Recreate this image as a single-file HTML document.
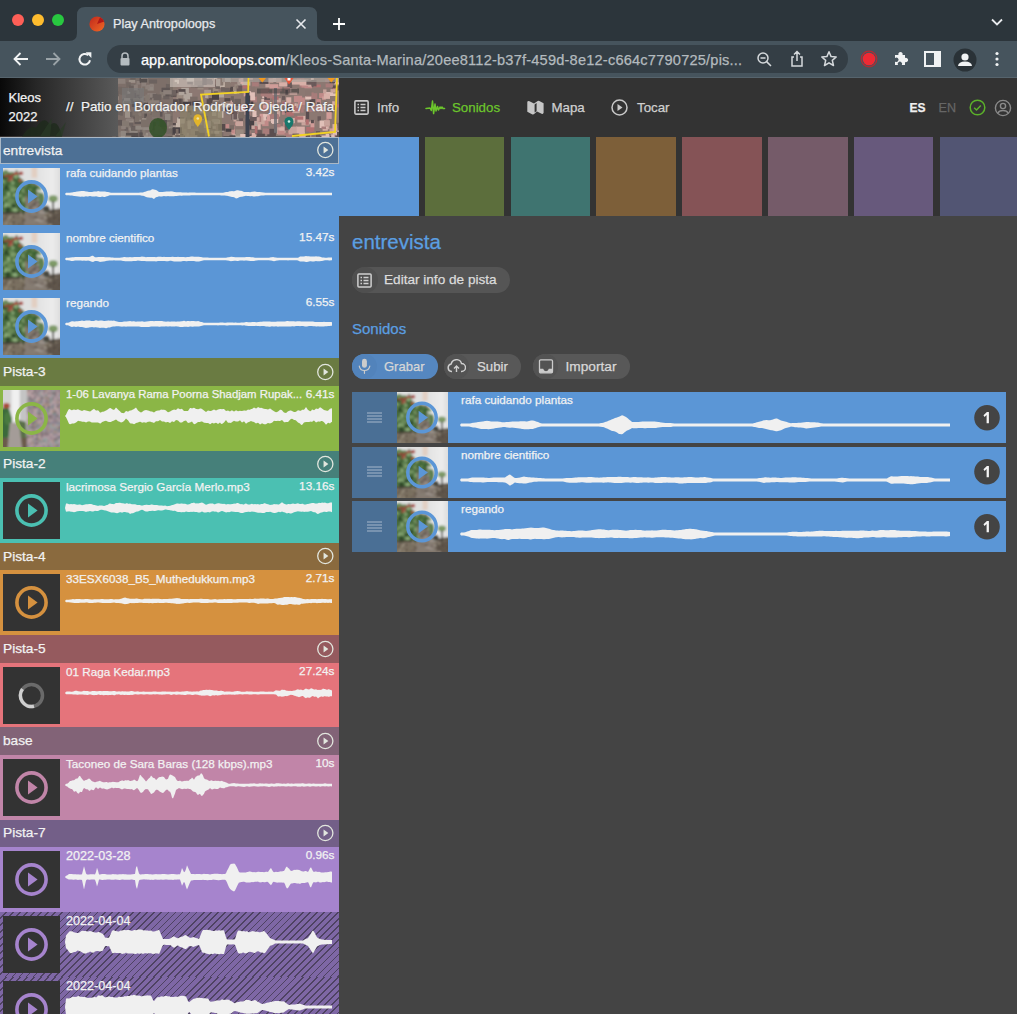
<!DOCTYPE html><html><head><meta charset="utf-8"><style>
*{box-sizing:border-box}
body{margin:0;width:1017px;height:1014px;overflow:hidden;position:relative;background:#444444;font-family:"Liberation Sans", sans-serif;}
.abs{position:absolute}
.t{position:absolute;white-space:nowrap;line-height:1;-webkit-text-stroke:0.25px currentColor}
</style></head><body>

<svg width="0" height="0" style="position:absolute"><defs><g id="gtex"><ellipse cx="8.5" cy="46.1" rx="3.1" ry="3.8" fill="#4a6a3c"/><ellipse cx="23.6" cy="50.4" rx="4.7" ry="3.4" fill="#6a8a58"/><ellipse cx="8.3" cy="77.7" rx="3.4" ry="4.5" fill="#2f4a2a"/><ellipse cx="15.5" cy="68.3" rx="2.7" ry="2.5" fill="#6a8a58"/><ellipse cx="15.2" cy="9.1" rx="4.3" ry="2.5" fill="#6a8a58"/><ellipse cx="-0.1" cy="62.6" rx="4.5" ry="2.8" fill="#6a8a58"/><ellipse cx="29.6" cy="69.5" rx="4.1" ry="4.8" fill="#2f4a2a"/><ellipse cx="30.0" cy="48.4" rx="4.9" ry="2.4" fill="#7a9a68"/><ellipse cx="2.3" cy="17.5" rx="2.7" ry="4.9" fill="#2f4a2a"/><ellipse cx="32.3" cy="67.9" rx="3.3" ry="4.5" fill="#6a8a58"/><ellipse cx="13.4" cy="49.0" rx="3.8" ry="4.7" fill="#4a6a3c"/><ellipse cx="10.3" cy="50.4" rx="4.1" ry="4.1" fill="#7a9a68"/><ellipse cx="40.4" cy="71.3" rx="3.7" ry="4.1" fill="#587a48"/><ellipse cx="25.9" cy="77.2" rx="2.8" ry="2.4" fill="#2f4a2a"/><ellipse cx="35.6" cy="77.3" rx="2.3" ry="4.4" fill="#2f4a2a"/><ellipse cx="16.8" cy="37.1" rx="2.4" ry="3.8" fill="#8aaa78"/><ellipse cx="-0.0" cy="58.3" rx="3.0" ry="4.6" fill="#7a9a68"/><ellipse cx="20.2" cy="77.9" rx="2.9" ry="2.2" fill="#6a8a58"/><ellipse cx="21.6" cy="74.4" rx="4.9" ry="2.9" fill="#7a9a68"/><ellipse cx="4.9" cy="11.0" rx="4.6" ry="2.9" fill="#587a48"/><ellipse cx="37.5" cy="34.4" rx="3.4" ry="3.6" fill="#4a6a3c"/><ellipse cx="36.1" cy="55.7" rx="2.3" ry="4.9" fill="#8aaa78"/><ellipse cx="20.3" cy="38.2" rx="4.2" ry="2.7" fill="#7a9a68"/><ellipse cx="17.2" cy="26.1" rx="2.9" ry="3.0" fill="#8aaa78"/><ellipse cx="16.3" cy="48.6" rx="2.1" ry="3.8" fill="#4a6a3c"/><ellipse cx="3.9" cy="52.3" rx="3.0" ry="3.1" fill="#7a9a68"/><ellipse cx="24.8" cy="27.5" rx="3.5" ry="3.8" fill="#4a6a3c"/><ellipse cx="-1.1" cy="33.8" rx="3.9" ry="2.9" fill="#6a8a58"/><ellipse cx="12.1" cy="33.5" rx="2.9" ry="3.1" fill="#6a8a58"/><ellipse cx="9.6" cy="63.1" rx="2.3" ry="4.4" fill="#6a8a58"/><ellipse cx="20.0" cy="53.8" rx="2.8" ry="3.0" fill="#4a6a3c"/><ellipse cx="17.2" cy="56.9" rx="2.3" ry="3.0" fill="#7a9a68"/><ellipse cx="27.7" cy="23.7" rx="4.4" ry="4.9" fill="#3f6035"/><ellipse cx="12.8" cy="53.5" rx="4.7" ry="3.4" fill="#587a48"/><ellipse cx="40.1" cy="30.1" rx="4.5" ry="3.7" fill="#8aaa78"/><ellipse cx="10.3" cy="64.5" rx="3.9" ry="4.4" fill="#7a9a68"/><ellipse cx="23.9" cy="37.5" rx="3.6" ry="4.5" fill="#2f4a2a"/><ellipse cx="13.2" cy="37.2" rx="3.3" ry="3.2" fill="#2f4a2a"/><ellipse cx="4.9" cy="8.3" rx="4.8" ry="4.6" fill="#6a8a58"/><ellipse cx="17.1" cy="74.5" rx="4.8" ry="2.7" fill="#4a6a3c"/><ellipse cx="18.1" cy="60.7" rx="4.2" ry="4.9" fill="#6a8a58"/><ellipse cx="13.0" cy="23.9" rx="2.2" ry="3.8" fill="#7a9a68"/><ellipse cx="3.3" cy="25.1" rx="2.1" ry="4.4" fill="#6a8a58"/><ellipse cx="38.6" cy="70.8" rx="4.7" ry="3.7" fill="#3f6035"/><ellipse cx="19.2" cy="16.5" rx="3.5" ry="2.7" fill="#3f6035"/><ellipse cx="21.1" cy="37.0" rx="4.8" ry="3.8" fill="#7a9a68"/><ellipse cx="3.5" cy="76.0" rx="3.6" ry="4.4" fill="#3f6035"/><ellipse cx="13.5" cy="21.8" rx="3.6" ry="4.5" fill="#587a48"/><ellipse cx="8.5" cy="27.2" rx="4.7" ry="2.4" fill="#3f6035"/><ellipse cx="19.5" cy="48.0" rx="3.2" ry="4.3" fill="#587a48"/><ellipse cx="9.8" cy="44.9" rx="3.3" ry="3.4" fill="#8aaa78"/><ellipse cx="34.1" cy="68.0" rx="4.3" ry="2.1" fill="#3f6035"/><ellipse cx="1.0" cy="76.2" rx="4.6" ry="2.3" fill="#6a8a58"/><ellipse cx="19.6" cy="19.0" rx="2.2" ry="3.2" fill="#2f4a2a"/><ellipse cx="23.8" cy="33.3" rx="2.6" ry="3.0" fill="#3f6035"/><ellipse cx="3.6" cy="8.2" rx="4.2" ry="4.4" fill="#6a8a58"/><ellipse cx="5.9" cy="34.1" rx="3.8" ry="4.3" fill="#2f4a2a"/><ellipse cx="26.0" cy="11.0" rx="4.7" ry="2.2" fill="#4a6a3c"/><ellipse cx="19.8" cy="57.2" rx="3.3" ry="4.1" fill="#2f4a2a"/><ellipse cx="-1.2" cy="23.3" rx="2.8" ry="3.8" fill="#8aaa78"/><ellipse cx="16.7" cy="37.8" rx="4.6" ry="4.8" fill="#7a9a68"/><ellipse cx="40.6" cy="47.1" rx="4.6" ry="2.4" fill="#4a6a3c"/><ellipse cx="3.4" cy="64.9" rx="4.0" ry="4.7" fill="#8aaa78"/><ellipse cx="14.6" cy="15.6" rx="3.0" ry="3.6" fill="#8aaa78"/><ellipse cx="23.9" cy="8.3" rx="2.4" ry="4.3" fill="#3f6035"/><ellipse cx="21.2" cy="47.5" rx="4.0" ry="3.1" fill="#8aaa78"/><ellipse cx="-1.0" cy="66.9" rx="2.4" ry="4.5" fill="#4a6a3c"/><ellipse cx="19.2" cy="56.7" rx="2.9" ry="2.9" fill="#3f6035"/><ellipse cx="-0.4" cy="61.7" rx="3.5" ry="4.1" fill="#3f6035"/><ellipse cx="22.4" cy="15.0" rx="3.7" ry="3.7" fill="#8aaa78"/><ellipse cx="22.8" cy="66.0" rx="2.7" ry="2.5" fill="#587a48"/><ellipse cx="18.0" cy="57.0" rx="4.8" ry="2.8" fill="#6a8a58"/><ellipse cx="15.5" cy="32.5" rx="3.3" ry="2.2" fill="#6a8a58"/><ellipse cx="8.4" cy="73.1" rx="4.5" ry="4.9" fill="#2f4a2a"/><ellipse cx="28.4" cy="60.9" rx="4.0" ry="3.6" fill="#2f4a2a"/><ellipse cx="4.9" cy="36.1" rx="4.7" ry="2.5" fill="#2f4a2a"/><ellipse cx="30.9" cy="72.2" rx="3.6" ry="3.3" fill="#4a6a3c"/><ellipse cx="20.7" cy="73.4" rx="4.6" ry="3.6" fill="#8aaa78"/><ellipse cx="11.0" cy="57.4" rx="3.2" ry="4.6" fill="#6a8a58"/><ellipse cx="41.3" cy="70.3" rx="2.9" ry="2.8" fill="#8aaa78"/><ellipse cx="14.8" cy="20.1" rx="3.1" ry="3.0" fill="#8aaa78"/><ellipse cx="36.0" cy="37.3" rx="4.1" ry="4.1" fill="#587a48"/><ellipse cx="18.6" cy="66.4" rx="4.5" ry="3.7" fill="#2f4a2a"/><ellipse cx="64.3" cy="48.5" rx="3.8" ry="2.1" fill="#587a48"/><ellipse cx="62.5" cy="44.4" rx="3.6" ry="2.1" fill="#587a48"/><ellipse cx="61.3" cy="32.3" rx="2.4" ry="2.5" fill="#587a48"/><ellipse cx="53.9" cy="45.3" rx="2.1" ry="3.9" fill="#587a48"/><ellipse cx="61.7" cy="34.4" rx="2.8" ry="3.5" fill="#3f6035"/><ellipse cx="37.8" cy="32.9" rx="3.8" ry="2.1" fill="#2f4a2a"/><ellipse cx="52.6" cy="45.3" rx="2.0" ry="2.7" fill="#2f4a2a"/><ellipse cx="46.1" cy="27.3" rx="3.3" ry="3.5" fill="#2f4a2a"/><ellipse cx="46.5" cy="41.3" rx="2.2" ry="2.5" fill="#4a6a3c"/><ellipse cx="47.8" cy="38.2" rx="3.1" ry="2.5" fill="#6a8a58"/><ellipse cx="64.1" cy="36.2" rx="3.5" ry="3.5" fill="#7a9a68"/><ellipse cx="55.2" cy="45.1" rx="3.9" ry="3.6" fill="#3f6035"/><ellipse cx="58.1" cy="53.8" rx="3.3" ry="3.1" fill="#3f6035"/><ellipse cx="55.3" cy="40.3" rx="2.1" ry="2.6" fill="#4a6a3c"/><ellipse cx="52.1" cy="30.5" rx="3.3" ry="3.3" fill="#587a48"/><ellipse cx="45.9" cy="52.6" rx="2.9" ry="2.2" fill="#6a8a58"/><ellipse cx="38.5" cy="34.9" rx="3.4" ry="3.2" fill="#6a8a58"/><ellipse cx="43.6" cy="30.6" rx="3.0" ry="3.6" fill="#4a6a3c"/><ellipse cx="36.2" cy="46.5" rx="3.5" ry="3.1" fill="#4a6a3c"/><ellipse cx="46.5" cy="28.0" rx="2.5" ry="2.1" fill="#587a48"/><ellipse cx="35.3" cy="40.1" rx="2.5" ry="3.5" fill="#7a9a68"/><ellipse cx="62.0" cy="53.4" rx="2.9" ry="3.6" fill="#3f6035"/><ellipse cx="45.3" cy="50.4" rx="2.2" ry="2.5" fill="#3f6035"/><ellipse cx="55.8" cy="41.9" rx="3.8" ry="2.2" fill="#4a6a3c"/><ellipse cx="40.1" cy="37.5" rx="3.5" ry="3.6" fill="#4a6a3c"/><rect x="56.2" y="58.2" width="8.3" height="3.6" fill="#5e5650"/><rect x="59.2" y="77.3" width="5.0" height="2.5" fill="#6a6058"/><rect x="58.9" y="53.4" width="8.5" height="3.9" fill="#a09890"/><rect x="65.4" y="67.2" width="5.5" height="3.0" fill="#5e5650"/><rect x="52.1" y="85.0" width="8.3" height="3.0" fill="#5e5650"/><rect x="57.4" y="61.1" width="4.5" height="3.5" fill="#958a82"/><rect x="57.6" y="75.6" width="6.3" height="2.4" fill="#5e5650"/><rect x="61.6" y="62.2" width="8.6" height="3.9" fill="#7a6e66"/><rect x="71.0" y="79.2" width="8.5" height="2.3" fill="#7a6e66"/><rect x="44.3" y="81.9" width="5.8" height="2.5" fill="#7a6e66"/><rect x="43.5" y="75.9" width="5.7" height="2.7" fill="#6a6058"/><rect x="46.9" y="85.3" width="8.3" height="3.2" fill="#7a6e66"/><rect x="66.5" y="86.4" width="5.7" height="3.6" fill="#7a6e66"/><rect x="57.7" y="93.4" width="7.8" height="3.0" fill="#7a6e66"/><rect x="56.2" y="89.8" width="8.2" height="3.4" fill="#a09890"/><rect x="62.5" y="75.9" width="6.7" height="2.8" fill="#a09890"/><rect x="54.6" y="66.6" width="7.8" height="2.8" fill="#958a82"/><rect x="44.1" y="73.9" width="5.3" height="3.7" fill="#a09890"/><rect x="60.0" y="77.4" width="5.1" height="2.0" fill="#958a82"/><rect x="52.0" y="64.4" width="8.3" height="3.1" fill="#958a82"/><rect x="47.4" y="62.0" width="6.0" height="2.3" fill="#7a6e66"/><rect x="56.4" y="58.7" width="6.2" height="2.4" fill="#7a6e66"/><rect x="51.5" y="71.3" width="4.2" height="3.4" fill="#958a82"/><rect x="53.5" y="71.4" width="4.1" height="3.9" fill="#958a82"/><rect x="52.4" y="63.6" width="5.0" height="2.7" fill="#7a6e66"/><rect x="46.4" y="68.6" width="4.3" height="3.5" fill="#6a6058"/><rect x="77.5" y="99.1" width="7.9" height="3.9" fill="#a09890"/><rect x="49.6" y="64.0" width="8.1" height="3.3" fill="#6a6058"/><rect x="44.7" y="67.2" width="6.2" height="2.2" fill="#5e5650"/><rect x="44.5" y="52.2" width="4.5" height="2.3" fill="#7a6e66"/><rect x="48.3" y="75.1" width="6.5" height="2.7" fill="#a09890"/><rect x="55.2" y="68.3" width="5.8" height="3.3" fill="#a09890"/><rect x="58.0" y="66.6" width="8.7" height="2.2" fill="#6a6058"/><rect x="52.6" y="60.8" width="6.5" height="3.1" fill="#5e5650"/><rect x="72.0" y="84.6" width="4.9" height="3.5" fill="#a09890"/><rect x="61.5" y="92.1" width="8.6" height="2.7" fill="#a09890"/><rect x="55.0" y="73.0" width="7.5" height="2.7" fill="#958a82"/><rect x="64.2" y="76.3" width="8.6" height="3.4" fill="#a09890"/><rect x="47.2" y="54.1" width="7.8" height="3.6" fill="#7a6e66"/><rect x="64.9" y="88.4" width="4.5" height="2.5" fill="#7a6e66"/><rect x="31.4" y="97.4" width="3.3" height="3.8" fill="#9a9080"/><rect x="35.9" y="80.0" width="2.6" height="3.6" fill="#8a806e"/><rect x="10.9" y="86.2" width="3.4" height="3.6" fill="#6e6454"/><rect x="7.1" y="81.0" width="2.5" height="3.3" fill="#8a806e"/><rect x="2.3" y="85.8" width="2.6" height="3.7" fill="#5a5044"/><rect x="17.2" y="98.1" width="3.0" height="3.8" fill="#6e6454"/><rect x="15.8" y="92.4" width="2.1" height="3.6" fill="#8a806e"/><rect x="30.6" y="82.0" width="4.8" height="2.5" fill="#8a806e"/><rect x="15.7" y="84.5" width="4.5" height="3.2" fill="#5a5044"/><rect x="26.9" y="97.4" width="3.0" height="3.2" fill="#5a5044"/><rect x="27.6" y="85.8" width="4.8" height="2.9" fill="#5a5044"/><rect x="5.8" y="90.8" width="3.4" height="3.5" fill="#8a806e"/><rect x="11.0" y="83.8" width="4.3" height="3.8" fill="#9a9080"/><rect x="14.1" y="93.0" width="3.8" height="2.4" fill="#9a9080"/><rect x="29.8" y="81.2" width="2.7" height="2.9" fill="#9a9080"/><rect x="6.3" y="83.3" width="4.8" height="3.5" fill="#5a5044"/><rect x="33.4" y="90.7" width="3.3" height="3.9" fill="#5a5044"/><rect x="16.4" y="95.5" width="3.2" height="4.0" fill="#8a806e"/><rect x="9.1" y="98.7" width="2.6" height="2.2" fill="#6e6454"/><rect x="9.2" y="90.4" width="3.9" height="2.1" fill="#6e6454"/><rect x="8.5" y="88.6" width="3.0" height="3.5" fill="#9a9080"/><rect x="3.4" y="88.9" width="4.7" height="2.9" fill="#6e6454"/><rect x="3.8" y="95.3" width="4.1" height="4.0" fill="#9a9080"/><rect x="33.8" y="88.6" width="4.8" height="2.9" fill="#6e6454"/><rect x="11.7" y="97.1" width="2.9" height="2.9" fill="#9a9080"/><rect x="28.7" y="85.9" width="2.7" height="3.6" fill="#8a806e"/><rect x="-1.5" y="92.6" width="2.4" height="2.0" fill="#8a806e"/><rect x="-1.9" y="99.7" width="4.4" height="2.7" fill="#9a9080"/><rect x="35.2" y="80.7" width="2.6" height="2.0" fill="#5a5044"/><rect x="32.4" y="96.7" width="3.8" height="3.6" fill="#5a5044"/><rect x="9.8" y="84.9" width="4.4" height="2.8" fill="#9a9080"/><rect x="10.9" y="80.6" width="2.1" height="4.0" fill="#6e6454"/><rect x="32.7" y="96.2" width="2.7" height="2.3" fill="#5a5044"/><rect x="17.3" y="96.6" width="3.7" height="2.6" fill="#6e6454"/><rect x="-0.3" y="89.7" width="2.2" height="3.6" fill="#5a5044"/><rect x="15.8" y="93.3" width="4.8" height="3.6" fill="#5a5044"/><rect x="12.1" y="92.6" width="2.9" height="2.1" fill="#6e6454"/><rect x="35.7" y="90.9" width="3.2" height="2.7" fill="#5a5044"/><rect x="8.6" y="85.1" width="2.8" height="3.1" fill="#9a9080"/><rect x="3.3" y="80.8" width="3.5" height="2.5" fill="#5a5044"/><rect x="98.1" y="89.9" width="2.1" height="3.1" fill="#4a4038"/><rect x="75.2" y="77.3" width="4.4" height="3.5" fill="#9a9080"/><rect x="74.9" y="91.4" width="3.1" height="3.0" fill="#5a5044"/><rect x="77.5" y="97.9" width="2.5" height="2.8" fill="#5a5044"/><rect x="80.9" y="81.0" width="4.8" height="3.9" fill="#9a9080"/><rect x="89.1" y="88.4" width="2.1" height="2.8" fill="#5a5044"/><rect x="99.4" y="76.1" width="2.7" height="2.4" fill="#8a806e"/><rect x="91.5" y="77.0" width="3.9" height="2.2" fill="#8a806e"/><rect x="98.4" y="99.3" width="4.1" height="2.9" fill="#5a5044"/><rect x="84.9" y="81.5" width="3.7" height="2.3" fill="#5a5044"/><rect x="98.8" y="77.7" width="4.7" height="2.4" fill="#5a5044"/><rect x="90.9" y="90.8" width="2.4" height="2.1" fill="#6e6454"/><rect x="80.7" y="90.9" width="2.4" height="2.3" fill="#4a4038"/><rect x="98.9" y="87.9" width="3.1" height="2.2" fill="#5a5044"/><rect x="77.1" y="74.7" width="2.3" height="2.2" fill="#9a9080"/><rect x="75.6" y="83.2" width="4.7" height="2.2" fill="#6e6454"/><rect x="72.2" y="83.6" width="2.4" height="3.0" fill="#8a806e"/><rect x="81.9" y="98.7" width="3.5" height="3.4" fill="#9a9080"/><rect x="85.2" y="93.2" width="3.6" height="3.7" fill="#5a5044"/><rect x="87.9" y="86.1" width="3.6" height="2.9" fill="#4a4038"/><ellipse cx="17.3" cy="12.1" rx="3.0" ry="1.9" fill="#983a34"/><ellipse cx="32.2" cy="8.9" rx="3.4" ry="2.8" fill="#b04a40"/><ellipse cx="12.0" cy="19.4" rx="1.8" ry="2.4" fill="#b04a40"/><ellipse cx="15.6" cy="20.0" rx="1.7" ry="1.5" fill="#b04a40"/><ellipse cx="30.2" cy="21.9" rx="2.9" ry="2.3" fill="#c05a48"/><ellipse cx="3.5" cy="14.6" rx="2.4" ry="1.7" fill="#983a34"/><ellipse cx="8.3" cy="13.3" rx="2.6" ry="2.5" fill="#983a34"/><ellipse cx="13.6" cy="15.6" rx="3.5" ry="2.9" fill="#983a34"/><ellipse cx="31.7" cy="10.6" rx="3.5" ry="1.9" fill="#b04a40"/><ellipse cx="22.9" cy="9.5" rx="3.5" ry="2.6" fill="#b04a40"/><ellipse cx="10.7" cy="21.5" rx="2.4" ry="2.2" fill="#983a34"/><ellipse cx="30.0" cy="8.8" rx="2.7" ry="2.3" fill="#983a34"/></g></defs></svg>
<div class="abs" style="left:0;top:0;width:1017px;height:41px;background:#2c353b"></div>
<div class="abs" style="left:0;top:41px;width:1017px;height:37px;background:#46545d"></div>
<div class="abs" style="left:0;top:77px;width:1017px;height:1px;background:#56646d"></div>
<svg class="abs" style="left:69px;top:7px" width="256" height="34" viewBox="0 0 256 34">
<path d="M0,34 Q8,34 8,26 L8,8 Q8,0 16,0 L240,0 Q248,0 248,8 L248,26 Q248,34 256,34Z" fill="#46545d"/></svg>
<div class="abs" style="left:12px;top:14px;width:12px;height:12px;border-radius:50%;background:#fe5f57"></div>
<div class="abs" style="left:32px;top:14px;width:12px;height:12px;border-radius:50%;background:#febc2e"></div>
<div class="abs" style="left:52px;top:14px;width:12px;height:12px;border-radius:50%;background:#28c840"></div>
<svg class="abs" style="left:89px;top:16px" width="16" height="16" viewBox="0 0 16 16">
<defs><linearGradient id="fav" x1="0" y1="0" x2="1" y2="1"><stop offset="0" stop-color="#c0271c"/><stop offset="1" stop-color="#f06a25"/></linearGradient></defs>
<circle cx="8" cy="8" r="7.6" fill="url(#fav)"/><path d="M8,8 L15.2,5.5 A7.6,7.6 0 0 0 11,1.2Z" fill="#b01818"/></svg>
<div class="t" style="left:113px;top:18px;font-size:12.7px;color:#e8eaed">Play Antropoloops</div>
<svg class="abs" style="left:295px;top:18px" width="12" height="12" viewBox="0 0 12 12"><path d="M1.5,1.5 L10.5,10.5 M10.5,1.5 L1.5,10.5" stroke="#e8eaed" stroke-width="1.6"/></svg>
<svg class="abs" style="left:332px;top:17px" width="14" height="14" viewBox="0 0 14 14"><path d="M7,1 V13 M1,7 H13" stroke="#ffffff" stroke-width="1.8"/></svg>
<svg class="abs" style="left:990px;top:17px" width="14" height="10" viewBox="0 0 14 10"><path d="M2,2.5 L7,7.5 L12,2.5" fill="none" stroke="#e8eaed" stroke-width="1.8"/></svg>
<svg class="abs" style="left:12px;top:51px" width="18" height="16" viewBox="0 0 18 16"><path d="M16,8 H3 M8.5,2 L2.5,8 L8.5,14" fill="none" stroke="#f1f3f4" stroke-width="1.8"/></svg>
<svg class="abs" style="left:44px;top:51px" width="18" height="16" viewBox="0 0 18 16"><path d="M2,8 H15 M9.5,2 L15.5,8 L9.5,14" fill="none" stroke="#9aa3a8" stroke-width="1.8"/></svg>
<svg class="abs" style="left:77px;top:51px" width="16" height="16" viewBox="0 0 16 16"><path d="M13,9.2 A5.3,5.3 0 1 1 11.2,4.2" fill="none" stroke="#f1f3f4" stroke-width="2"/><path d="M8.6,1.2 L14.4,1.2 L14.4,7Z" fill="#f1f3f4"/></svg>
<div class="abs" style="left:107px;top:45px;width:741px;height:28px;border-radius:14px;background:#343e45"></div>
<svg class="abs" style="left:119px;top:52px" width="12" height="14" viewBox="0 0 12 14"><path d="M3,6 V4 A3,3 0 0 1 9,4 V6" fill="none" stroke="#b5bcc0" stroke-width="1.5"/><rect x="1.5" y="6" width="9" height="7.5" rx="1" fill="#b5bcc0"/></svg>
<div class="t" style="left:141px;top:52.5px;font-size:14.6px;color:#ffffff">app.antropoloops.com<span style="color:#b3babe;letter-spacing:0.2px">/Kleos-Santa-Marina/20ee8112-b37f-459d-8e12-c664c7790725/pis...</span></div>
<svg class="abs" style="left:756px;top:51px" width="17" height="17" viewBox="0 0 17 17"><circle cx="7" cy="7" r="5" fill="none" stroke="#d5d9dc" stroke-width="1.5"/><path d="M4.5,7 H9.5 M10.6,10.6 L15,15" stroke="#d5d9dc" stroke-width="1.5"/></svg>
<svg class="abs" style="left:789px;top:50px" width="16" height="18" viewBox="0 0 16 18"><path d="M5,7 H3 V16 H13 V7 H11 M8,11 V2 M5,4.5 L8,1.5 L11,4.5" fill="none" stroke="#d5d9dc" stroke-width="1.5"/></svg>
<svg class="abs" style="left:820px;top:50px" width="18" height="18" viewBox="0 0 18 18"><path d="M9,1.8 L11.1,6.6 L16.2,7 L12.3,10.4 L13.5,15.5 L9,12.8 L4.5,15.5 L5.7,10.4 L1.8,7 L6.9,6.6Z" fill="none" stroke="#d5d9dc" stroke-width="1.5" stroke-linejoin="round"/></svg>
<svg class="abs" style="left:860px;top:50px" width="18" height="18" viewBox="0 0 18 18"><circle cx="9" cy="9" r="7.8" fill="none" stroke="#b52a32" stroke-width="1.2"/><circle cx="9" cy="9" r="6.3" fill="#ee2a34"/></svg>
<svg class="abs" style="left:892px;top:50px" width="18" height="18" viewBox="0 0 18 18"><path d="M3,5 H6.5 A2.2,2.2 0 1 1 10.5,5 H13 V8 A2.2,2.2 0 1 1 13,12 V15 H9.8 A2.2,2.2 0 1 0 6,15 H3 V11.5 A2.2,2.2 0 1 0 3,8Z" fill="#f1f3f4"/></svg>
<svg class="abs" style="left:924px;top:51px" width="17" height="16" viewBox="0 0 17 16"><rect x="1" y="1" width="15" height="14" fill="none" stroke="#f1f3f4" stroke-width="2"/><rect x="10" y="1" width="6" height="14" fill="#f1f3f4"/></svg>
<svg class="abs" style="left:953px;top:48px" width="24" height="24" viewBox="0 0 24 24"><circle cx="12" cy="12" r="11.5" fill="#2a3237"/><circle cx="12" cy="9" r="3.6" fill="#f1f3f4"/><path d="M5,18 Q5.5,13.5 12,13.5 Q18.5,13.5 19,18Z" fill="#f1f3f4"/></svg>
<svg class="abs" style="left:993px;top:51px" width="8" height="16" viewBox="0 0 8 16"><circle cx="4" cy="2.5" r="1.6" fill="#f1f3f4"/><circle cx="4" cy="8" r="1.6" fill="#f1f3f4"/><circle cx="4" cy="13.5" r="1.6" fill="#f1f3f4"/></svg>
<div class="abs" style="left:339px;top:78px;width:678px;height:138px;background:#333333"></div>
<svg class="abs" style="left:354px;top:100px" width="15" height="15" viewBox="0 0 15 15"><rect x="0.9" y="0.9" width="13.2" height="13.2" rx="1" fill="none" stroke="#c8c8c8" stroke-width="1.6"/><path d="M3.5,4.5 H5 M6.5,4.5 H11.5 M3.5,7.5 H5 M6.5,7.5 H11.5 M3.5,10.5 H5 M6.5,10.5 H11.5" stroke="#c8c8c8" stroke-width="1.4"/></svg>
<div class="t" style="left:377px;top:100.5px;font-size:13.3px;color:#d0d0d0">Info</div>
<svg class="abs" style="left:422px;top:96px" width="28" height="22" viewBox="0 0 28 22"><path d="M4,12.4 L8,12 L9.3,14.5 L10.5,5 L11.6,17.6 L13,8 L14,15 L15.5,10.5 L16.5,14 L18,11 L19,12.5 L20,11 L21,12.5 L22.6,12.4" fill="none" stroke="#6cc62c" stroke-width="1.5" stroke-linejoin="round" stroke-linecap="round"/></svg>
<div class="t" style="left:452px;top:100.5px;font-size:13.3px;color:#6cc62c">Sonidos</div>
<svg class="abs" style="left:527px;top:100px" width="17" height="15" viewBox="0 0 17 15"><path d="M0.3,1.8 Q1,0.6 2.5,1.3 L7,3.5 L10,1.5 Q11,0.3 12.3,1 L16.6,3.3 V12.8 Q16.2,14.4 14.6,13.7 L10,11.6 L7.4,13.8 Q6.4,15 5,14.3 L0.3,11.8 Z" fill="#c6c6c6"/><path d="M7.6,4.4 L9.6,3.1 V11.2 L7.6,12.6Z" fill="#333"/></svg>
<div class="t" style="left:551.5px;top:100.5px;font-size:13.3px;color:#d0d0d0">Mapa</div>
<svg class="abs" style="left:611px;top:98.5px" width="17" height="17" viewBox="0 0 17 17"><circle cx="8.5" cy="8.5" r="7.5" fill="none" stroke="#c8c8c8" stroke-width="1.5"/><path d="M6.5,5 L11.5,8.5 L6.5,12Z" fill="#c8c8c8"/></svg>
<div class="t" style="left:637px;top:100.5px;font-size:13.3px;color:#d0d0d0">Tocar</div>
<div class="t" style="left:909.5px;top:102px;font-size:12px;font-weight:bold;color:#f0f0f0">ES</div>
<div class="t" style="left:938.5px;top:101.5px;font-size:12.6px;color:#666666">EN</div>
<svg class="abs" style="left:969px;top:99px" width="17" height="17" viewBox="0 0 17 17"><circle cx="8.5" cy="8.5" r="7.3" fill="none" stroke="#5bb12a" stroke-width="1.5"/><path d="M5.2,8.8 L7.5,11 L11.8,6.5" fill="none" stroke="#5bb12a" stroke-width="1.5"/></svg>
<svg class="abs" style="left:994px;top:99px" width="18" height="18" viewBox="0 0 18 18"><circle cx="9" cy="9" r="7.6" fill="none" stroke="#8a8a8a" stroke-width="1.4"/><circle cx="9" cy="7" r="2.6" fill="none" stroke="#8a8a8a" stroke-width="1.4"/><path d="M3.8,14.2 Q5,11.5 9,11.5 Q13,11.5 14.2,14.2" fill="none" stroke="#8a8a8a" stroke-width="1.4"/></svg>
<div class="abs" style="left:339.0px;top:137px;width:79.6px;height:79px;background:#5b96d6"></div>
<div class="abs" style="left:424.8px;top:137px;width:79.6px;height:79px;background:#5c6e3c"></div>
<div class="abs" style="left:510.6px;top:137px;width:79.6px;height:79px;background:#3f7470"></div>
<div class="abs" style="left:596.4px;top:137px;width:79.6px;height:79px;background:#7d5f39"></div>
<div class="abs" style="left:682.2px;top:137px;width:79.6px;height:79px;background:#855356"></div>
<div class="abs" style="left:768.0px;top:137px;width:79.6px;height:79px;background:#755b69"></div>
<div class="abs" style="left:853.8px;top:137px;width:79.6px;height:79px;background:#67597c"></div>
<div class="abs" style="left:939.6px;top:137px;width:79.6px;height:79px;background:#525573"></div>
<div class="t" style="left:352px;top:232px;font-size:20.5px;color:#5b9fe2">entrevista</div>
<div class="abs" style="left:352px;top:267px;width:158px;height:26px;border-radius:13px;background:#555555"></div>
<div class="abs" style="left:352px;top:267px;width:26px;height:26px;border-radius:13px;background:#4f4f4f"></div>
<svg class="abs" style="left:357px;top:273px" width="15" height="15" viewBox="0 0 15 15"><rect x="0.9" y="0.9" width="13.2" height="13.2" rx="1" fill="none" stroke="#cfcfcf" stroke-width="1.5"/><path d="M3.5,4.5 H5 M6.5,4.5 H11.5 M3.5,7.5 H5 M6.5,7.5 H11.5 M3.5,10.5 H5 M6.5,10.5 H11.5" stroke="#cfcfcf" stroke-width="1.3"/></svg>
<div class="t" style="left:384px;top:273px;font-size:13.6px;color:#dcdcdc">Editar info de pista</div>
<div class="t" style="left:352px;top:321px;font-size:15px;color:#5b9fe2">Sonidos</div>
<div class="abs" style="left:352px;top:354px;width:86px;height:24.5px;border-radius:12.25px;background:#5587c0"></div>
<div class="abs" style="left:352px;top:354px;width:24.5px;height:24.5px;border-radius:12.25px;background:#5283bb"></div>
<svg class="abs" style="left:358px;top:358px" width="13" height="16" viewBox="0 0 13 16"><rect x="4" y="0.8" width="4.9" height="9" rx="2.4" fill="#cccccc"/><path d="M1.3,8.1 Q2,12.5 6.45,12.5 Q10.9,12.5 11.8,8.1 M6.45,12.5 V15.3" fill="none" stroke="#cccccc" stroke-width="1.2" stroke-linecap="round"/></svg>
<div class="t" style="left:384px;top:359.5px;font-size:13px;color:#d6d6d6">Grabar</div>
<div class="abs" style="left:444px;top:354px;width:77px;height:24.5px;border-radius:12.25px;background:#585858"></div>
<div class="abs" style="left:444px;top:354px;width:24.5px;height:24.5px;border-radius:12.25px;background:#535353"></div>
<svg class="abs" style="left:447px;top:359px" width="19" height="14" viewBox="0 0 19 14"><path d="M5,12.5 H4.5 A3.8,3.8 0 0 1 4.2,5 A5.3,5.3 0 0 1 14.5,4.5 A4,4 0 0 1 14.5,12.5 H14" fill="none" stroke="#d0d0d0" stroke-width="1.4"/><path d="M9.5,13 V7.5 M7,9.5 L9.5,7 L12,9.5" fill="none" stroke="#d0d0d0" stroke-width="1.4"/></svg>
<div class="t" style="left:477px;top:359.5px;font-size:13.2px;color:#d9d9d9">Subir</div>
<div class="abs" style="left:533px;top:354px;width:97px;height:24.5px;border-radius:12.25px;background:#585858"></div>
<div class="abs" style="left:533px;top:354px;width:24.5px;height:24.5px;border-radius:12.25px;background:#535353"></div>
<svg class="abs" style="left:538px;top:358px" width="16" height="16" viewBox="0 0 16 16"><rect x="1.5" y="1.8" width="13" height="13" rx="1.2" fill="none" stroke="#cbcbcb" stroke-width="1.3"/><path d="M1.5,10.8 H5.2 Q5.6,13.2 8,13.2 Q10.4,13.2 10.8,10.8 H14.5 V14.8 H1.5Z" fill="#cbcbcb"/></svg>
<div class="t" style="left:565.5px;top:359.5px;font-size:13.7px;color:#d9d9d9">Importar</div>
<div class="abs" style="left:352px;top:392px;width:654px;height:51px;background:#5b96d6"></div>
<div class="abs" style="left:352px;top:392px;width:45px;height:51px;background:#4a6f95"></div>
<svg class="abs" style="left:367px;top:411.5px" width="15" height="11" viewBox="0 0 15 11"><path d="M0,1 H15 M0,4 H15 M0,7 H15 M0,10 H15" stroke="#a5b7cb" stroke-width="1.2"/></svg>
<svg style="position:absolute;left:397px;top:392px" width="51" height="51" viewBox="0 0 100 100" preserveAspectRatio="none">
<defs><filter id="blm0" x="-5%" y="-5%" width="110%" height="110%"><feGaussianBlur stdDeviation="2.0"/></filter>
<linearGradient id="wgm0" x1="0" y1="0" x2="1" y2="0"><stop offset="0" stop-color="#e2e2e2"/><stop offset="0.6" stop-color="#ececec"/><stop offset="1" stop-color="#d8d8d8"/></linearGradient>
<clipPath id="cpm0"><rect width="100" height="100"/></clipPath></defs>
<g clip-path="url(#cpm0)"><g filter="url(#blm0)">
<rect x="-5" y="-5" width="110" height="110" fill="#807566"/>
<rect x="-5" y="-5" width="110" height="30" fill="#e0e0e0"/>
<rect x="60" y="-5" width="45" height="85" fill="url(#wgm0)"/>
<rect x="50" y="-5" width="10" height="22" fill="#e2cfc2"/>
<path d="M-5,6 L20,8 L36,22 L40,76 L-5,80Z" fill="#4a6c3c"/>
<ellipse cx="48" cy="36" rx="12" ry="9" fill="#3a6230"/>
<path d="M35,100 L44,52 L62,52 L80,100Z" fill="#857b72"/>
<rect x="-5" y="80" width="40" height="25" fill="#7a7060"/>
<path d="M74,74 L105,70 L105,105 L80,105Z" fill="#5e554c"/>
<use href="#gtex"/>
<rect x="-5" y="77" width="35" height="3" fill="#3e3830"/>
<ellipse cx="68" cy="55" rx="5" ry="12" fill="#5e8050"/>
<ellipse cx="88" cy="54" rx="8" ry="6" fill="#7e9a68"/>
<rect x="86.5" y="58" width="3" height="20" fill="#3a3a32"/>
<ellipse cx="76" cy="72" rx="6" ry="6" fill="#4a4a40"/>
</g></g></svg>
<svg class="abs" style="left:397px;top:392px" width="51" height="51" viewBox="0 0 51 51"><circle cx="25" cy="25.5" r="14.2" fill="none" stroke="#5b96d6" stroke-width="3.5"/><path d="M21.60,18.70 L30.92,25.50 L21.60,32.30Z" fill="#5b96d6"/></svg>
<div class="t" style="left:461px;top:394px;font-size:11.7px;color:#f2f2f2">rafa cuidando plantas</div>
<svg class="abs" style="left:461px;top:425.3px;overflow:visible" width="489" height="1"><path d="M-1.0,0.0L0.0,-1.5L1.0,-1.5L2.0,-1.5L3.0,-1.5L4.0,-1.5L5.0,-1.5L6.0,-1.5L7.0,-1.5L8.0,-1.5L9.0,-1.6L10.0,-1.8L11.0,-2.0L12.0,-2.2L13.0,-2.3L14.0,-2.5L15.0,-2.6L16.0,-2.7L17.0,-2.9L18.0,-3.0L19.0,-3.2L20.0,-3.3L21.0,-3.5L22.0,-3.6L23.0,-3.8L24.0,-3.9L25.0,-4.1L26.0,-4.2L27.0,-4.1L28.0,-3.9L29.0,-3.7L30.0,-3.6L31.0,-3.6L32.0,-3.6L33.0,-3.5L34.0,-3.5L35.0,-3.5L36.0,-3.5L37.0,-3.5L38.0,-3.3L39.0,-3.2L40.0,-3.0L41.0,-2.8L42.0,-2.7L43.0,-2.7L44.0,-2.8L45.0,-2.9L46.0,-3.0L47.0,-3.0L48.0,-3.1L49.0,-3.2L50.0,-3.3L51.0,-3.4L52.0,-3.4L53.0,-3.4L54.0,-3.4L55.0,-3.4L56.0,-3.5L57.0,-3.5L58.0,-3.6L59.0,-3.7L60.0,-3.7L61.0,-3.8L62.0,-3.8L63.0,-3.8L64.0,-3.7L65.0,-3.6L66.0,-3.6L67.0,-3.8L68.0,-4.0L69.0,-4.2L70.0,-4.4L71.0,-4.5L72.0,-4.6L73.0,-4.3L74.0,-4.0L75.0,-3.6L76.0,-3.3L77.0,-3.0L78.0,-2.6L79.0,-2.1L80.0,-1.7L81.0,-1.5L82.0,-1.5L83.0,-1.5L84.0,-1.5L85.0,-1.5L86.0,-1.5L87.0,-1.5L88.0,-1.5L89.0,-1.5L90.0,-1.5L91.0,-1.5L92.0,-1.5L93.0,-1.5L94.0,-1.5L95.0,-1.5L96.0,-1.5L97.0,-1.5L98.0,-1.5L99.0,-1.5L100.0,-1.5L101.0,-1.5L102.0,-1.5L103.0,-1.5L104.0,-1.5L105.0,-1.5L106.0,-1.5L107.0,-1.5L108.0,-1.5L109.0,-1.5L110.0,-1.5L111.0,-1.5L112.0,-1.5L113.0,-1.5L114.0,-1.5L115.0,-1.5L116.0,-1.5L117.0,-1.5L118.0,-1.5L119.0,-1.5L120.0,-1.5L121.0,-1.5L122.0,-1.5L123.0,-1.5L124.0,-1.5L125.0,-1.5L126.0,-1.5L127.0,-1.5L128.0,-1.5L129.0,-1.5L130.0,-1.5L131.0,-1.5L132.0,-1.5L133.0,-1.5L134.0,-1.5L135.0,-1.5L136.0,-1.5L137.0,-1.5L138.0,-1.6L139.0,-1.8L140.0,-1.9L141.0,-2.0L142.0,-2.2L143.0,-2.6L144.0,-3.0L145.0,-3.3L146.0,-3.6L147.0,-3.9L148.0,-4.4L149.0,-4.8L150.0,-5.3L151.0,-5.7L152.0,-6.1L153.0,-6.5L154.0,-6.9L155.0,-7.2L156.0,-7.5L157.0,-7.9L158.0,-8.3L159.0,-8.8L160.0,-9.3L161.0,-9.8L162.0,-9.6L163.0,-9.1L164.0,-8.6L165.0,-8.0L166.0,-7.3L167.0,-6.4L168.0,-5.6L169.0,-4.7L170.0,-3.9L171.0,-3.1L172.0,-2.9L173.0,-2.9L174.0,-2.9L175.0,-2.9L176.0,-3.0L177.0,-3.1L178.0,-3.1L179.0,-3.2L180.0,-3.3L181.0,-3.4L182.0,-3.4L183.0,-3.5L184.0,-3.5L185.0,-3.5L186.0,-3.4L187.0,-3.4L188.0,-3.4L189.0,-3.5L190.0,-3.6L191.0,-3.6L192.0,-3.6L193.0,-3.5L194.0,-3.4L195.0,-3.3L196.0,-3.2L197.0,-3.0L198.0,-2.9L199.0,-2.7L200.0,-2.6L201.0,-2.4L202.0,-2.3L203.0,-2.2L204.0,-2.1L205.0,-2.0L206.0,-1.9L207.0,-1.9L208.0,-1.9L209.0,-1.9L210.0,-1.9L211.0,-1.8L212.0,-1.7L213.0,-1.6L214.0,-1.5L215.0,-1.5L216.0,-1.5L217.0,-1.5L218.0,-1.5L219.0,-1.5L220.0,-1.5L221.0,-1.5L222.0,-1.5L223.0,-1.5L224.0,-1.5L225.0,-1.5L226.0,-1.6L227.0,-1.6L228.0,-1.6L229.0,-1.6L230.0,-1.5L231.0,-1.5L232.0,-1.5L233.0,-1.5L234.0,-1.5L235.0,-1.5L236.0,-1.5L237.0,-1.5L238.0,-1.5L239.0,-1.5L240.0,-1.5L241.0,-1.5L242.0,-1.5L243.0,-1.5L244.0,-1.5L245.0,-1.5L246.0,-1.5L247.0,-1.5L248.0,-1.5L249.0,-1.5L250.0,-1.5L251.0,-1.5L252.0,-1.5L253.0,-1.5L254.0,-1.5L255.0,-1.5L256.0,-1.5L257.0,-1.5L258.0,-1.5L259.0,-1.5L260.0,-1.5L261.0,-1.5L262.0,-1.5L263.0,-1.5L264.0,-1.5L265.0,-1.5L266.0,-1.5L267.0,-1.5L268.0,-1.5L269.0,-1.5L270.0,-1.5L271.0,-1.5L272.0,-1.5L273.0,-1.5L274.0,-1.5L275.0,-1.5L276.0,-1.5L277.0,-1.5L278.0,-1.5L279.0,-1.5L280.0,-1.5L281.0,-1.5L282.0,-1.5L283.0,-1.5L284.0,-1.5L285.0,-1.5L286.0,-1.5L287.0,-1.5L288.0,-1.5L289.0,-1.5L290.0,-1.5L291.0,-1.5L292.0,-1.6L293.0,-1.9L294.0,-2.1L295.0,-2.4L296.0,-2.7L297.0,-2.9L298.0,-3.2L299.0,-3.5L300.0,-3.8L301.0,-4.1L302.0,-4.4L303.0,-4.7L304.0,-4.8L305.0,-4.9L306.0,-4.9L307.0,-4.8L308.0,-4.8L309.0,-4.7L310.0,-5.0L311.0,-5.3L312.0,-5.6L313.0,-5.9L314.0,-6.2L315.0,-6.4L316.0,-6.4L317.0,-5.9L318.0,-5.4L319.0,-4.9L320.0,-4.4L321.0,-4.3L322.0,-4.1L323.0,-3.8L324.0,-3.5L325.0,-3.2L326.0,-2.9L327.0,-2.6L328.0,-2.3L329.0,-2.0L330.0,-1.8L331.0,-1.9L332.0,-1.9L333.0,-2.0L334.0,-2.1L335.0,-2.1L336.0,-2.1L337.0,-2.2L338.0,-2.2L339.0,-2.2L340.0,-2.3L341.0,-2.4L342.0,-2.5L343.0,-2.7L344.0,-2.8L345.0,-3.0L346.0,-3.0L347.0,-2.9L348.0,-2.9L349.0,-2.8L350.0,-2.8L351.0,-2.8L352.0,-2.8L353.0,-2.8L354.0,-2.7L355.0,-2.6L356.0,-2.5L357.0,-2.4L358.0,-2.2L359.0,-2.0L360.0,-1.8L361.0,-1.7L362.0,-1.6L363.0,-1.5L364.0,-1.5L365.0,-1.5L366.0,-1.5L367.0,-1.5L368.0,-1.5L369.0,-1.5L370.0,-1.5L371.0,-1.5L372.0,-1.5L373.0,-1.5L374.0,-1.5L375.0,-1.5L376.0,-1.5L377.0,-1.5L378.0,-1.5L379.0,-1.5L380.0,-1.5L381.0,-1.5L382.0,-1.5L383.0,-1.5L384.0,-1.5L385.0,-1.5L386.0,-1.5L387.0,-1.5L388.0,-1.5L389.0,-1.5L390.0,-1.5L391.0,-1.5L392.0,-1.5L393.0,-1.5L394.0,-1.5L395.0,-1.5L396.0,-1.5L397.0,-1.5L398.0,-1.5L399.0,-1.5L400.0,-1.5L401.0,-1.5L402.0,-1.5L403.0,-1.5L404.0,-1.5L405.0,-1.5L406.0,-1.5L407.0,-1.5L408.0,-1.5L409.0,-1.5L410.0,-1.5L411.0,-1.5L412.0,-1.5L413.0,-1.5L414.0,-1.5L415.0,-1.5L416.0,-1.5L417.0,-1.5L418.0,-1.5L419.0,-1.5L420.0,-1.5L421.0,-1.5L422.0,-1.5L423.0,-1.5L424.0,-1.5L425.0,-1.5L426.0,-1.5L427.0,-1.5L428.0,-1.5L429.0,-1.5L430.0,-1.5L431.0,-1.5L432.0,-1.5L433.0,-1.5L434.0,-1.5L435.0,-1.5L436.0,-1.5L437.0,-1.5L438.0,-1.5L439.0,-1.5L440.0,-1.5L441.0,-1.5L442.0,-1.5L443.0,-1.5L444.0,-1.5L445.0,-1.5L446.0,-1.5L447.0,-1.5L448.0,-1.5L449.0,-1.5L450.0,-1.5L451.0,-1.5L452.0,-1.5L453.0,-1.5L454.0,-1.5L455.0,-1.5L456.0,-1.5L457.0,-1.5L458.0,-1.5L459.0,-1.5L460.0,-1.5L461.0,-1.5L462.0,-1.5L463.0,-1.5L464.0,-1.5L465.0,-1.5L466.0,-1.5L467.0,-1.5L468.0,-1.5L469.0,-1.5L470.0,-1.5L471.0,-1.5L472.0,-1.5L473.0,-1.5L474.0,-1.5L475.0,-1.5L476.0,-1.5L477.0,-1.5L478.0,-1.5L479.0,-1.5L480.0,-1.5L481.0,-1.5L482.0,-1.5L483.0,-1.5L484.0,-1.5L485.0,-1.5L486.0,-1.5L487.0,-1.5L488.0,-1.5L489.0,-1.5L489.0,0.0L489.0,1.5L488.0,1.5L487.0,1.5L486.0,1.5L485.0,1.5L484.0,1.5L483.0,1.5L482.0,1.5L481.0,1.5L480.0,1.5L479.0,1.5L478.0,1.5L477.0,1.5L476.0,1.5L475.0,1.5L474.0,1.5L473.0,1.5L472.0,1.5L471.0,1.5L470.0,1.5L469.0,1.5L468.0,1.5L467.0,1.5L466.0,1.5L465.0,1.5L464.0,1.5L463.0,1.5L462.0,1.5L461.0,1.5L460.0,1.5L459.0,1.5L458.0,1.5L457.0,1.5L456.0,1.5L455.0,1.5L454.0,1.5L453.0,1.5L452.0,1.5L451.0,1.5L450.0,1.5L449.0,1.5L448.0,1.5L447.0,1.5L446.0,1.5L445.0,1.5L444.0,1.5L443.0,1.5L442.0,1.5L441.0,1.5L440.0,1.5L439.0,1.5L438.0,1.5L437.0,1.5L436.0,1.5L435.0,1.5L434.0,1.5L433.0,1.5L432.0,1.5L431.0,1.5L430.0,1.5L429.0,1.5L428.0,1.5L427.0,1.5L426.0,1.5L425.0,1.5L424.0,1.5L423.0,1.5L422.0,1.5L421.0,1.5L420.0,1.5L419.0,1.5L418.0,1.5L417.0,1.5L416.0,1.5L415.0,1.5L414.0,1.5L413.0,1.5L412.0,1.5L411.0,1.5L410.0,1.5L409.0,1.5L408.0,1.5L407.0,1.5L406.0,1.5L405.0,1.5L404.0,1.5L403.0,1.5L402.0,1.5L401.0,1.5L400.0,1.5L399.0,1.5L398.0,1.5L397.0,1.5L396.0,1.5L395.0,1.5L394.0,1.5L393.0,1.5L392.0,1.5L391.0,1.5L390.0,1.5L389.0,1.5L388.0,1.5L387.0,1.5L386.0,1.5L385.0,1.5L384.0,1.5L383.0,1.5L382.0,1.5L381.0,1.5L380.0,1.5L379.0,1.5L378.0,1.5L377.0,1.5L376.0,1.5L375.0,1.5L374.0,1.5L373.0,1.5L372.0,1.5L371.0,1.5L370.0,1.5L369.0,1.5L368.0,1.5L367.0,1.5L366.0,1.5L365.0,1.5L364.0,1.5L363.0,1.5L362.0,1.5L361.0,1.5L360.0,1.6L359.0,1.7L358.0,1.9L357.0,2.1L356.0,2.2L355.0,2.3L354.0,2.4L353.0,2.5L352.0,2.7L351.0,2.8L350.0,3.0L349.0,3.1L348.0,3.2L347.0,3.3L346.0,3.4L345.0,3.4L344.0,3.2L343.0,3.0L342.0,2.8L341.0,2.7L340.0,2.6L339.0,2.5L338.0,2.4L337.0,2.4L336.0,2.3L335.0,2.3L334.0,2.2L333.0,2.0L332.0,1.8L331.0,1.7L330.0,1.6L329.0,1.9L328.0,2.2L327.0,2.5L326.0,2.7L325.0,3.0L324.0,3.3L323.0,3.7L322.0,4.2L321.0,4.7L320.0,5.3L319.0,5.6L318.0,5.8L317.0,6.0L316.0,6.2L315.0,6.3L314.0,6.0L313.0,5.7L312.0,5.5L311.0,5.3L310.0,5.2L309.0,5.0L308.0,4.8L307.0,4.6L306.0,4.3L305.0,4.1L304.0,3.7L303.0,3.4L302.0,3.2L301.0,3.1L300.0,3.0L299.0,3.0L298.0,2.9L297.0,2.7L296.0,2.5L295.0,2.2L294.0,2.0L293.0,1.9L292.0,1.7L291.0,1.6L290.0,1.5L289.0,1.5L288.0,1.5L287.0,1.5L286.0,1.5L285.0,1.5L284.0,1.5L283.0,1.5L282.0,1.5L281.0,1.5L280.0,1.5L279.0,1.5L278.0,1.5L277.0,1.5L276.0,1.5L275.0,1.5L274.0,1.5L273.0,1.5L272.0,1.5L271.0,1.5L270.0,1.5L269.0,1.5L268.0,1.5L267.0,1.5L266.0,1.5L265.0,1.5L264.0,1.5L263.0,1.5L262.0,1.5L261.0,1.5L260.0,1.5L259.0,1.5L258.0,1.5L257.0,1.5L256.0,1.5L255.0,1.5L254.0,1.5L253.0,1.5L252.0,1.5L251.0,1.5L250.0,1.5L249.0,1.5L248.0,1.5L247.0,1.5L246.0,1.5L245.0,1.5L244.0,1.5L243.0,1.5L242.0,1.5L241.0,1.5L240.0,1.5L239.0,1.5L238.0,1.5L237.0,1.5L236.0,1.5L235.0,1.5L234.0,1.5L233.0,1.5L232.0,1.5L231.0,1.5L230.0,1.5L229.0,1.5L228.0,1.5L227.0,1.5L226.0,1.5L225.0,1.5L224.0,1.5L223.0,1.5L222.0,1.5L221.0,1.5L220.0,1.5L219.0,1.5L218.0,1.5L217.0,1.5L216.0,1.5L215.0,1.5L214.0,1.5L213.0,1.5L212.0,1.6L211.0,1.8L210.0,1.9L209.0,1.9L208.0,2.0L207.0,2.0L206.0,2.0L205.0,2.0L204.0,2.0L203.0,2.0L202.0,2.0L201.0,2.1L200.0,2.2L199.0,2.3L198.0,2.4L197.0,2.6L196.0,2.8L195.0,2.9L194.0,3.0L193.0,3.0L192.0,2.9L191.0,2.9L190.0,2.9L189.0,2.9L188.0,2.9L187.0,2.9L186.0,3.1L185.0,3.2L184.0,3.3L183.0,3.3L182.0,3.1L181.0,3.0L180.0,2.9L179.0,3.0L178.0,3.1L177.0,3.1L176.0,3.2L175.0,3.3L174.0,3.3L173.0,3.3L172.0,3.2L171.0,3.1L170.0,3.7L169.0,4.2L168.0,4.7L167.0,5.2L166.0,5.6L165.0,6.2L164.0,7.0L163.0,7.8L162.0,8.7L161.0,9.3L160.0,9.2L159.0,9.1L158.0,8.9L157.0,8.3L156.0,7.6L155.0,6.9L154.0,6.5L153.0,6.3L152.0,6.1L151.0,5.9L150.0,5.5L149.0,5.0L148.0,4.6L147.0,4.1L146.0,3.6L145.0,3.2L144.0,2.7L143.0,2.3L142.0,2.0L141.0,1.9L140.0,1.8L139.0,1.7L138.0,1.6L137.0,1.5L136.0,1.5L135.0,1.5L134.0,1.5L133.0,1.5L132.0,1.5L131.0,1.5L130.0,1.5L129.0,1.5L128.0,1.5L127.0,1.5L126.0,1.5L125.0,1.5L124.0,1.5L123.0,1.5L122.0,1.5L121.0,1.5L120.0,1.5L119.0,1.5L118.0,1.5L117.0,1.5L116.0,1.5L115.0,1.5L114.0,1.5L113.0,1.5L112.0,1.5L111.0,1.5L110.0,1.5L109.0,1.5L108.0,1.5L107.0,1.5L106.0,1.5L105.0,1.5L104.0,1.5L103.0,1.5L102.0,1.5L101.0,1.5L100.0,1.5L99.0,1.5L98.0,1.5L97.0,1.5L96.0,1.5L95.0,1.5L94.0,1.5L93.0,1.5L92.0,1.5L91.0,1.5L90.0,1.5L89.0,1.5L88.0,1.5L87.0,1.5L86.0,1.5L85.0,1.5L84.0,1.5L83.0,1.5L82.0,1.5L81.0,1.5L80.0,1.5L79.0,1.7L78.0,2.0L77.0,2.3L76.0,2.6L75.0,2.9L74.0,3.2L73.0,3.6L72.0,3.9L71.0,4.0L70.0,4.0L69.0,4.1L68.0,4.2L67.0,4.2L66.0,4.3L65.0,4.3L64.0,4.3L63.0,4.2L62.0,4.1L61.0,3.9L60.0,3.7L59.0,3.5L58.0,3.4L57.0,3.3L56.0,3.2L55.0,3.1L54.0,2.9L53.0,2.8L52.0,2.7L51.0,2.6L50.0,2.7L49.0,2.7L48.0,2.7L47.0,2.6L46.0,2.4L45.0,2.3L44.0,2.1L43.0,2.1L42.0,2.1L41.0,2.3L40.0,2.5L39.0,2.6L38.0,2.7L37.0,2.8L36.0,3.0L35.0,3.1L34.0,3.3L33.0,3.5L32.0,3.7L31.0,3.8L30.0,4.0L29.0,4.1L28.0,4.2L27.0,4.3L26.0,4.1L25.0,4.1L24.0,4.1L23.0,4.1L22.0,4.1L21.0,4.0L20.0,3.9L19.0,3.8L18.0,3.6L17.0,3.3L16.0,3.0L15.0,2.7L14.0,2.6L13.0,2.5L12.0,2.4L11.0,2.3L10.0,2.0L9.0,1.8L8.0,1.6L7.0,1.5L6.0,1.5L5.0,1.5L4.0,1.5L3.0,1.5L2.0,1.5L1.0,1.5L0.0,1.5Z" fill="#f0f0f0"/></svg>
<svg class="abs" style="left:974px;top:404.5px" width="26" height="26" viewBox="0 0 26 26"><circle cx="13" cy="12.8" r="12.8" fill="#444444"/><path d="M9.5,10.3 L12.9,7.1 L14.9,7.1 L14.9,18.2 L12.6,18.2 L12.6,10.1 L10.5,12 Z" fill="#f4f4f4"/></svg>
<div class="abs" style="left:352px;top:446.5px;width:654px;height:51px;background:#5b96d6"></div>
<div class="abs" style="left:352px;top:446.5px;width:45px;height:51px;background:#4a6f95"></div>
<svg class="abs" style="left:367px;top:466.0px" width="15" height="11" viewBox="0 0 15 11"><path d="M0,1 H15 M0,4 H15 M0,7 H15 M0,10 H15" stroke="#a5b7cb" stroke-width="1.2"/></svg>
<svg style="position:absolute;left:397px;top:446.5px" width="51" height="51" viewBox="0 0 100 100" preserveAspectRatio="none">
<defs><filter id="blm1" x="-5%" y="-5%" width="110%" height="110%"><feGaussianBlur stdDeviation="2.0"/></filter>
<linearGradient id="wgm1" x1="0" y1="0" x2="1" y2="0"><stop offset="0" stop-color="#e2e2e2"/><stop offset="0.6" stop-color="#ececec"/><stop offset="1" stop-color="#d8d8d8"/></linearGradient>
<clipPath id="cpm1"><rect width="100" height="100"/></clipPath></defs>
<g clip-path="url(#cpm1)"><g filter="url(#blm1)">
<rect x="-5" y="-5" width="110" height="110" fill="#807566"/>
<rect x="-5" y="-5" width="110" height="30" fill="#e0e0e0"/>
<rect x="60" y="-5" width="45" height="85" fill="url(#wgm1)"/>
<rect x="50" y="-5" width="10" height="22" fill="#e2cfc2"/>
<path d="M-5,6 L20,8 L36,22 L40,76 L-5,80Z" fill="#4a6c3c"/>
<ellipse cx="48" cy="36" rx="12" ry="9" fill="#3a6230"/>
<path d="M35,100 L44,52 L62,52 L80,100Z" fill="#857b72"/>
<rect x="-5" y="80" width="40" height="25" fill="#7a7060"/>
<path d="M74,74 L105,70 L105,105 L80,105Z" fill="#5e554c"/>
<use href="#gtex"/>
<rect x="-5" y="77" width="35" height="3" fill="#3e3830"/>
<ellipse cx="68" cy="55" rx="5" ry="12" fill="#5e8050"/>
<ellipse cx="88" cy="54" rx="8" ry="6" fill="#7e9a68"/>
<rect x="86.5" y="58" width="3" height="20" fill="#3a3a32"/>
<ellipse cx="76" cy="72" rx="6" ry="6" fill="#4a4a40"/>
</g></g></svg>
<svg class="abs" style="left:397px;top:446.5px" width="51" height="51" viewBox="0 0 51 51"><circle cx="25" cy="25.5" r="14.2" fill="none" stroke="#5b96d6" stroke-width="3.5"/><path d="M21.60,18.70 L30.92,25.50 L21.60,32.30Z" fill="#5b96d6"/></svg>
<div class="t" style="left:461px;top:448.5px;font-size:11.7px;color:#f2f2f2">nombre cientifico</div>
<svg class="abs" style="left:461px;top:479.8px;overflow:visible" width="489" height="1"><path d="M-1.0,0.0L0.0,-1.5L1.0,-1.5L2.0,-1.5L3.0,-1.5L4.0,-1.5L5.0,-1.5L6.0,-1.5L7.0,-1.6L8.0,-1.8L9.0,-2.1L10.0,-2.3L11.0,-2.4L12.0,-2.5L13.0,-2.5L14.0,-2.5L15.0,-2.6L16.0,-2.6L17.0,-2.6L18.0,-2.6L19.0,-2.6L20.0,-2.5L21.0,-2.5L22.0,-2.4L23.0,-2.4L24.0,-2.3L25.0,-2.2L26.0,-2.2L27.0,-2.1L28.0,-2.1L29.0,-2.1L30.0,-2.2L31.0,-2.3L32.0,-2.5L33.0,-2.6L34.0,-2.6L35.0,-2.5L36.0,-2.4L37.0,-2.4L38.0,-2.4L39.0,-2.5L40.0,-2.6L41.0,-2.6L42.0,-2.6L43.0,-2.5L44.0,-2.5L45.0,-3.2L46.0,-3.9L47.0,-4.6L48.0,-5.3L49.0,-5.6L50.0,-4.8L51.0,-4.0L52.0,-3.2L53.0,-2.5L54.0,-1.9L55.0,-2.0L56.0,-2.1L57.0,-2.2L58.0,-2.3L59.0,-2.5L60.0,-2.7L61.0,-2.9L62.0,-3.2L63.0,-3.4L64.0,-3.3L65.0,-3.1L66.0,-2.9L67.0,-2.8L68.0,-2.7L69.0,-2.7L70.0,-2.6L71.0,-2.5L72.0,-2.5L73.0,-2.4L74.0,-2.3L75.0,-2.3L76.0,-2.2L77.0,-2.1L78.0,-2.0L79.0,-1.9L80.0,-1.9L81.0,-1.8L82.0,-1.8L83.0,-1.7L84.0,-1.6L85.0,-1.6L86.0,-1.5L87.0,-1.5L88.0,-1.5L89.0,-1.5L90.0,-1.5L91.0,-1.5L92.0,-1.5L93.0,-1.5L94.0,-1.5L95.0,-1.5L96.0,-1.5L97.0,-1.5L98.0,-1.5L99.0,-1.5L100.0,-1.5L101.0,-1.5L102.0,-1.6L103.0,-1.7L104.0,-1.8L105.0,-1.9L106.0,-1.9L107.0,-2.0L108.0,-2.1L109.0,-2.1L110.0,-2.0L111.0,-2.1L112.0,-2.2L113.0,-2.3L114.0,-2.4L115.0,-2.5L116.0,-2.6L117.0,-2.7L118.0,-2.8L119.0,-2.8L120.0,-2.7L121.0,-2.7L122.0,-2.7L123.0,-2.7L124.0,-2.7L125.0,-2.7L126.0,-2.8L127.0,-2.9L128.0,-2.9L129.0,-3.0L130.0,-2.9L131.0,-2.9L132.0,-2.8L133.0,-2.8L134.0,-2.6L135.0,-2.5L136.0,-2.4L137.0,-2.4L138.0,-2.3L139.0,-2.4L140.0,-2.5L141.0,-2.6L142.0,-2.7L143.0,-2.8L144.0,-2.8L145.0,-2.8L146.0,-2.9L147.0,-2.9L148.0,-2.9L149.0,-2.9L150.0,-2.9L151.0,-2.9L152.0,-2.9L153.0,-2.9L154.0,-2.9L155.0,-2.9L156.0,-3.1L157.0,-3.2L158.0,-3.3L159.0,-3.2L160.0,-3.2L161.0,-3.1L162.0,-3.1L163.0,-3.1L164.0,-3.1L165.0,-3.1L166.0,-3.0L167.0,-2.9L168.0,-2.8L169.0,-2.6L170.0,-2.7L171.0,-2.8L172.0,-2.9L173.0,-2.9L174.0,-2.9L175.0,-2.9L176.0,-2.8L177.0,-2.8L178.0,-2.8L179.0,-2.8L180.0,-2.8L181.0,-2.7L182.0,-2.6L183.0,-2.5L184.0,-2.4L185.0,-2.5L186.0,-2.6L187.0,-2.7L188.0,-2.6L189.0,-2.5L190.0,-2.3L191.0,-2.2L192.0,-2.2L193.0,-2.3L194.0,-2.4L195.0,-2.5L196.0,-2.6L197.0,-2.7L198.0,-2.8L199.0,-2.8L200.0,-2.9L201.0,-3.0L202.0,-3.1L203.0,-3.0L204.0,-3.0L205.0,-2.9L206.0,-2.8L207.0,-2.8L208.0,-2.7L209.0,-2.7L210.0,-2.6L211.0,-2.6L212.0,-2.6L213.0,-2.6L214.0,-2.7L215.0,-2.7L216.0,-2.7L217.0,-2.8L218.0,-2.7L219.0,-2.6L220.0,-2.6L221.0,-2.5L222.0,-2.6L223.0,-2.7L224.0,-2.7L225.0,-2.8L226.0,-2.8L227.0,-2.9L228.0,-2.9L229.0,-2.9L230.0,-2.9L231.0,-2.9L232.0,-2.8L233.0,-2.7L234.0,-2.6L235.0,-2.5L236.0,-2.5L237.0,-2.6L238.0,-2.6L239.0,-2.7L240.0,-2.7L241.0,-2.8L242.0,-2.8L243.0,-2.9L244.0,-2.9L245.0,-2.8L246.0,-2.6L247.0,-2.5L248.0,-2.3L249.0,-2.2L250.0,-2.0L251.0,-1.8L252.0,-1.6L253.0,-1.5L254.0,-1.5L255.0,-1.5L256.0,-1.5L257.0,-1.5L258.0,-1.5L259.0,-1.5L260.0,-1.5L261.0,-1.5L262.0,-1.5L263.0,-1.5L264.0,-1.5L265.0,-1.5L266.0,-1.5L267.0,-1.5L268.0,-1.5L269.0,-1.5L270.0,-1.5L271.0,-1.5L272.0,-1.5L273.0,-1.5L274.0,-1.5L275.0,-1.5L276.0,-1.5L277.0,-1.5L278.0,-1.5L279.0,-1.5L280.0,-1.5L281.0,-1.5L282.0,-1.5L283.0,-1.5L284.0,-1.5L285.0,-1.5L286.0,-1.5L287.0,-1.5L288.0,-1.5L289.0,-1.5L290.0,-1.5L291.0,-1.5L292.0,-1.5L293.0,-1.5L294.0,-1.5L295.0,-1.5L296.0,-1.6L297.0,-1.8L298.0,-2.0L299.0,-2.1L300.0,-2.1L301.0,-2.2L302.0,-2.3L303.0,-2.6L304.0,-2.7L305.0,-2.7L306.0,-2.6L307.0,-2.5L308.0,-2.4L309.0,-2.3L310.0,-2.3L311.0,-2.4L312.0,-2.4L313.0,-2.4L314.0,-2.4L315.0,-2.4L316.0,-2.3L317.0,-2.3L318.0,-2.2L319.0,-2.1L320.0,-2.1L321.0,-2.1L322.0,-2.2L323.0,-2.3L324.0,-2.4L325.0,-2.4L326.0,-2.4L327.0,-2.4L328.0,-2.5L329.0,-2.6L330.0,-2.6L331.0,-2.7L332.0,-2.7L333.0,-2.7L334.0,-2.7L335.0,-2.7L336.0,-2.6L337.0,-2.5L338.0,-2.4L339.0,-2.4L340.0,-2.4L341.0,-2.3L342.0,-2.3L343.0,-2.2L344.0,-2.1L345.0,-2.0L346.0,-2.0L347.0,-1.9L348.0,-1.8L349.0,-1.7L350.0,-1.6L351.0,-1.5L352.0,-1.5L353.0,-1.5L354.0,-1.5L355.0,-1.5L356.0,-1.5L357.0,-1.5L358.0,-1.5L359.0,-1.5L360.0,-1.5L361.0,-1.5L362.0,-1.5L363.0,-1.5L364.0,-1.5L365.0,-1.5L366.0,-1.5L367.0,-1.5L368.0,-1.5L369.0,-1.5L370.0,-1.5L371.0,-1.5L372.0,-1.5L373.0,-1.5L374.0,-1.5L375.0,-1.5L376.0,-1.6L377.0,-1.8L378.0,-1.9L379.0,-2.1L380.0,-2.2L381.0,-2.2L382.0,-2.2L383.0,-2.0L384.0,-1.9L385.0,-1.9L386.0,-1.8L387.0,-1.7L388.0,-1.5L389.0,-1.5L390.0,-1.5L391.0,-1.5L392.0,-1.5L393.0,-1.5L394.0,-1.5L395.0,-1.5L396.0,-1.5L397.0,-1.5L398.0,-1.5L399.0,-1.5L400.0,-1.5L401.0,-1.5L402.0,-1.5L403.0,-1.5L404.0,-1.5L405.0,-1.5L406.0,-1.5L407.0,-1.5L408.0,-1.5L409.0,-1.5L410.0,-1.5L411.0,-1.5L412.0,-1.5L413.0,-1.5L414.0,-1.5L415.0,-1.5L416.0,-1.5L417.0,-1.5L418.0,-1.5L419.0,-1.5L420.0,-1.5L421.0,-1.5L422.0,-1.5L423.0,-1.5L424.0,-1.5L425.0,-1.5L426.0,-1.6L427.0,-2.2L428.0,-2.7L429.0,-3.2L430.0,-3.7L431.0,-3.7L432.0,-3.5L433.0,-3.5L434.0,-3.4L435.0,-3.5L436.0,-3.6L437.0,-3.6L438.0,-3.7L439.0,-3.8L440.0,-4.0L441.0,-4.1L442.0,-4.1L443.0,-4.0L444.0,-4.0L445.0,-3.9L446.0,-3.9L447.0,-3.9L448.0,-3.8L449.0,-3.8L450.0,-3.9L451.0,-3.8L452.0,-3.8L453.0,-3.7L454.0,-3.6L455.0,-3.6L456.0,-3.5L457.0,-3.4L458.0,-3.2L459.0,-3.1L460.0,-3.0L461.0,-3.0L462.0,-3.0L463.0,-3.0L464.0,-3.1L465.0,-3.1L466.0,-3.0L467.0,-2.9L468.0,-2.7L469.0,-2.5L470.0,-2.4L471.0,-2.2L472.0,-1.9L473.0,-1.7L474.0,-1.5L475.0,-1.5L476.0,-1.5L477.0,-1.5L478.0,-1.5L479.0,-1.5L480.0,-1.5L481.0,-1.5L482.0,-1.5L483.0,-1.5L484.0,-1.5L485.0,-1.5L486.0,-1.5L487.0,-1.5L488.0,-1.5L489.0,-1.5L489.0,0.0L489.0,1.5L488.0,1.5L487.0,1.5L486.0,1.5L485.0,1.5L484.0,1.5L483.0,1.5L482.0,1.5L481.0,1.5L480.0,1.5L479.0,1.5L478.0,1.5L477.0,1.5L476.0,1.5L475.0,1.5L474.0,1.5L473.0,1.6L472.0,1.8L471.0,2.1L470.0,2.3L469.0,2.4L468.0,2.6L467.0,2.8L466.0,2.9L465.0,3.0L464.0,3.0L463.0,3.0L462.0,3.0L461.0,3.1L460.0,3.1L459.0,3.2L458.0,3.3L457.0,3.4L456.0,3.5L455.0,3.7L454.0,3.9L453.0,4.0L452.0,4.2L451.0,4.2L450.0,4.3L449.0,4.2L448.0,4.1L447.0,4.0L446.0,3.9L445.0,3.8L444.0,3.7L443.0,3.6L442.0,3.5L441.0,3.4L440.0,3.5L439.0,3.5L438.0,3.6L437.0,3.6L436.0,3.5L435.0,3.5L434.0,3.4L433.0,3.5L432.0,3.7L431.0,3.8L430.0,3.8L429.0,3.3L428.0,2.8L427.0,2.3L426.0,1.7L425.0,1.5L424.0,1.5L423.0,1.5L422.0,1.5L421.0,1.5L420.0,1.5L419.0,1.5L418.0,1.5L417.0,1.5L416.0,1.5L415.0,1.5L414.0,1.5L413.0,1.5L412.0,1.5L411.0,1.5L410.0,1.5L409.0,1.5L408.0,1.5L407.0,1.5L406.0,1.5L405.0,1.5L404.0,1.5L403.0,1.5L402.0,1.5L401.0,1.5L400.0,1.5L399.0,1.5L398.0,1.5L397.0,1.5L396.0,1.5L395.0,1.5L394.0,1.5L393.0,1.5L392.0,1.5L391.0,1.5L390.0,1.5L389.0,1.5L388.0,1.6L387.0,1.6L386.0,1.6L385.0,1.8L384.0,2.0L383.0,2.2L382.0,2.4L381.0,2.5L380.0,2.3L379.0,2.2L378.0,2.1L377.0,2.0L376.0,1.8L375.0,1.7L374.0,1.5L373.0,1.5L372.0,1.5L371.0,1.5L370.0,1.5L369.0,1.5L368.0,1.5L367.0,1.5L366.0,1.5L365.0,1.5L364.0,1.5L363.0,1.5L362.0,1.5L361.0,1.5L360.0,1.5L359.0,1.5L358.0,1.5L357.0,1.5L356.0,1.5L355.0,1.5L354.0,1.5L353.0,1.5L352.0,1.5L351.0,1.5L350.0,1.5L349.0,1.5L348.0,1.6L347.0,1.7L346.0,1.8L345.0,1.9L344.0,1.9L343.0,1.9L342.0,2.0L341.0,2.0L340.0,2.0L339.0,2.0L338.0,2.1L337.0,2.1L336.0,2.2L335.0,2.3L334.0,2.4L333.0,2.4L332.0,2.5L331.0,2.6L330.0,2.5L329.0,2.5L328.0,2.4L327.0,2.3L326.0,2.3L325.0,2.3L324.0,2.3L323.0,2.3L322.0,2.3L321.0,2.3L320.0,2.3L319.0,2.2L318.0,2.2L317.0,2.1L316.0,2.1L315.0,2.1L314.0,2.2L313.0,2.2L312.0,2.3L311.0,2.3L310.0,2.3L309.0,2.4L308.0,2.4L307.0,2.5L306.0,2.5L305.0,2.6L304.0,2.8L303.0,3.0L302.0,2.8L301.0,2.6L300.0,2.3L299.0,2.1L298.0,1.8L297.0,1.7L296.0,1.5L295.0,1.5L294.0,1.5L293.0,1.5L292.0,1.5L291.0,1.5L290.0,1.5L289.0,1.5L288.0,1.5L287.0,1.5L286.0,1.5L285.0,1.5L284.0,1.5L283.0,1.5L282.0,1.5L281.0,1.5L280.0,1.5L279.0,1.5L278.0,1.5L277.0,1.5L276.0,1.5L275.0,1.5L274.0,1.5L273.0,1.5L272.0,1.5L271.0,1.5L270.0,1.5L269.0,1.5L268.0,1.5L267.0,1.5L266.0,1.5L265.0,1.5L264.0,1.5L263.0,1.5L262.0,1.5L261.0,1.5L260.0,1.5L259.0,1.5L258.0,1.5L257.0,1.5L256.0,1.5L255.0,1.5L254.0,1.5L253.0,1.5L252.0,1.6L251.0,1.9L250.0,2.3L249.0,2.4L248.0,2.6L247.0,2.6L246.0,2.7L245.0,2.9L244.0,3.0L243.0,3.0L242.0,3.0L241.0,3.0L240.0,2.9L239.0,2.9L238.0,2.9L237.0,2.9L236.0,3.0L235.0,3.0L234.0,3.0L233.0,3.0L232.0,3.1L231.0,3.1L230.0,3.1L229.0,3.0L228.0,3.0L227.0,3.1L226.0,3.1L225.0,3.2L224.0,3.2L223.0,3.3L222.0,3.4L221.0,3.5L220.0,3.5L219.0,3.4L218.0,3.4L217.0,3.3L216.0,3.1L215.0,3.0L214.0,2.8L213.0,2.7L212.0,2.7L211.0,2.7L210.0,2.8L209.0,2.8L208.0,2.7L207.0,2.7L206.0,2.6L205.0,2.7L204.0,2.7L203.0,2.8L202.0,2.8L201.0,2.9L200.0,2.9L199.0,2.9L198.0,2.9L197.0,2.9L196.0,2.9L195.0,2.9L194.0,2.9L193.0,2.8L192.0,2.6L191.0,2.5L190.0,2.6L189.0,2.6L188.0,2.7L187.0,2.7L186.0,2.6L185.0,2.6L184.0,2.5L183.0,2.6L182.0,2.6L181.0,2.7L180.0,2.8L179.0,2.8L178.0,2.9L177.0,2.9L176.0,2.9L175.0,2.9L174.0,2.8L173.0,2.7L172.0,2.6L171.0,2.6L170.0,2.7L169.0,2.7L168.0,2.6L167.0,2.5L166.0,2.4L165.0,2.4L164.0,2.6L163.0,2.7L162.0,2.8L161.0,2.9L160.0,2.9L159.0,2.9L158.0,3.0L157.0,3.0L156.0,3.1L155.0,3.0L154.0,3.0L153.0,2.9L152.0,2.8L151.0,2.7L150.0,2.6L149.0,2.5L148.0,2.4L147.0,2.3L146.0,2.4L145.0,2.5L144.0,2.6L143.0,2.7L142.0,2.7L141.0,2.6L140.0,2.6L139.0,2.6L138.0,2.6L137.0,2.6L136.0,2.6L135.0,2.5L134.0,2.5L133.0,2.5L132.0,2.5L131.0,2.6L130.0,2.7L129.0,2.8L128.0,2.8L127.0,2.8L126.0,2.8L125.0,2.7L124.0,2.6L123.0,2.4L122.0,2.3L121.0,2.2L120.0,2.3L119.0,2.4L118.0,2.6L117.0,2.6L116.0,2.7L115.0,2.7L114.0,2.8L113.0,2.8L112.0,2.8L111.0,2.8L110.0,2.7L109.0,2.7L108.0,2.7L107.0,2.6L106.0,2.4L105.0,2.2L104.0,2.0L103.0,1.8L102.0,1.6L101.0,1.5L100.0,1.5L99.0,1.5L98.0,1.5L97.0,1.5L96.0,1.5L95.0,1.5L94.0,1.5L93.0,1.5L92.0,1.5L91.0,1.5L90.0,1.5L89.0,1.5L88.0,1.5L87.0,1.5L86.0,1.5L85.0,1.5L84.0,1.5L83.0,1.5L82.0,1.5L81.0,1.6L80.0,1.6L79.0,1.5L78.0,1.6L77.0,1.6L76.0,1.7L75.0,1.7L74.0,1.7L73.0,1.8L72.0,2.0L71.0,2.2L70.0,2.4L69.0,2.6L68.0,2.8L67.0,3.0L66.0,3.2L65.0,3.4L64.0,3.5L63.0,3.5L62.0,3.4L61.0,3.3L60.0,3.3L59.0,3.2L58.0,3.2L57.0,3.1L56.0,3.0L55.0,2.8L54.0,2.6L53.0,3.1L52.0,3.9L51.0,4.5L50.0,5.1L49.0,5.7L48.0,5.1L47.0,4.3L46.0,3.6L45.0,3.0L44.0,2.4L43.0,2.4L42.0,2.3L41.0,2.3L40.0,2.2L39.0,2.2L38.0,2.2L37.0,2.2L36.0,2.1L35.0,2.1L34.0,2.0L33.0,1.9L32.0,1.9L31.0,2.0L30.0,2.0L29.0,2.0L28.0,2.0L27.0,2.1L26.0,2.1L25.0,2.2L24.0,2.3L23.0,2.4L22.0,2.5L21.0,2.4L20.0,2.3L19.0,2.3L18.0,2.2L17.0,2.3L16.0,2.3L15.0,2.3L14.0,2.3L13.0,2.2L12.0,2.2L11.0,2.1L10.0,2.1L9.0,1.9L8.0,1.7L7.0,1.5L6.0,1.5L5.0,1.5L4.0,1.5L3.0,1.5L2.0,1.5L1.0,1.5L0.0,1.5Z" fill="#f0f0f0"/></svg>
<svg class="abs" style="left:974px;top:459.0px" width="26" height="26" viewBox="0 0 26 26"><circle cx="13" cy="12.8" r="12.8" fill="#444444"/><path d="M9.5,10.3 L12.9,7.1 L14.9,7.1 L14.9,18.2 L12.6,18.2 L12.6,10.1 L10.5,12 Z" fill="#f4f4f4"/></svg>
<div class="abs" style="left:352px;top:501px;width:654px;height:51px;background:#5b96d6"></div>
<div class="abs" style="left:352px;top:501px;width:45px;height:51px;background:#4a6f95"></div>
<svg class="abs" style="left:367px;top:520.5px" width="15" height="11" viewBox="0 0 15 11"><path d="M0,1 H15 M0,4 H15 M0,7 H15 M0,10 H15" stroke="#a5b7cb" stroke-width="1.2"/></svg>
<svg style="position:absolute;left:397px;top:501px" width="51" height="51" viewBox="0 0 100 100" preserveAspectRatio="none">
<defs><filter id="blm2" x="-5%" y="-5%" width="110%" height="110%"><feGaussianBlur stdDeviation="2.0"/></filter>
<linearGradient id="wgm2" x1="0" y1="0" x2="1" y2="0"><stop offset="0" stop-color="#e2e2e2"/><stop offset="0.6" stop-color="#ececec"/><stop offset="1" stop-color="#d8d8d8"/></linearGradient>
<clipPath id="cpm2"><rect width="100" height="100"/></clipPath></defs>
<g clip-path="url(#cpm2)"><g filter="url(#blm2)">
<rect x="-5" y="-5" width="110" height="110" fill="#807566"/>
<rect x="-5" y="-5" width="110" height="30" fill="#e0e0e0"/>
<rect x="60" y="-5" width="45" height="85" fill="url(#wgm2)"/>
<rect x="50" y="-5" width="10" height="22" fill="#e2cfc2"/>
<path d="M-5,6 L20,8 L36,22 L40,76 L-5,80Z" fill="#4a6c3c"/>
<ellipse cx="48" cy="36" rx="12" ry="9" fill="#3a6230"/>
<path d="M35,100 L44,52 L62,52 L80,100Z" fill="#857b72"/>
<rect x="-5" y="80" width="40" height="25" fill="#7a7060"/>
<path d="M74,74 L105,70 L105,105 L80,105Z" fill="#5e554c"/>
<use href="#gtex"/>
<rect x="-5" y="77" width="35" height="3" fill="#3e3830"/>
<ellipse cx="68" cy="55" rx="5" ry="12" fill="#5e8050"/>
<ellipse cx="88" cy="54" rx="8" ry="6" fill="#7e9a68"/>
<rect x="86.5" y="58" width="3" height="20" fill="#3a3a32"/>
<ellipse cx="76" cy="72" rx="6" ry="6" fill="#4a4a40"/>
</g></g></svg>
<svg class="abs" style="left:397px;top:501px" width="51" height="51" viewBox="0 0 51 51"><circle cx="25" cy="25.5" r="14.2" fill="none" stroke="#5b96d6" stroke-width="3.5"/><path d="M21.60,18.70 L30.92,25.50 L21.60,32.30Z" fill="#5b96d6"/></svg>
<div class="t" style="left:461px;top:503px;font-size:11.7px;color:#f2f2f2">regando</div>
<svg class="abs" style="left:461px;top:534.3px;overflow:visible" width="489" height="1"><path d="M-1.0,0.0L0.0,-1.5L1.0,-1.5L2.0,-1.5L3.0,-1.5L4.0,-1.7L5.0,-2.0L6.0,-2.4L7.0,-2.7L8.0,-3.1L9.0,-3.6L10.0,-3.9L11.0,-4.1L12.0,-4.1L13.0,-4.0L14.0,-3.9L15.0,-3.9L16.0,-4.1L17.0,-4.3L18.0,-4.5L19.0,-4.5L20.0,-4.4L21.0,-4.3L22.0,-4.2L23.0,-4.2L24.0,-4.2L25.0,-4.2L26.0,-4.2L27.0,-4.2L28.0,-4.2L29.0,-4.2L30.0,-4.1L31.0,-4.0L32.0,-3.9L33.0,-3.8L34.0,-3.8L35.0,-3.9L36.0,-3.9L37.0,-4.0L38.0,-4.1L39.0,-4.2L40.0,-4.2L41.0,-4.4L42.0,-4.6L43.0,-4.8L44.0,-5.0L45.0,-5.1L46.0,-5.1L47.0,-5.1L48.0,-5.1L49.0,-4.9L50.0,-4.8L51.0,-4.6L52.0,-4.7L53.0,-4.9L54.0,-5.1L55.0,-5.3L56.0,-5.3L57.0,-5.3L58.0,-5.3L59.0,-5.3L60.0,-5.3L61.0,-5.4L62.0,-5.5L63.0,-5.6L64.0,-5.8L65.0,-5.8L66.0,-5.9L67.0,-6.0L68.0,-6.2L69.0,-6.3L70.0,-6.4L71.0,-6.3L72.0,-6.2L73.0,-6.1L74.0,-6.0L75.0,-6.0L76.0,-6.0L77.0,-6.0L78.0,-6.1L79.0,-6.2L80.0,-6.3L81.0,-6.4L82.0,-6.4L83.0,-6.4L84.0,-6.2L85.0,-6.0L86.0,-5.7L87.0,-5.4L88.0,-5.2L89.0,-4.9L90.0,-4.6L91.0,-4.3L92.0,-4.1L93.0,-3.9L94.0,-3.8L95.0,-3.6L96.0,-3.5L97.0,-3.4L98.0,-3.3L99.0,-3.4L100.0,-3.4L101.0,-3.4L102.0,-3.4L103.0,-3.3L104.0,-3.3L105.0,-3.2L106.0,-3.1L107.0,-3.1L108.0,-3.0L109.0,-2.9L110.0,-2.8L111.0,-2.8L112.0,-2.9L113.0,-3.0L114.0,-3.0L115.0,-3.2L116.0,-3.3L117.0,-3.4L118.0,-3.5L119.0,-3.5L120.0,-3.5L121.0,-3.5L122.0,-3.4L123.0,-3.3L124.0,-3.2L125.0,-3.0L126.0,-3.2L127.0,-3.3L128.0,-3.4L129.0,-3.6L130.0,-3.7L131.0,-3.9L132.0,-4.1L133.0,-4.2L134.0,-4.3L135.0,-4.4L136.0,-4.5L137.0,-4.7L138.0,-4.8L139.0,-4.7L140.0,-4.7L141.0,-4.6L142.0,-4.5L143.0,-4.4L144.0,-4.2L145.0,-4.0L146.0,-3.9L147.0,-3.7L148.0,-3.8L149.0,-4.0L150.0,-4.1L151.0,-4.2L152.0,-4.2L153.0,-4.2L154.0,-4.3L155.0,-4.3L156.0,-4.3L157.0,-4.2L158.0,-4.0L159.0,-3.9L160.0,-3.9L161.0,-3.8L162.0,-3.7L163.0,-3.6L164.0,-3.5L165.0,-3.3L166.0,-3.4L167.0,-3.6L168.0,-3.8L169.0,-4.0L170.0,-4.1L171.0,-4.1L172.0,-4.1L173.0,-4.1L174.0,-4.2L175.0,-4.2L176.0,-4.1L177.0,-4.0L178.0,-4.0L179.0,-3.9L180.0,-3.9L181.0,-3.7L182.0,-3.6L183.0,-3.4L184.0,-3.3L185.0,-3.4L186.0,-3.4L187.0,-3.5L188.0,-3.6L189.0,-3.6L190.0,-3.6L191.0,-3.7L192.0,-3.6L193.0,-3.6L194.0,-3.5L195.0,-3.5L196.0,-3.6L197.0,-3.7L198.0,-3.7L199.0,-3.9L200.0,-4.0L201.0,-4.2L202.0,-4.3L203.0,-4.3L204.0,-4.2L205.0,-4.2L206.0,-4.1L207.0,-4.1L208.0,-4.1L209.0,-4.1L210.0,-4.1L211.0,-3.8L212.0,-3.7L213.0,-3.6L214.0,-3.6L215.0,-3.7L216.0,-3.7L217.0,-3.8L218.0,-3.9L219.0,-4.0L220.0,-4.1L221.0,-4.2L222.0,-4.4L223.0,-4.6L224.0,-4.8L225.0,-4.9L226.0,-5.0L227.0,-5.1L228.0,-5.2L229.0,-5.2L230.0,-5.3L231.0,-5.1L232.0,-5.0L233.0,-4.9L234.0,-4.8L235.0,-4.8L236.0,-4.6L237.0,-4.3L238.0,-4.1L239.0,-3.8L240.0,-3.6L241.0,-3.5L242.0,-3.3L243.0,-3.2L244.0,-3.1L245.0,-3.1L246.0,-2.9L247.0,-2.6L248.0,-2.4L249.0,-2.2L250.0,-2.1L251.0,-1.9L252.0,-1.7L253.0,-1.5L254.0,-1.5L255.0,-1.5L256.0,-1.5L257.0,-1.5L258.0,-1.5L259.0,-1.5L260.0,-1.5L261.0,-1.5L262.0,-1.5L263.0,-1.5L264.0,-1.5L265.0,-1.5L266.0,-1.5L267.0,-1.5L268.0,-1.5L269.0,-1.5L270.0,-1.5L271.0,-1.5L272.0,-1.5L273.0,-1.5L274.0,-1.5L275.0,-1.5L276.0,-1.5L277.0,-1.5L278.0,-1.5L279.0,-1.5L280.0,-1.5L281.0,-1.5L282.0,-1.5L283.0,-1.5L284.0,-1.5L285.0,-1.5L286.0,-1.5L287.0,-1.5L288.0,-1.5L289.0,-1.5L290.0,-1.5L291.0,-1.5L292.0,-1.5L293.0,-1.5L294.0,-1.5L295.0,-1.5L296.0,-1.5L297.0,-1.5L298.0,-1.5L299.0,-1.5L300.0,-1.5L301.0,-1.5L302.0,-1.5L303.0,-1.5L304.0,-1.5L305.0,-1.5L306.0,-1.5L307.0,-1.5L308.0,-1.5L309.0,-1.5L310.0,-1.5L311.0,-1.5L312.0,-1.5L313.0,-1.5L314.0,-1.5L315.0,-1.5L316.0,-1.5L317.0,-1.5L318.0,-1.5L319.0,-1.5L320.0,-1.5L321.0,-1.5L322.0,-1.5L323.0,-1.5L324.0,-1.5L325.0,-1.5L326.0,-1.6L327.0,-1.7L328.0,-1.9L329.0,-2.0L330.0,-2.1L331.0,-2.2L332.0,-2.2L333.0,-2.2L334.0,-2.3L335.0,-2.2L336.0,-2.2L337.0,-2.1L338.0,-2.0L339.0,-2.0L340.0,-2.0L341.0,-2.1L342.0,-2.2L343.0,-2.3L344.0,-2.3L345.0,-2.4L346.0,-2.4L347.0,-2.4L348.0,-2.4L349.0,-2.3L350.0,-2.4L351.0,-2.5L352.0,-2.6L353.0,-2.8L354.0,-2.8L355.0,-2.9L356.0,-3.0L357.0,-3.1L358.0,-3.2L359.0,-3.3L360.0,-3.3L361.0,-3.3L362.0,-3.2L363.0,-3.1L364.0,-3.0L365.0,-3.0L366.0,-3.0L367.0,-3.0L368.0,-3.0L369.0,-2.9L370.0,-2.9L371.0,-2.9L372.0,-2.9L373.0,-3.0L374.0,-3.1L375.0,-3.2L376.0,-3.1L377.0,-3.1L378.0,-3.0L379.0,-3.0L380.0,-3.1L381.0,-3.2L382.0,-3.2L383.0,-3.3L384.0,-3.3L385.0,-3.3L386.0,-3.3L387.0,-3.3L388.0,-3.3L389.0,-3.3L390.0,-3.3L391.0,-3.3L392.0,-3.2L393.0,-3.2L394.0,-3.2L395.0,-3.2L396.0,-3.2L397.0,-3.3L398.0,-3.3L399.0,-3.4L400.0,-3.4L401.0,-3.5L402.0,-3.4L403.0,-3.4L404.0,-3.3L405.0,-3.3L406.0,-3.2L407.0,-3.1L408.0,-3.0L409.0,-3.1L410.0,-3.3L411.0,-3.4L412.0,-3.4L413.0,-3.3L414.0,-3.2L415.0,-3.2L416.0,-3.3L417.0,-3.5L418.0,-3.7L419.0,-3.9L420.0,-3.9L421.0,-3.9L422.0,-3.9L423.0,-3.9L424.0,-3.8L425.0,-3.8L426.0,-3.8L427.0,-3.8L428.0,-3.8L429.0,-3.9L430.0,-4.0L431.0,-4.0L432.0,-4.0L433.0,-4.0L434.0,-3.9L435.0,-3.8L436.0,-3.6L437.0,-3.5L438.0,-3.4L439.0,-3.3L440.0,-3.3L441.0,-3.2L442.0,-3.2L443.0,-3.2L444.0,-3.3L445.0,-3.3L446.0,-3.3L447.0,-3.3L448.0,-3.2L449.0,-3.2L450.0,-3.1L451.0,-3.0L452.0,-2.9L453.0,-2.9L454.0,-2.9L455.0,-2.9L456.0,-2.8L457.0,-2.7L458.0,-2.6L459.0,-2.5L460.0,-2.5L461.0,-2.5L462.0,-2.5L463.0,-2.5L464.0,-2.5L465.0,-2.4L466.0,-2.3L467.0,-2.3L468.0,-2.3L469.0,-2.3L470.0,-2.3L471.0,-2.3L472.0,-2.4L473.0,-2.4L474.0,-2.4L475.0,-2.4L476.0,-2.4L477.0,-2.4L478.0,-2.4L479.0,-2.4L480.0,-2.4L481.0,-2.4L482.0,-2.4L483.0,-2.4L484.0,-2.4L485.0,-2.4L486.0,-2.4L487.0,-2.3L488.0,-2.2L489.0,-2.0L489.0,0.0L489.0,2.1L488.0,2.2L487.0,2.3L486.0,2.4L485.0,2.4L484.0,2.4L483.0,2.3L482.0,2.2L481.0,2.2L480.0,2.2L479.0,2.2L478.0,2.2L477.0,2.3L476.0,2.3L475.0,2.3L474.0,2.3L473.0,2.3L472.0,2.3L471.0,2.3L470.0,2.3L469.0,2.4L468.0,2.4L467.0,2.4L466.0,2.4L465.0,2.4L464.0,2.3L463.0,2.3L462.0,2.3L461.0,2.3L460.0,2.4L459.0,2.4L458.0,2.5L457.0,2.5L456.0,2.6L455.0,2.6L454.0,2.7L453.0,2.7L452.0,2.8L451.0,2.9L450.0,3.1L449.0,3.2L448.0,3.2L447.0,3.2L446.0,3.1L445.0,3.1L444.0,3.1L443.0,3.1L442.0,3.1L441.0,3.2L440.0,3.2L439.0,3.2L438.0,3.3L437.0,3.3L436.0,3.4L435.0,3.5L434.0,3.5L433.0,3.6L432.0,3.6L431.0,3.6L430.0,3.6L429.0,3.6L428.0,3.5L427.0,3.5L426.0,3.4L425.0,3.3L424.0,3.2L423.0,3.1L422.0,3.2L421.0,3.3L420.0,3.4L419.0,3.4L418.0,3.4L417.0,3.5L416.0,3.5L415.0,3.4L414.0,3.2L413.0,3.1L412.0,3.0L411.0,3.1L410.0,3.2L409.0,3.3L408.0,3.4L407.0,3.4L406.0,3.4L405.0,3.4L404.0,3.5L403.0,3.6L402.0,3.8L401.0,3.9L400.0,4.0L399.0,4.1L398.0,4.2L397.0,4.3L396.0,4.2L395.0,4.2L394.0,4.1L393.0,4.0L392.0,3.9L391.0,3.8L390.0,3.7L389.0,3.7L388.0,3.8L387.0,3.8L386.0,3.9L385.0,3.8L384.0,3.7L383.0,3.6L382.0,3.5L381.0,3.4L380.0,3.3L379.0,3.2L378.0,3.2L377.0,3.1L376.0,3.1L375.0,3.0L374.0,3.0L373.0,2.9L372.0,2.9L371.0,2.8L370.0,2.8L369.0,2.7L368.0,2.6L367.0,2.5L366.0,2.5L365.0,2.4L364.0,2.3L363.0,2.3L362.0,2.3L361.0,2.4L360.0,2.4L359.0,2.5L358.0,2.5L357.0,2.6L356.0,2.6L355.0,2.6L354.0,2.6L353.0,2.6L352.0,2.6L351.0,2.5L350.0,2.4L349.0,2.4L348.0,2.4L347.0,2.4L346.0,2.3L345.0,2.4L344.0,2.4L343.0,2.5L342.0,2.5L341.0,2.5L340.0,2.5L339.0,2.4L338.0,2.4L337.0,2.4L336.0,2.4L335.0,2.3L334.0,2.3L333.0,2.2L332.0,2.2L331.0,2.1L330.0,2.0L329.0,1.9L328.0,1.8L327.0,1.7L326.0,1.6L325.0,1.5L324.0,1.5L323.0,1.5L322.0,1.5L321.0,1.5L320.0,1.5L319.0,1.5L318.0,1.5L317.0,1.5L316.0,1.5L315.0,1.5L314.0,1.5L313.0,1.5L312.0,1.5L311.0,1.5L310.0,1.5L309.0,1.5L308.0,1.5L307.0,1.5L306.0,1.5L305.0,1.5L304.0,1.5L303.0,1.5L302.0,1.6L301.0,1.6L300.0,1.5L299.0,1.5L298.0,1.5L297.0,1.5L296.0,1.5L295.0,1.5L294.0,1.5L293.0,1.5L292.0,1.5L291.0,1.5L290.0,1.5L289.0,1.5L288.0,1.5L287.0,1.5L286.0,1.5L285.0,1.5L284.0,1.5L283.0,1.5L282.0,1.5L281.0,1.5L280.0,1.5L279.0,1.5L278.0,1.5L277.0,1.5L276.0,1.5L275.0,1.5L274.0,1.5L273.0,1.5L272.0,1.5L271.0,1.5L270.0,1.5L269.0,1.5L268.0,1.5L267.0,1.5L266.0,1.5L265.0,1.5L264.0,1.5L263.0,1.5L262.0,1.5L261.0,1.5L260.0,1.5L259.0,1.5L258.0,1.5L257.0,1.5L256.0,1.5L255.0,1.5L254.0,1.5L253.0,1.7L252.0,2.0L251.0,2.2L250.0,2.4L249.0,2.7L248.0,3.0L247.0,3.1L246.0,3.4L245.0,3.7L244.0,4.0L243.0,4.2L242.0,4.2L241.0,4.2L240.0,4.1L239.0,4.1L238.0,4.3L237.0,4.5L236.0,4.6L235.0,4.8L234.0,5.0L233.0,5.1L232.0,5.2L231.0,5.3L230.0,5.4L229.0,5.3L228.0,5.3L227.0,5.3L226.0,5.3L225.0,5.3L224.0,5.2L223.0,5.0L222.0,4.9L221.0,4.7L220.0,4.6L219.0,4.6L218.0,4.5L217.0,4.5L216.0,4.3L215.0,4.2L214.0,4.0L213.0,3.9L212.0,3.8L211.0,3.8L210.0,3.7L209.0,3.7L208.0,3.6L207.0,3.6L206.0,3.5L205.0,3.5L204.0,3.4L203.0,3.3L202.0,3.3L201.0,3.3L200.0,3.2L199.0,3.2L198.0,3.2L197.0,3.2L196.0,3.2L195.0,3.2L194.0,3.4L193.0,3.6L192.0,3.7L191.0,3.7L190.0,3.7L189.0,3.6L188.0,3.6L187.0,3.5L186.0,3.4L185.0,3.4L184.0,3.3L183.0,3.3L182.0,3.4L181.0,3.4L180.0,3.5L179.0,3.6L178.0,3.7L177.0,3.8L176.0,3.9L175.0,4.0L174.0,4.1L173.0,4.1L172.0,4.2L171.0,4.2L170.0,4.2L169.0,4.2L168.0,4.2L167.0,4.1L166.0,4.0L165.0,4.0L164.0,4.0L163.0,4.0L162.0,4.1L161.0,4.0L160.0,3.9L159.0,3.9L158.0,3.8L157.0,3.9L156.0,4.0L155.0,4.1L154.0,4.0L153.0,3.9L152.0,3.7L151.0,3.5L150.0,3.5L149.0,3.6L148.0,3.7L147.0,3.8L146.0,3.8L145.0,3.8L144.0,3.9L143.0,3.9L142.0,4.0L141.0,4.0L140.0,4.1L139.0,4.1L138.0,4.2L137.0,4.1L136.0,4.0L135.0,3.9L134.0,3.9L133.0,3.8L132.0,3.8L131.0,3.6L130.0,3.5L129.0,3.4L128.0,3.4L127.0,3.4L126.0,3.5L125.0,3.6L124.0,3.6L123.0,3.6L122.0,3.6L121.0,3.6L120.0,3.7L119.0,3.7L118.0,3.7L117.0,3.6L116.0,3.5L115.0,3.4L114.0,3.2L113.0,3.1L112.0,3.0L111.0,2.9L110.0,2.9L109.0,2.9L108.0,3.0L107.0,3.0L106.0,3.1L105.0,3.1L104.0,3.2L103.0,3.3L102.0,3.3L101.0,3.4L100.0,3.3L99.0,3.3L98.0,3.1L97.0,3.1L96.0,3.2L95.0,3.3L94.0,3.5L93.0,3.7L92.0,4.0L91.0,4.2L90.0,4.5L89.0,4.7L88.0,5.0L87.0,5.0L86.0,5.0L85.0,5.1L84.0,5.2L83.0,5.3L82.0,5.2L81.0,5.1L80.0,5.1L79.0,5.0L78.0,4.9L77.0,4.9L76.0,4.9L75.0,4.9L74.0,4.8L73.0,4.9L72.0,5.1L71.0,5.3L70.0,5.4L69.0,5.4L68.0,5.2L67.0,5.1L66.0,5.0L65.0,5.1L64.0,5.1L63.0,5.1L62.0,5.0L61.0,4.9L60.0,4.9L59.0,4.8L58.0,4.8L57.0,4.9L56.0,4.9L55.0,5.0L54.0,5.0L53.0,4.9L52.0,4.9L51.0,5.0L50.0,5.3L49.0,5.6L48.0,5.9L47.0,5.9L46.0,5.8L45.0,5.4L44.0,5.1L43.0,5.1L42.0,5.1L41.0,5.2L40.0,5.1L39.0,4.9L38.0,4.8L37.0,4.6L36.0,4.4L35.0,4.3L34.0,4.1L33.0,4.0L32.0,4.1L31.0,4.1L30.0,4.2L29.0,4.3L28.0,4.5L27.0,4.6L26.0,4.7L25.0,4.6L24.0,4.5L23.0,4.4L22.0,4.4L21.0,4.5L20.0,4.6L19.0,4.6L18.0,4.7L17.0,4.6L16.0,4.5L15.0,4.4L14.0,4.3L13.0,4.2L12.0,4.1L11.0,4.0L10.0,3.7L9.0,3.3L8.0,2.8L7.0,2.5L6.0,2.2L5.0,2.0L4.0,1.7L3.0,1.5L2.0,1.5L1.0,1.5L0.0,1.5Z" fill="#f0f0f0"/></svg>
<svg class="abs" style="left:974px;top:513.5px" width="26" height="26" viewBox="0 0 26 26"><circle cx="13" cy="12.8" r="12.8" fill="#444444"/><path d="M9.5,10.3 L12.9,7.1 L14.9,7.1 L14.9,18.2 L12.6,18.2 L12.6,10.1 L10.5,12 Z" fill="#f4f4f4"/></svg>
<div class="abs" style="left:0;top:78px;width:339px;height:936px;background:#333;overflow:hidden">
<svg class="abs" style="left:0;top:0" width="339" height="58.5" viewBox="0 0 339 58.5">
<defs><linearGradient id="lg" x1="0" y1="0" x2="1" y2="0"><stop offset="0" stop-color="#080808"/><stop offset="0.3" stop-color="#262626"/><stop offset="1" stop-color="#5a5a5a"/></linearGradient>
<filter id="mb" x="0" y="0" width="100%" height="100%"><feGaussianBlur stdDeviation="0.7"/></filter></defs>
<rect width="339" height="58.5" fill="#8c7872"/>
<g filter="url(#mb)"><rect x="257.8" y="-1.5" width="4.3" height="3.7" fill="#d8b0a8"/><rect x="131.8" y="22.7" width="2.7" height="3.7" fill="#8a7a72"/><rect x="240.0" y="40.7" width="7.1" height="4.8" fill="#8a7670"/><rect x="296.6" y="-2.6" width="7.7" height="6.3" fill="#a87c7a"/><rect x="161.1" y="43.6" width="3.2" height="4.6" fill="#a89890"/><rect x="249.6" y="46.2" width="7.2" height="5.4" fill="#4a4244"/><rect x="130.0" y="14.9" width="6.6" height="7.4" fill="#574c4c"/><rect x="272.6" y="-0.2" width="4.0" height="4.1" fill="#e0c0b8"/><rect x="309.6" y="20.2" width="5.4" height="7.1" fill="#5a4e50"/><rect x="159.8" y="13.3" width="8.6" height="6.1" fill="#9a8a80"/><rect x="233.8" y="11.9" width="5.5" height="4.0" fill="#c4b4a8"/><rect x="162.1" y="16.8" width="7.5" height="2.8" fill="#a89890"/><rect x="203.5" y="1.0" width="8.4" height="5.6" fill="#574c4c"/><rect x="261.4" y="21.1" width="8.4" height="5.0" fill="#e0c0b8"/><rect x="281.9" y="29.9" width="7.4" height="4.9" fill="#5a4e50"/><rect x="162.0" y="57.8" width="5.8" height="3.0" fill="#6e625e"/><rect x="146.8" y="6.8" width="6.9" height="5.8" fill="#b0a49c"/><rect x="232.6" y="56.2" width="8.1" height="2.6" fill="#c4b4a8"/><rect x="283.2" y="43.9" width="4.7" height="4.1" fill="#c08a88"/><rect x="329.5" y="50.4" width="4.2" height="5.3" fill="#d09c98"/><rect x="310.5" y="15.2" width="6.7" height="5.8" fill="#a87c7a"/><rect x="235.0" y="44.5" width="5.9" height="2.5" fill="#c08a88"/><rect x="137.5" y="19.1" width="8.9" height="6.9" fill="#574c4c"/><rect x="312.2" y="54.8" width="3.1" height="5.2" fill="#d8b0a8"/><rect x="286.6" y="4.8" width="5.6" height="5.5" fill="#6a5a5a"/><rect x="208.5" y="9.9" width="6.0" height="6.5" fill="#7a6c66"/><rect x="203.0" y="38.0" width="4.9" height="7.4" fill="#574c4c"/><rect x="163.2" y="17.6" width="6.3" height="3.8" fill="#6e625e"/><rect x="273.4" y="0.6" width="2.9" height="2.7" fill="#d8b0a8"/><rect x="166.3" y="37.8" width="3.9" height="3.2" fill="#b0a49c"/><rect x="167.4" y="25.9" width="5.1" height="3.0" fill="#a89890"/><rect x="208.6" y="25.5" width="7.2" height="6.2" fill="#6e625e"/><rect x="125.8" y="41.4" width="7.7" height="3.1" fill="#c4b4a8"/><rect x="214.3" y="22.7" width="4.3" height="3.9" fill="#b0a49c"/><rect x="296.2" y="49.2" width="3.1" height="6.1" fill="#c08a88"/><rect x="332.9" y="53.5" width="8.0" height="3.4" fill="#e0c0b8"/><rect x="309.1" y="52.0" width="3.6" height="2.5" fill="#b07070"/><rect x="177.0" y="39.5" width="7.2" height="6.8" fill="#b0a49c"/><rect x="147.3" y="15.1" width="8.8" height="5.7" fill="#a89890"/><rect x="125.0" y="32.6" width="5.8" height="7.2" fill="#c4b4a8"/><rect x="130.3" y="8.3" width="6.4" height="6.2" fill="#6e625e"/><rect x="326.7" y="31.8" width="6.3" height="2.7" fill="#6a5a5a"/><rect x="240.9" y="16.3" width="4.2" height="6.2" fill="#8a7670"/><rect x="202.2" y="38.0" width="4.4" height="4.2" fill="#6e625e"/><rect x="114.1" y="34.9" width="6.2" height="3.0" fill="#c4b4a8"/><rect x="172.5" y="53.9" width="8.2" height="7.3" fill="#9a8a80"/><rect x="211.9" y="30.1" width="4.5" height="7.9" fill="#c4b4a8"/><rect x="113.8" y="46.8" width="4.4" height="6.1" fill="#9a8a80"/><rect x="172.3" y="51.3" width="7.3" height="3.4" fill="#574c4c"/><rect x="275.6" y="9.4" width="6.6" height="4.0" fill="#c08a88"/><rect x="133.0" y="22.8" width="4.3" height="2.5" fill="#7a6c66"/><rect x="148.8" y="24.0" width="7.1" height="5.6" fill="#9a8a80"/><rect x="236.4" y="47.9" width="6.3" height="3.3" fill="#8a7670"/><rect x="195.1" y="53.9" width="8.8" height="2.7" fill="#574c4c"/><rect x="264.1" y="18.6" width="6.1" height="7.3" fill="#a87c7a"/><rect x="323.1" y="11.4" width="3.6" height="6.9" fill="#c8a49c"/><rect x="117.7" y="41.9" width="4.7" height="7.6" fill="#574c4c"/><rect x="172.8" y="45.0" width="3.2" height="7.3" fill="#574c4c"/><rect x="157.5" y="53.0" width="4.8" height="7.0" fill="#574c4c"/><rect x="117.4" y="8.8" width="4.6" height="7.3" fill="#7a6c66"/><rect x="192.1" y="28.1" width="6.9" height="7.1" fill="#8a7a72"/><rect x="138.3" y="56.2" width="3.7" height="7.8" fill="#6e625e"/><rect x="248.0" y="18.1" width="7.6" height="4.9" fill="#6e625e"/><rect x="199.8" y="32.2" width="4.2" height="6.4" fill="#c4b4a8"/><rect x="268.6" y="54.4" width="7.3" height="3.6" fill="#5a4e50"/><rect x="254.1" y="37.5" width="3.3" height="7.5" fill="#c8a49c"/><rect x="186.4" y="39.5" width="6.1" height="3.6" fill="#4a4244"/><rect x="266.4" y="52.1" width="6.5" height="4.2" fill="#c08a88"/><rect x="181.3" y="9.8" width="7.6" height="5.8" fill="#b0a49c"/><rect x="212.8" y="10.0" width="5.6" height="7.5" fill="#9a8a80"/><rect x="262.2" y="14.3" width="6.8" height="5.9" fill="#e0c0b8"/><rect x="265.4" y="10.7" width="3.8" height="2.6" fill="#b07070"/><rect x="251.4" y="43.9" width="5.5" height="7.4" fill="#c8a49c"/><rect x="224.7" y="11.9" width="6.8" height="2.5" fill="#6e625e"/><rect x="289.5" y="10.3" width="7.7" height="6.3" fill="#d8b0a8"/><rect x="168.8" y="48.7" width="5.5" height="6.9" fill="#c4b4a8"/><rect x="247.8" y="55.0" width="8.3" height="5.9" fill="#d8b0a8"/><rect x="209.3" y="52.3" width="5.4" height="3.4" fill="#b0a49c"/><rect x="171.1" y="12.1" width="6.6" height="6.7" fill="#574c4c"/><rect x="174.6" y="1.7" width="4.4" height="4.0" fill="#c4b4a8"/><rect x="130.4" y="6.2" width="5.0" height="3.3" fill="#4a4244"/><rect x="204.9" y="30.1" width="5.2" height="3.6" fill="#8a7a72"/><rect x="307.3" y="43.7" width="5.0" height="2.5" fill="#c8a49c"/><rect x="306.6" y="55.2" width="5.2" height="6.6" fill="#6a5a5a"/><rect x="316.7" y="26.8" width="4.3" height="5.2" fill="#c8a49c"/><rect x="277.1" y="48.3" width="8.5" height="7.9" fill="#c8a49c"/><rect x="247.0" y="37.4" width="3.0" height="4.9" fill="#9a8a80"/><rect x="123.5" y="20.1" width="3.9" height="4.3" fill="#4a4244"/><rect x="175.4" y="55.0" width="5.2" height="7.1" fill="#c4b4a8"/><rect x="123.9" y="55.1" width="4.0" height="2.9" fill="#8a7a72"/><rect x="284.0" y="54.9" width="3.8" height="2.6" fill="#a87c7a"/><rect x="220.0" y="4.0" width="8.7" height="5.1" fill="#a89890"/><rect x="150.3" y="34.0" width="7.4" height="3.1" fill="#7a6c66"/><rect x="136.6" y="-1.4" width="4.5" height="6.2" fill="#4a4244"/><rect x="326.7" y="9.1" width="6.3" height="7.1" fill="#8a7670"/><rect x="305.9" y="33.6" width="3.3" height="7.9" fill="#5a4e50"/><rect x="233.5" y="37.4" width="2.9" height="6.1" fill="#c8a49c"/><rect x="299.5" y="3.4" width="8.7" height="6.0" fill="#a87c7a"/><rect x="211.3" y="41.8" width="8.8" height="4.0" fill="#c4b4a8"/><rect x="288.6" y="25.4" width="7.9" height="5.8" fill="#e0c0b8"/><rect x="301.4" y="2.3" width="8.2" height="3.8" fill="#6a5a5a"/><rect x="264.3" y="17.5" width="5.7" height="4.3" fill="#5a4e50"/><rect x="293.9" y="17.8" width="8.2" height="6.4" fill="#c08a88"/><rect x="229.8" y="8.7" width="4.1" height="4.7" fill="#574c4c"/><rect x="269.5" y="36.4" width="5.7" height="6.9" fill="#e0c0b8"/><rect x="204.2" y="11.8" width="6.8" height="4.5" fill="#a89890"/><rect x="209.0" y="42.5" width="4.7" height="6.4" fill="#7a6c66"/><rect x="164.6" y="41.0" width="4.6" height="6.6" fill="#9a8a80"/><rect x="155.7" y="42.1" width="4.3" height="5.7" fill="#7a6c66"/><rect x="335.6" y="47.8" width="4.4" height="4.5" fill="#d8b0a8"/><rect x="140.9" y="-0.2" width="2.9" height="4.1" fill="#b0a49c"/><rect x="135.4" y="-2.3" width="4.3" height="5.1" fill="#8a7a72"/><rect x="169.6" y="49.6" width="3.2" height="2.9" fill="#8a7a72"/><rect x="146.6" y="46.5" width="8.7" height="3.0" fill="#c4b4a8"/><rect x="286.3" y="34.0" width="7.6" height="3.7" fill="#b07070"/><rect x="319.1" y="15.1" width="6.3" height="4.9" fill="#c08a88"/><rect x="251.0" y="42.1" width="8.7" height="3.6" fill="#d09c98"/><rect x="147.8" y="7.6" width="3.0" height="2.5" fill="#b0a49c"/><rect x="178.4" y="11.1" width="7.1" height="6.4" fill="#574c4c"/><rect x="322.7" y="45.1" width="6.6" height="6.1" fill="#c8a49c"/><rect x="138.2" y="10.7" width="3.5" height="4.0" fill="#8a7a72"/><rect x="149.8" y="15.8" width="7.4" height="5.6" fill="#6e625e"/><rect x="218.9" y="15.5" width="5.1" height="4.0" fill="#b0a49c"/><rect x="130.3" y="-0.6" width="5.3" height="4.3" fill="#6e625e"/><rect x="164.2" y="38.1" width="8.1" height="5.7" fill="#7a6c66"/><rect x="243.4" y="43.5" width="3.6" height="5.4" fill="#8a7670"/><rect x="153.4" y="32.7" width="6.6" height="5.2" fill="#a89890"/><rect x="205.1" y="16.6" width="3.2" height="3.4" fill="#b0a49c"/><rect x="177.7" y="54.7" width="7.8" height="5.5" fill="#a89890"/><rect x="169.5" y="4.1" width="7.5" height="7.3" fill="#8a7a72"/><rect x="261.9" y="30.1" width="5.2" height="3.5" fill="#b07070"/><rect x="254.6" y="43.4" width="3.8" height="5.5" fill="#b0a49c"/><rect x="312.8" y="26.6" width="2.7" height="6.0" fill="#a87c7a"/><rect x="182.9" y="-2.2" width="5.2" height="3.7" fill="#6e625e"/><rect x="217.2" y="4.2" width="7.9" height="5.2" fill="#c4b4a8"/><rect x="272.8" y="22.3" width="5.6" height="5.1" fill="#a87c7a"/><rect x="199.5" y="53.2" width="5.8" height="7.3" fill="#7a6c66"/><rect x="288.2" y="49.1" width="4.7" height="6.8" fill="#c08a88"/><rect x="176.5" y="15.2" width="6.3" height="8.0" fill="#9a8a80"/><rect x="213.8" y="26.5" width="4.7" height="6.7" fill="#a89890"/><rect x="310.3" y="56.8" width="4.1" height="4.6" fill="#c8a49c"/><rect x="122.0" y="42.4" width="7.1" height="7.0" fill="#9a8a80"/><rect x="224.9" y="-0.7" width="5.8" height="5.7" fill="#b0a49c"/><rect x="134.7" y="52.5" width="2.6" height="3.3" fill="#9a8a80"/><rect x="129.1" y="44.7" width="4.2" height="5.9" fill="#6e625e"/><rect x="306.2" y="49.0" width="8.1" height="4.6" fill="#b07070"/><rect x="310.9" y="-0.8" width="2.9" height="6.0" fill="#e0c0b8"/><rect x="282.3" y="23.5" width="3.1" height="6.0" fill="#b07070"/><rect x="149.9" y="15.3" width="2.7" height="4.3" fill="#a89890"/><rect x="197.5" y="5.9" width="6.0" height="5.6" fill="#9a8a80"/><rect x="151.9" y="34.2" width="5.0" height="6.3" fill="#9a8a80"/><rect x="164.9" y="35.9" width="5.5" height="6.2" fill="#b0a49c"/><rect x="317.5" y="38.3" width="3.5" height="4.9" fill="#6a5a5a"/><rect x="180.2" y="55.7" width="7.0" height="5.0" fill="#4a4244"/><rect x="306.6" y="3.5" width="5.0" height="4.5" fill="#8a7670"/><rect x="117.0" y="47.6" width="5.1" height="2.5" fill="#8a7a72"/><rect x="319.6" y="42.5" width="7.9" height="7.5" fill="#e0c0b8"/><rect x="250.4" y="18.5" width="6.6" height="5.9" fill="#a87c7a"/><rect x="255.2" y="52.1" width="6.7" height="4.2" fill="#6a5a5a"/><rect x="195.2" y="5.0" width="8.4" height="4.3" fill="#574c4c"/><rect x="142.1" y="29.9" width="8.8" height="5.4" fill="#9a8a80"/><rect x="170.6" y="47.3" width="5.6" height="6.9" fill="#a89890"/><rect x="295.4" y="25.6" width="3.0" height="6.6" fill="#c8a49c"/><rect x="332.5" y="46.1" width="4.9" height="6.8" fill="#d8b0a8"/><rect x="140.2" y="19.5" width="7.4" height="3.9" fill="#a89890"/><rect x="136.7" y="11.3" width="2.7" height="7.4" fill="#574c4c"/><rect x="259.7" y="35.8" width="5.5" height="6.4" fill="#d09c98"/><rect x="143.9" y="54.7" width="4.5" height="5.2" fill="#c4b4a8"/><rect x="142.9" y="24.7" width="6.9" height="6.6" fill="#4a4244"/><rect x="245.9" y="41.3" width="8.3" height="6.1" fill="#4a4244"/><rect x="326.1" y="14.1" width="7.0" height="3.7" fill="#e0c0b8"/><rect x="307.0" y="3.1" width="7.0" height="5.5" fill="#5a4e50"/><rect x="125.8" y="13.8" width="8.8" height="7.7" fill="#6e625e"/><rect x="263.1" y="36.1" width="6.4" height="2.6" fill="#e0c0b8"/><rect x="337.5" y="45.0" width="3.8" height="7.1" fill="#6a5a5a"/><rect x="161.2" y="50.1" width="4.6" height="3.3" fill="#8a7a72"/><rect x="175.2" y="57.0" width="8.9" height="5.5" fill="#6e625e"/><rect x="262.7" y="-1.4" width="2.6" height="6.8" fill="#5a4e50"/><rect x="115.6" y="13.2" width="3.3" height="4.8" fill="#6e625e"/><rect x="220.6" y="44.5" width="5.8" height="3.1" fill="#8a7a72"/><rect x="277.8" y="52.4" width="6.8" height="4.2" fill="#c08a88"/><rect x="125.9" y="26.2" width="5.1" height="6.3" fill="#b0a49c"/><rect x="128.8" y="1.9" width="6.5" height="2.9" fill="#c4b4a8"/><rect x="274.4" y="20.2" width="6.4" height="4.1" fill="#c8a49c"/><rect x="134.6" y="39.8" width="8.0" height="6.1" fill="#574c4c"/><rect x="210.1" y="51.2" width="5.2" height="7.1" fill="#6e625e"/><rect x="183.3" y="16.1" width="4.2" height="7.7" fill="#b0a49c"/><rect x="127.3" y="47.7" width="3.1" height="3.0" fill="#9a8a80"/><rect x="238.9" y="32.8" width="6.2" height="4.3" fill="#5a4e50"/><rect x="311.2" y="54.4" width="5.2" height="7.5" fill="#8a7670"/><rect x="248.9" y="18.5" width="6.3" height="3.7" fill="#e0c0b8"/><rect x="305.2" y="18.4" width="6.1" height="3.1" fill="#e0c0b8"/><rect x="296.0" y="48.6" width="8.8" height="7.0" fill="#d8b0a8"/><rect x="118.0" y="53.7" width="7.9" height="4.0" fill="#7a6c66"/><rect x="322.1" y="18.4" width="3.7" height="3.3" fill="#d09c98"/><rect x="144.3" y="35.6" width="2.7" height="6.6" fill="#4a4244"/><rect x="215.4" y="6.6" width="4.5" height="4.3" fill="#6e625e"/><rect x="313.4" y="6.5" width="7.4" height="2.8" fill="#b07070"/><rect x="262.9" y="26.6" width="5.4" height="4.0" fill="#d09c98"/><rect x="190.7" y="3.8" width="6.9" height="5.8" fill="#7a6c66"/><rect x="122.4" y="21.1" width="6.4" height="2.5" fill="#574c4c"/><rect x="287.0" y="43.6" width="4.4" height="3.2" fill="#c8a49c"/><rect x="152.1" y="20.2" width="7.1" height="5.3" fill="#a89890"/><rect x="128.4" y="49.6" width="2.8" height="2.6" fill="#a89890"/><rect x="243.3" y="32.0" width="7.1" height="4.8" fill="#c08a88"/><rect x="332.3" y="7.5" width="8.7" height="5.0" fill="#5a4e50"/><rect x="132.1" y="48.5" width="4.1" height="5.7" fill="#4a4244"/><rect x="310.5" y="42.5" width="3.9" height="6.8" fill="#d09c98"/><rect x="233.0" y="8.8" width="7.5" height="4.4" fill="#9a8a80"/><rect x="165.9" y="5.9" width="3.8" height="5.8" fill="#6e625e"/><rect x="152.4" y="44.1" width="5.7" height="6.6" fill="#b0a49c"/><rect x="267.3" y="50.8" width="6.7" height="7.9" fill="#5a4e50"/><rect x="146.4" y="1.2" width="5.4" height="4.2" fill="#8a7a72"/><rect x="192.2" y="1.5" width="5.5" height="2.7" fill="#7a6c66"/><rect x="129.5" y="49.7" width="8.1" height="5.9" fill="#b0a49c"/><rect x="244.3" y="55.2" width="7.3" height="2.7" fill="#574c4c"/><rect x="185.3" y="26.0" width="3.5" height="2.8" fill="#a89890"/><rect x="336.0" y="2.1" width="6.7" height="2.7" fill="#b07070"/><rect x="231.5" y="34.2" width="4.9" height="7.5" fill="#5a4e50"/><rect x="266.8" y="0.2" width="6.6" height="4.3" fill="#d8b0a8"/><rect x="266.7" y="14.3" width="7.2" height="6.1" fill="#a87c7a"/><rect x="188.0" y="32.5" width="3.4" height="4.4" fill="#4a4244"/><rect x="141.4" y="40.2" width="3.1" height="5.6" fill="#a89890"/><rect x="297.4" y="37.9" width="7.9" height="6.6" fill="#d8b0a8"/><rect x="133.3" y="37.9" width="5.8" height="2.6" fill="#574c4c"/><rect x="189.9" y="43.7" width="3.7" height="8.0" fill="#7a6c66"/><rect x="304.5" y="3.2" width="7.5" height="7.1" fill="#c08a88"/><rect x="262.9" y="50.5" width="6.5" height="5.8" fill="#a87c7a"/><rect x="301.5" y="44.0" width="7.8" height="3.4" fill="#c8a49c"/><rect x="195.1" y="40.9" width="8.8" height="5.9" fill="#b0a49c"/><rect x="165.4" y="11.6" width="8.8" height="6.8" fill="#574c4c"/><rect x="195.9" y="54.8" width="8.9" height="5.0" fill="#4a4244"/><rect x="226.7" y="22.5" width="3.6" height="3.6" fill="#7a6c66"/><rect x="123.9" y="26.3" width="4.9" height="7.6" fill="#c4b4a8"/><rect x="306.1" y="14.4" width="7.5" height="4.0" fill="#a87c7a"/><rect x="301.5" y="2.6" width="8.4" height="7.0" fill="#c08a88"/><rect x="206.6" y="21.2" width="4.9" height="4.6" fill="#574c4c"/><rect x="118.4" y="53.8" width="8.0" height="6.1" fill="#9a8a80"/><rect x="120.7" y="53.0" width="5.6" height="7.1" fill="#b0a49c"/><rect x="214.3" y="-2.7" width="3.0" height="3.9" fill="#c4b4a8"/><rect x="326.4" y="34.1" width="5.3" height="6.8" fill="#d09c98"/><rect x="122.9" y="22.6" width="7.7" height="5.0" fill="#b0a49c"/><rect x="248.1" y="-2.0" width="5.8" height="3.8" fill="#c8a49c"/><rect x="112.4" y="18.5" width="6.2" height="3.5" fill="#c4b4a8"/><rect x="334.2" y="1.1" width="5.9" height="5.3" fill="#d8b0a8"/><rect x="116.6" y="50.3" width="2.8" height="4.6" fill="#8a7a72"/><rect x="193.4" y="1.1" width="4.1" height="6.1" fill="#a89890"/><rect x="142.4" y="18.5" width="4.7" height="6.0" fill="#b0a49c"/><rect x="335.6" y="26.2" width="3.7" height="3.2" fill="#b07070"/><rect x="120.4" y="9.3" width="7.6" height="7.4" fill="#7a6c66"/><rect x="229.5" y="57.3" width="6.0" height="3.9" fill="#574c4c"/><rect x="177.2" y="49.6" width="2.8" height="6.1" fill="#a89890"/><rect x="211.6" y="21.4" width="5.4" height="7.8" fill="#9a8a80"/><rect x="225.1" y="27.3" width="8.5" height="5.4" fill="#4a4244"/><rect x="130.0" y="33.7" width="7.8" height="5.5" fill="#6e625e"/><rect x="186.8" y="15.0" width="5.4" height="6.4" fill="#b0a49c"/><rect x="192.2" y="-0.4" width="8.2" height="4.4" fill="#7a6c66"/><rect x="257.8" y="45.3" width="2.9" height="6.2" fill="#d8b0a8"/><rect x="294.6" y="38.4" width="8.7" height="3.3" fill="#b07070"/><rect x="119.9" y="1.1" width="7.6" height="4.5" fill="#8a7a72"/><rect x="250.0" y="38.4" width="8.7" height="4.5" fill="#6a5a5a"/><rect x="143.4" y="19.4" width="4.5" height="4.0" fill="#8a7a72"/><rect x="279.7" y="27.4" width="5.0" height="5.6" fill="#8a7670"/><rect x="272.5" y="10.1" width="6.5" height="6.3" fill="#e0c0b8"/><rect x="140.0" y="49.0" width="5.4" height="7.4" fill="#6e625e"/><rect x="296.8" y="56.0" width="8.9" height="6.2" fill="#d8b0a8"/><rect x="235.6" y="51.4" width="8.0" height="6.4" fill="#9a8a80"/><rect x="293.0" y="28.0" width="3.3" height="3.6" fill="#b07070"/><rect x="118.0" y="30.8" width="4.9" height="6.9" fill="#6e625e"/><rect x="127.0" y="21.3" width="7.2" height="5.1" fill="#4a4244"/><rect x="299.7" y="1.5" width="8.8" height="6.0" fill="#d8b0a8"/><rect x="190.5" y="50.6" width="7.6" height="6.0" fill="#9a8a80"/><rect x="210.6" y="52.6" width="2.9" height="3.2" fill="#9a8a80"/><rect x="148.9" y="54.0" width="4.0" height="7.7" fill="#7a6c66"/><rect x="304.9" y="12.3" width="6.6" height="5.5" fill="#8a7670"/><rect x="252.1" y="2.7" width="6.7" height="5.8" fill="#a87c7a"/><rect x="262.2" y="41.0" width="6.4" height="7.1" fill="#c08a88"/><rect x="130.5" y="54.9" width="7.5" height="4.0" fill="#4a4244"/><rect x="252.9" y="-1.2" width="8.3" height="5.5" fill="#8a7670"/><rect x="222.1" y="46.1" width="7.0" height="4.1" fill="#c08a88"/><rect x="148.0" y="22.4" width="5.5" height="4.4" fill="#a89890"/><rect x="279.4" y="49.5" width="8.8" height="3.2" fill="#d8b0a8"/><rect x="136.2" y="11.7" width="3.3" height="5.0" fill="#8a7a72"/><rect x="178.2" y="20.4" width="6.5" height="3.9" fill="#9a8a80"/><rect x="297.5" y="54.0" width="7.2" height="3.5" fill="#d8b0a8"/><rect x="218.4" y="50.6" width="5.7" height="3.0" fill="#b0a49c"/><rect x="332.4" y="10.1" width="4.8" height="2.8" fill="#b07070"/><rect x="177.2" y="-2.5" width="3.2" height="3.2" fill="#a89890"/><rect x="286.2" y="19.3" width="5.1" height="5.6" fill="#d8b0a8"/><rect x="177.8" y="20.6" width="5.4" height="5.5" fill="#6e625e"/><rect x="141.3" y="2.9" width="4.9" height="7.9" fill="#a89890"/><rect x="284.1" y="9.1" width="5.8" height="5.3" fill="#a87c7a"/><rect x="274.7" y="46.0" width="5.9" height="3.3" fill="#a87c7a"/><rect x="186.8" y="34.4" width="3.6" height="7.9" fill="#7a6c66"/><rect x="247.4" y="27.9" width="5.8" height="5.2" fill="#b07070"/><rect x="298.0" y="19.5" width="6.9" height="7.9" fill="#c08a88"/><rect x="248.1" y="13.2" width="6.8" height="7.8" fill="#e0c0b8"/><rect x="276.5" y="32.6" width="3.6" height="6.0" fill="#c8a49c"/><rect x="145.7" y="38.5" width="2.7" height="7.7" fill="#8a7a72"/><rect x="212.6" y="22.5" width="5.2" height="3.6" fill="#b0a49c"/><rect x="311.0" y="41.9" width="2.9" height="3.3" fill="#5a4e50"/><rect x="339.6" y="26.2" width="4.9" height="7.8" fill="#d8b0a8"/><rect x="190.1" y="18.6" width="7.5" height="6.5" fill="#7a6c66"/><rect x="251.1" y="8.7" width="4.1" height="5.6" fill="#8a7670"/><rect x="287.8" y="40.0" width="7.0" height="5.2" fill="#d8b0a8"/><rect x="324.9" y="45.5" width="4.3" height="3.2" fill="#c8a49c"/><rect x="316.2" y="21.1" width="4.7" height="6.8" fill="#c08a88"/><rect x="177.6" y="40.6" width="4.8" height="4.9" fill="#b0a49c"/><rect x="160.8" y="47.5" width="4.3" height="5.6" fill="#6e625e"/><rect x="252.4" y="32.8" width="4.1" height="6.2" fill="#e0c0b8"/><rect x="124.0" y="22.2" width="7.2" height="3.1" fill="#8a7a72"/><rect x="331.9" y="56.7" width="3.5" height="6.1" fill="#b07070"/><rect x="220.9" y="9.2" width="8.8" height="4.3" fill="#6e625e"/><rect x="260.7" y="11.2" width="7.3" height="7.2" fill="#a87c7a"/><rect x="207.3" y="48.1" width="8.6" height="2.7" fill="#b0a49c"/><rect x="154.5" y="42.7" width="8.2" height="4.1" fill="#7a6c66"/><rect x="241.5" y="3.5" width="8.9" height="4.1" fill="#c4b4a8"/><rect x="231.5" y="51.2" width="3.4" height="5.3" fill="#d09c98"/><rect x="187.4" y="41.6" width="6.7" height="6.5" fill="#a89890"/><rect x="292.3" y="31.6" width="7.4" height="3.5" fill="#c8a49c"/><rect x="300.6" y="28.4" width="3.1" height="6.2" fill="#a87c7a"/><rect x="220.9" y="54.1" width="2.5" height="4.6" fill="#7a6c66"/><rect x="329.5" y="15.4" width="7.2" height="2.6" fill="#e0c0b8"/><rect x="126.2" y="4.2" width="4.5" height="4.7" fill="#7a6c66"/><rect x="269.4" y="36.0" width="8.6" height="4.5" fill="#a87c7a"/><rect x="221.0" y="24.8" width="8.9" height="4.6" fill="#b0a49c"/><rect x="284.7" y="45.9" width="7.9" height="6.7" fill="#6a5a5a"/><rect x="311.1" y="2.0" width="5.4" height="6.4" fill="#6a5a5a"/><rect x="137.6" y="47.6" width="8.4" height="3.6" fill="#9a8a80"/><rect x="186.8" y="28.7" width="3.3" height="3.6" fill="#6e625e"/><rect x="316.9" y="24.2" width="2.9" height="3.2" fill="#6a5a5a"/><rect x="125.2" y="25.2" width="7.7" height="6.5" fill="#8a7a72"/><rect x="282.0" y="32.3" width="2.8" height="4.4" fill="#c08a88"/><rect x="325.1" y="1.2" width="8.6" height="2.7" fill="#a87c7a"/><rect x="286.6" y="56.7" width="6.7" height="4.8" fill="#c8a49c"/><rect x="214.3" y="52.9" width="5.0" height="2.9" fill="#c4b4a8"/><rect x="142.3" y="49.5" width="3.3" height="8.0" fill="#9a8a80"/><rect x="278.0" y="10.6" width="2.5" height="2.6" fill="#d8b0a8"/><rect x="208.7" y="20.1" width="4.0" height="5.0" fill="#574c4c"/><rect x="325.7" y="41.2" width="3.2" height="7.0" fill="#c08a88"/><rect x="166.9" y="1.1" width="6.4" height="5.0" fill="#8a7a72"/><rect x="167.8" y="-0.3" width="5.4" height="5.5" fill="#8a7a72"/><rect x="144.0" y="57.6" width="4.0" height="7.5" fill="#a89890"/><rect x="166.0" y="50.5" width="8.9" height="5.4" fill="#7a6c66"/><rect x="125.9" y="54.9" width="8.2" height="7.5" fill="#4a4244"/><rect x="238.7" y="-0.1" width="4.7" height="6.0" fill="#d8b0a8"/><rect x="184.7" y="22.4" width="3.5" height="4.6" fill="#b0a49c"/><rect x="166.9" y="10.7" width="8.1" height="3.3" fill="#8a7a72"/><rect x="240.2" y="56.0" width="6.1" height="3.2" fill="#e0c0b8"/><rect x="187.3" y="1.8" width="5.4" height="4.5" fill="#574c4c"/><rect x="123.8" y="20.0" width="6.4" height="2.7" fill="#c4b4a8"/><rect x="161.5" y="9.7" width="8.4" height="4.2" fill="#574c4c"/><rect x="325.7" y="55.7" width="3.3" height="8.0" fill="#e0c0b8"/><rect x="270.6" y="39.9" width="5.1" height="3.8" fill="#8a7670"/><rect x="198.8" y="29.6" width="4.8" height="3.9" fill="#b0a49c"/><rect x="218.2" y="46.0" width="7.2" height="6.7" fill="#574c4c"/><rect x="196.5" y="22.2" width="6.2" height="3.7" fill="#7a6c66"/><rect x="238.2" y="32.6" width="7.2" height="4.1" fill="#e0c0b8"/><rect x="198.6" y="47.8" width="5.7" height="6.1" fill="#7a6c66"/><rect x="286.0" y="26.8" width="7.2" height="6.6" fill="#5a4e50"/><rect x="150.6" y="40.9" width="5.7" height="7.5" fill="#8a7a72"/><rect x="231.5" y="48.2" width="3.0" height="7.0" fill="#c08a88"/><rect x="206.0" y="48.4" width="4.0" height="6.4" fill="#c4b4a8"/><rect x="216.0" y="0.7" width="6.6" height="7.6" fill="#b0a49c"/><rect x="115.6" y="29.5" width="5.2" height="2.6" fill="#c4b4a8"/><rect x="334.9" y="-2.0" width="7.8" height="6.2" fill="#a87c7a"/><rect x="136.4" y="2.9" width="3.5" height="3.6" fill="#a89890"/><rect x="173.0" y="21.2" width="4.9" height="4.7" fill="#574c4c"/><rect x="180.4" y="47.5" width="3.0" height="8.0" fill="#8a7a72"/><rect x="133.3" y="20.1" width="6.1" height="2.8" fill="#9a8a80"/><rect x="130.9" y="48.6" width="6.7" height="4.3" fill="#6e625e"/><rect x="316.0" y="53.1" width="4.0" height="7.5" fill="#6a5a5a"/><rect x="220.4" y="-0.2" width="3.0" height="7.6" fill="#8a7a72"/><rect x="152.9" y="48.9" width="2.6" height="3.6" fill="#4a4244"/><rect x="323.8" y="15.3" width="6.2" height="5.6" fill="#d8b0a8"/><rect x="187.6" y="43.1" width="3.4" height="7.9" fill="#c4b4a8"/><rect x="282.0" y="18.1" width="3.1" height="3.8" fill="#6a5a5a"/><rect x="287.3" y="55.2" width="5.1" height="6.8" fill="#8a7670"/><rect x="290.6" y="24.5" width="4.0" height="5.5" fill="#a87c7a"/><rect x="267.0" y="37.3" width="3.1" height="5.9" fill="#d09c98"/><rect x="130.7" y="6.4" width="7.1" height="6.0" fill="#a89890"/><rect x="194.2" y="2.6" width="8.6" height="4.9" fill="#6e625e"/><rect x="142.2" y="8.4" width="5.4" height="5.6" fill="#8a7a72"/><rect x="132.4" y="30.8" width="6.4" height="6.8" fill="#8a7a72"/><rect x="178.5" y="20.7" width="3.1" height="7.5" fill="#574c4c"/><rect x="242.4" y="7.3" width="5.0" height="3.3" fill="#b07070"/><rect x="145.3" y="7.2" width="4.3" height="4.1" fill="#a89890"/><rect x="169.4" y="12.0" width="6.6" height="5.8" fill="#6e625e"/><rect x="142.9" y="-2.6" width="5.1" height="7.1" fill="#a89890"/><rect x="212.4" y="23.3" width="7.9" height="6.1" fill="#7a6c66"/><rect x="185.1" y="54.8" width="3.8" height="4.2" fill="#a89890"/><rect x="178.5" y="39.4" width="5.7" height="5.7" fill="#4a4244"/><rect x="175.9" y="44.9" width="4.9" height="7.6" fill="#c4b4a8"/><rect x="153.0" y="43.8" width="2.7" height="6.5" fill="#574c4c"/><rect x="212.0" y="14.8" width="7.0" height="7.0" fill="#4a4244"/><rect x="265.4" y="5.5" width="4.5" height="3.9" fill="#c8a49c"/><rect x="291.9" y="1.5" width="8.9" height="5.1" fill="#d8b0a8"/><rect x="322.6" y="50.0" width="5.2" height="2.7" fill="#d8b0a8"/><rect x="247.4" y="52.8" width="3.2" height="3.9" fill="#a87c7a"/><rect x="259.5" y="-0.3" width="8.9" height="6.2" fill="#5a4e50"/><rect x="332.2" y="23.3" width="2.6" height="3.9" fill="#d8b0a8"/><rect x="239.2" y="38.9" width="3.9" height="4.6" fill="#6a5a5a"/><rect x="269.4" y="6.2" width="9.0" height="5.2" fill="#d09c98"/><rect x="138.5" y="54.4" width="3.4" height="4.2" fill="#574c4c"/><rect x="230.8" y="18.2" width="3.1" height="6.5" fill="#6e625e"/><rect x="180.5" y="46.4" width="3.2" height="7.2" fill="#9a8a80"/><rect x="324.0" y="42.2" width="5.9" height="5.5" fill="#c8a49c"/><rect x="330.5" y="11.1" width="5.1" height="3.5" fill="#c8a49c"/><rect x="202.2" y="42.0" width="8.2" height="5.0" fill="#8a7a72"/><rect x="272.7" y="9.6" width="7.4" height="6.9" fill="#d09c98"/><rect x="294.3" y="29.8" width="4.9" height="3.6" fill="#b07070"/><rect x="232.3" y="36.0" width="6.4" height="5.9" fill="#a89890"/><rect x="192.3" y="24.9" width="3.6" height="6.2" fill="#6e625e"/><rect x="265.2" y="16.1" width="4.1" height="3.1" fill="#a87c7a"/><rect x="228.5" y="22.5" width="3.4" height="4.6" fill="#d8b0a8"/><rect x="270.1" y="36.4" width="9.0" height="5.6" fill="#a87c7a"/><rect x="154.7" y="48.4" width="6.5" height="7.3" fill="#b0a49c"/><rect x="143.1" y="46.7" width="8.8" height="5.3" fill="#b0a49c"/><rect x="206.8" y="48.2" width="5.7" height="3.0" fill="#574c4c"/><rect x="178.6" y="13.8" width="6.0" height="3.4" fill="#b0a49c"/><rect x="237.3" y="3.9" width="3.2" height="6.8" fill="#a89890"/><rect x="235.6" y="43.2" width="7.4" height="4.9" fill="#c8a49c"/><rect x="135.4" y="47.6" width="7.4" height="4.1" fill="#b0a49c"/><rect x="171.9" y="49.6" width="3.1" height="7.3" fill="#574c4c"/><rect x="159.9" y="42.0" width="7.0" height="7.2" fill="#4a4244"/><rect x="149.8" y="5.5" width="3.8" height="3.6" fill="#a89890"/><rect x="233.4" y="33.4" width="3.6" height="7.9" fill="#6a5a5a"/><rect x="173.0" y="49.3" width="8.9" height="6.2" fill="#4a4244"/><rect x="321.5" y="57.5" width="8.1" height="3.2" fill="#e0c0b8"/><rect x="145.3" y="16.6" width="4.1" height="7.1" fill="#9a8a80"/><rect x="243.7" y="13.4" width="5.2" height="5.0" fill="#d09c98"/><rect x="203.8" y="42.7" width="7.0" height="7.3" fill="#b0a49c"/><rect x="186.6" y="-2.8" width="7.5" height="6.5" fill="#b0a49c"/><rect x="256.7" y="39.5" width="8.0" height="6.9" fill="#c8a49c"/><rect x="300.1" y="27.2" width="4.6" height="4.1" fill="#a87c7a"/><rect x="241.1" y="26.6" width="4.7" height="6.3" fill="#d09c98"/><rect x="254.8" y="48.0" width="2.6" height="7.6" fill="#b07070"/><rect x="112.2" y="55.4" width="3.8" height="6.3" fill="#7a6c66"/><rect x="148.2" y="53.9" width="4.3" height="6.1" fill="#a89890"/><rect x="263.5" y="36.6" width="2.8" height="5.9" fill="#e0c0b8"/><rect x="209.9" y="2.6" width="3.1" height="3.7" fill="#574c4c"/><rect x="230.4" y="24.1" width="2.6" height="4.4" fill="#c8a49c"/><rect x="270.2" y="26.1" width="4.0" height="3.0" fill="#d09c98"/><rect x="183.4" y="50.7" width="3.4" height="6.8" fill="#9a8a80"/><rect x="258.3" y="38.3" width="2.9" height="5.6" fill="#a87c7a"/><rect x="212.3" y="41.1" width="6.6" height="3.3" fill="#b0a49c"/><rect x="308.1" y="2.3" width="3.2" height="6.6" fill="#c8a49c"/><rect x="192.2" y="23.2" width="7.6" height="3.9" fill="#574c4c"/><rect x="238.2" y="33.6" width="6.4" height="6.8" fill="#7a6c66"/><rect x="158.8" y="34.0" width="3.7" height="4.7" fill="#574c4c"/><rect x="224.8" y="3.9" width="5.7" height="5.8" fill="#8a7a72"/><rect x="337.0" y="54.0" width="3.4" height="7.2" fill="#5a4e50"/><rect x="236.6" y="7.5" width="5.6" height="7.9" fill="#6a5a5a"/><rect x="127.4" y="13.0" width="2.8" height="2.8" fill="#c4b4a8"/><rect x="177.3" y="40.5" width="7.5" height="4.8" fill="#c4b4a8"/><rect x="234.6" y="6.3" width="3.0" height="2.9" fill="#9a8a80"/><rect x="234.3" y="20.8" width="6.6" height="7.1" fill="#6e625e"/><rect x="182.7" y="23.7" width="8.7" height="3.8" fill="#4a4244"/><rect x="138.4" y="34.4" width="2.9" height="6.2" fill="#9a8a80"/><rect x="139.2" y="40.2" width="7.1" height="3.4" fill="#c4b4a8"/><rect x="229.9" y="47.2" width="4.2" height="4.5" fill="#7a6c66"/><rect x="279.1" y="4.2" width="8.3" height="4.3" fill="#d8b0a8"/><rect x="126.6" y="40.5" width="6.2" height="2.9" fill="#a89890"/><rect x="124.6" y="49.4" width="3.6" height="3.4" fill="#6e625e"/><rect x="164.1" y="28.0" width="2.8" height="7.2" fill="#b0a49c"/><rect x="195.0" y="53.1" width="3.7" height="7.8" fill="#4a4244"/><rect x="163.2" y="12.1" width="8.5" height="4.3" fill="#a89890"/><rect x="139.2" y="38.1" width="2.8" height="3.7" fill="#8a7a72"/><rect x="329.5" y="1.2" width="5.5" height="4.1" fill="#5a4e50"/><rect x="131.7" y="24.9" width="4.9" height="4.1" fill="#574c4c"/><rect x="217.8" y="33.1" width="5.7" height="6.7" fill="#c4b4a8"/><rect x="285.4" y="12.0" width="2.5" height="4.8" fill="#5a4e50"/><rect x="257.0" y="39.3" width="2.6" height="4.3" fill="#c8a49c"/><rect x="305.6" y="41.4" width="3.2" height="5.4" fill="#b07070"/><rect x="331.2" y="56.3" width="3.4" height="4.0" fill="#e0c0b8"/><rect x="316.6" y="28.7" width="7.1" height="4.5" fill="#d09c98"/><rect x="244.4" y="27.8" width="6.6" height="4.7" fill="#c08a88"/><rect x="211.2" y="55.8" width="4.0" height="3.9" fill="#4a4244"/><rect x="271.8" y="41.9" width="4.6" height="4.0" fill="#e0c0b8"/><rect x="143.0" y="44.0" width="3.2" height="3.1" fill="#a89890"/><rect x="204.7" y="29.7" width="8.8" height="3.6" fill="#7a6c66"/><rect x="306.4" y="2.5" width="7.7" height="4.2" fill="#6a5a5a"/><rect x="121.2" y="48.0" width="4.6" height="3.0" fill="#a89890"/><rect x="202.3" y="-0.0" width="4.4" height="7.0" fill="#4a4244"/><rect x="306.8" y="30.9" width="6.1" height="3.0" fill="#a87c7a"/><rect x="139.7" y="0.8" width="7.6" height="3.7" fill="#4a4244"/><rect x="196.9" y="35.4" width="6.7" height="5.7" fill="#6e625e"/><rect x="117.0" y="0.9" width="8.4" height="4.9" fill="#a89890"/><rect x="139.9" y="54.5" width="2.8" height="7.6" fill="#4a4244"/><rect x="225.1" y="20.3" width="5.3" height="4.4" fill="#7a6c66"/><rect x="175.8" y="50.9" width="2.7" height="5.9" fill="#7a6c66"/><rect x="225.7" y="50.8" width="5.6" height="3.0" fill="#4a4244"/><rect x="157.5" y="51.0" width="5.9" height="6.0" fill="#8a7a72"/><rect x="337.6" y="44.7" width="4.8" height="5.5" fill="#6a5a5a"/><rect x="226.5" y="20.7" width="3.7" height="4.3" fill="#8a7670"/><rect x="125.4" y="57.5" width="5.9" height="6.7" fill="#9a8a80"/><rect x="134.8" y="37.1" width="4.2" height="7.0" fill="#8a7a72"/><rect x="286.2" y="54.8" width="6.2" height="7.9" fill="#a87c7a"/><rect x="152.2" y="33.1" width="7.7" height="6.3" fill="#8a7a72"/><rect x="272.4" y="18.5" width="6.2" height="3.3" fill="#b07070"/><rect x="235.6" y="7.7" width="2.7" height="2.8" fill="#8a7a72"/><rect x="232.0" y="-3.0" width="8.5" height="3.6" fill="#a87c7a"/><rect x="321.5" y="48.5" width="4.6" height="2.6" fill="#a87c7a"/><rect x="288.6" y="48.6" width="8.1" height="7.8" fill="#c8a49c"/><rect x="245.6" y="17.5" width="4.6" height="7.9" fill="#4a4244"/><rect x="292.5" y="55.6" width="6.7" height="3.5" fill="#6a5a5a"/><rect x="291.4" y="10.6" width="6.3" height="3.5" fill="#8a7670"/><rect x="141.0" y="41.5" width="8.7" height="7.7" fill="#8a7a72"/><rect x="153.5" y="16.4" width="7.8" height="5.9" fill="#6e625e"/><rect x="325.6" y="5.6" width="7.3" height="3.8" fill="#a87c7a"/><rect x="257.1" y="55.7" width="7.8" height="6.2" fill="#5a4e50"/><rect x="213.8" y="13.2" width="4.1" height="2.9" fill="#6e625e"/><rect x="276.3" y="-0.1" width="5.3" height="4.8" fill="#c8a49c"/><rect x="224.4" y="20.1" width="6.0" height="3.1" fill="#574c4c"/><rect x="149.1" y="1.5" width="8.0" height="4.1" fill="#6e625e"/><rect x="128.9" y="7.4" width="4.9" height="6.5" fill="#6e625e"/><rect x="189.1" y="57.1" width="8.3" height="6.4" fill="#9a8a80"/><rect x="250.5" y="23.5" width="2.8" height="4.3" fill="#4a4244"/><rect x="271.0" y="41.0" width="7.2" height="4.0" fill="#e0c0b8"/><rect x="133.9" y="21.0" width="6.1" height="5.2" fill="#8a7a72"/>
<rect x="118" y="0" width="55" height="58.5" fill="#6a6460" opacity="0.45"/>
<rect x="122" y="10" width="22" height="16" fill="#7a7a7a" opacity="0.6"/>
<ellipse cx="158" cy="50" rx="9" ry="10" fill="#35522a" opacity="0.9"/>
<rect x="180" y="28" width="42" height="31" fill="#8a8068" opacity="0.75"/>
<rect x="170" y="0" width="45" height="9" fill="#d8d0c8" opacity="0.55"/>
<rect x="245.5" y="14" width="4" height="45" fill="#3d4250"/>
<rect x="274" y="10" width="3" height="45" fill="#6a6a70" opacity="0.8"/>
<rect x="222" y="0" width="118" height="4" fill="#aaa49c" opacity="0.6"/>
</g>
<path d="M248.5,0 L248.2,14 L201,16.5 L209,58.5 M337,0 L335,54 L292,58" fill="none" stroke="#f2d224" stroke-width="1.8"/>
<path d="M197.8,49 C194,44 193.5,42 193.5,40.5 A4.3,4.3 0 0 1 202.1,40.5 C202.1,42 201.6,44 197.8,49Z" fill="#e3b52a"/><circle cx="197.8" cy="40.5" r="1.3" fill="#f0e0a0"/>
<path d="M289,52 C285,47 284.5,45 284.5,43.5 A4.5,4.5 0 0 1 293.5,43.5 C293.5,45 293,47 289,52Z" fill="#18786c"/><circle cx="289" cy="43.5" r="1.3" fill="#d0f0e8"/>
<path d="M258.5,0 L266,0 L262.3,4.5Z" fill="#f39a1e"/><path d="M284.5,0 L293.5,0 L289,6.5Z" fill="#e8553a"/><rect x="287.5" y="0" width="3" height="2.5" fill="#fff"/><path d="M327.5,0 L335,0 L331.3,4.5Z" fill="#f39a1e"/>
<rect x="257" y="10.5" width="42" height="5" fill="#3a3a3a" opacity="0.55"/>
<rect x="0" y="0" width="118" height="58.5" fill="url(#lg)"/>
<path d="M22,58.5 Q30,46 36,50 Q44,36 50,47 Q58,40 62,58.5Z" fill="#1e2a1c" opacity="0.8"/>
<path d="M40,58.5 L52,40 L50,58.5Z M55,58.5 L66,44 L62,58.5Z" fill="#2a3a26" opacity="0.7"/>
</svg>
<div class="t" style="left:8.5px;top:9.5px;font-size:13px;line-height:19px;color:#f2f2f2;white-space:normal;width:40px">Kleos<br>2022</div>
<div class="t" style="left:66px;top:22px;font-size:13.45px;color:#f2f2f2;text-shadow:0 0 2px rgba(0,0,0,0.45)">//&nbsp; Patio en Bordador Rodríguez Ojeda / Rafa</div>
</div>
<div class="abs" style="left:0;top:136.5px;width:339px;height:27.5px;background:#4d7095;box-shadow:inset 0 0 0 1px #aab8c6;"></div>
<div class="t" style="top:144.30px;font-size:13.7px;left:3px;color:#f2f2f2">entrevista</div>
<svg class="abs" style="left:316px;top:141.10px" width="18" height="18" viewBox="0 0 18 18"><circle cx="9.3" cy="9" r="7.6" fill="none" stroke="#e2e6de" stroke-width="1.3"/><path d="M7.55,5.50 L12.35,9.00 L7.55,12.50Z" fill="#e2e6de"/></svg>
<div class="abs" style="left:0;top:164.00px;width:339px;height:64.75px;background:#5b96d6;"></div>
<svg style="position:absolute;left:3px;top:168.0px" width="57" height="57" viewBox="0 0 100 100" preserveAspectRatio="none">
<defs><filter id="bll100" x="-5%" y="-5%" width="110%" height="110%"><feGaussianBlur stdDeviation="2.0"/></filter>
<linearGradient id="wgl100" x1="0" y1="0" x2="1" y2="0"><stop offset="0" stop-color="#e2e2e2"/><stop offset="0.6" stop-color="#ececec"/><stop offset="1" stop-color="#d8d8d8"/></linearGradient>
<clipPath id="cpl100"><rect width="100" height="100"/></clipPath></defs>
<g clip-path="url(#cpl100)"><g filter="url(#bll100)">
<rect x="-5" y="-5" width="110" height="110" fill="#807566"/>
<rect x="-5" y="-5" width="110" height="30" fill="#e0e0e0"/>
<rect x="60" y="-5" width="45" height="85" fill="url(#wgl100)"/>
<rect x="50" y="-5" width="10" height="22" fill="#e2cfc2"/>
<path d="M-5,6 L20,8 L36,22 L40,76 L-5,80Z" fill="#4a6c3c"/>
<ellipse cx="48" cy="36" rx="12" ry="9" fill="#3a6230"/>
<path d="M35,100 L44,52 L62,52 L80,100Z" fill="#857b72"/>
<rect x="-5" y="80" width="40" height="25" fill="#7a7060"/>
<path d="M74,74 L105,70 L105,105 L80,105Z" fill="#5e554c"/>
<use href="#gtex"/>
<rect x="-5" y="77" width="35" height="3" fill="#3e3830"/>
<ellipse cx="68" cy="55" rx="5" ry="12" fill="#5e8050"/>
<ellipse cx="88" cy="54" rx="8" ry="6" fill="#7e9a68"/>
<rect x="86.5" y="58" width="3" height="20" fill="#3a3a32"/>
<ellipse cx="76" cy="72" rx="6" ry="6" fill="#4a4a40"/>
</g></g></svg>
<svg class="abs" style="left:3px;top:168.00px" width="57" height="57" viewBox="0 0 57 57"><circle cx="28.5" cy="28.5" r="14.6" fill="none" stroke="#5b96d6" stroke-width="3.6"/><path d="M25.00,21.50 L34.59,28.50 L25.00,35.50Z" fill="#5b96d6"/></svg>
<div class="t" style="left:66px;top:167.10px;font-size:11.7px;color:#f2f2f2">rafa cuidando plantas</div>
<div class="t" style="right:682.5px;top:167.10px;font-size:11.8px;color:#f2f2f2">3.42s</div>
<svg class="abs" style="left:0;top:194.30px;overflow:visible" width="339" height="1"><path d="M65.0,0.0L66.0,-1.3L67.0,-1.3L68.0,-1.3L69.0,-1.3L70.0,-1.3L71.0,-1.4L72.0,-1.5L73.0,-1.7L74.0,-2.0L75.0,-2.1L76.0,-2.3L77.0,-2.4L78.0,-2.5L79.0,-2.7L80.0,-2.8L81.0,-3.0L82.0,-2.9L83.0,-2.9L84.0,-2.9L85.0,-2.7L86.0,-2.5L87.0,-2.4L88.0,-2.3L89.0,-2.0L90.0,-1.9L91.0,-1.9L92.0,-2.0L93.0,-2.2L94.0,-2.4L95.0,-2.4L96.0,-2.4L97.0,-2.6L98.0,-2.9L99.0,-2.7L100.0,-2.6L101.0,-2.6L102.0,-2.5L103.0,-2.5L104.0,-2.5L105.0,-2.5L106.0,-2.2L107.0,-2.1L108.0,-2.0L109.0,-1.8L110.0,-1.5L111.0,-1.3L112.0,-1.3L113.0,-1.3L114.0,-1.3L115.0,-1.3L116.0,-1.3L117.0,-1.3L118.0,-1.3L119.0,-1.3L120.0,-1.3L121.0,-1.3L122.0,-1.3L123.0,-1.3L124.0,-1.3L125.0,-1.3L126.0,-1.3L127.0,-1.3L128.0,-1.3L129.0,-1.3L130.0,-1.3L131.0,-1.3L132.0,-1.3L133.0,-1.3L134.0,-1.3L135.0,-1.3L136.0,-1.3L137.0,-1.3L138.0,-1.3L139.0,-1.3L140.0,-1.5L141.0,-1.5L142.0,-1.5L143.0,-1.6L144.0,-2.0L145.0,-2.2L146.0,-2.4L147.0,-2.9L148.0,-3.3L149.0,-3.4L150.0,-3.5L151.0,-4.1L152.0,-4.8L153.0,-4.7L154.0,-4.4L155.0,-4.2L156.0,-3.9L157.0,-3.4L158.0,-2.8L159.0,-2.1L160.0,-2.1L161.0,-2.1L162.0,-2.0L163.0,-2.1L164.0,-2.2L165.0,-2.3L166.0,-2.4L167.0,-2.4L168.0,-2.4L169.0,-2.5L170.0,-2.5L171.0,-2.7L172.0,-2.6L173.0,-2.4L174.0,-2.1L175.0,-1.9L176.0,-1.7L177.0,-1.7L178.0,-1.8L179.0,-1.8L180.0,-1.8L181.0,-1.8L182.0,-1.6L183.0,-1.5L184.0,-1.5L185.0,-1.5L186.0,-1.4L187.0,-1.4L188.0,-1.3L189.0,-1.4L190.0,-1.4L191.0,-1.5L192.0,-1.5L193.0,-1.5L194.0,-1.4L195.0,-1.4L196.0,-1.3L197.0,-1.3L198.0,-1.3L199.0,-1.3L200.0,-1.3L201.0,-1.3L202.0,-1.3L203.0,-1.3L204.0,-1.3L205.0,-1.3L206.0,-1.3L207.0,-1.3L208.0,-1.3L209.0,-1.3L210.0,-1.3L211.0,-1.3L212.0,-1.3L213.0,-1.3L214.0,-1.3L215.0,-1.3L216.0,-1.3L217.0,-1.3L218.0,-1.3L219.0,-1.3L220.0,-1.3L221.0,-1.3L222.0,-1.3L223.0,-1.3L224.0,-1.5L225.0,-1.8L226.0,-2.1L227.0,-2.1L228.0,-2.1L229.0,-2.4L230.0,-2.7L231.0,-2.8L232.0,-2.9L233.0,-2.8L234.0,-2.8L235.0,-3.1L236.0,-3.5L237.0,-3.7L238.0,-3.8L239.0,-3.5L240.0,-3.3L241.0,-3.3L242.0,-3.1L243.0,-2.6L244.0,-2.1L245.0,-2.0L246.0,-2.0L247.0,-2.0L248.0,-2.0L249.0,-1.9L250.0,-1.8L251.0,-2.0L252.0,-2.2L253.0,-2.3L254.0,-2.4L255.0,-2.4L256.0,-2.3L257.0,-2.1L258.0,-1.9L259.0,-1.9L260.0,-1.9L261.0,-1.8L262.0,-1.8L263.0,-1.6L264.0,-1.4L265.0,-1.3L266.0,-1.3L267.0,-1.3L268.0,-1.3L269.0,-1.3L270.0,-1.3L271.0,-1.3L272.0,-1.3L273.0,-1.3L274.0,-1.3L275.0,-1.3L276.0,-1.3L277.0,-1.3L278.0,-1.3L279.0,-1.3L280.0,-1.3L281.0,-1.3L282.0,-1.3L283.0,-1.3L284.0,-1.3L285.0,-1.3L286.0,-1.3L287.0,-1.3L288.0,-1.3L289.0,-1.3L290.0,-1.3L291.0,-1.3L292.0,-1.3L293.0,-1.3L294.0,-1.3L295.0,-1.3L296.0,-1.3L297.0,-1.3L298.0,-1.3L299.0,-1.3L300.0,-1.3L301.0,-1.3L302.0,-1.3L303.0,-1.3L304.0,-1.3L305.0,-1.3L306.0,-1.3L307.0,-1.3L308.0,-1.3L309.0,-1.3L310.0,-1.3L311.0,-1.3L312.0,-1.3L313.0,-1.3L314.0,-1.3L315.0,-1.3L316.0,-1.3L317.0,-1.3L318.0,-1.3L319.0,-1.3L320.0,-1.3L321.0,-1.3L322.0,-1.3L323.0,-1.3L324.0,-1.3L325.0,-1.3L326.0,-1.3L327.0,-1.3L328.0,-1.3L329.0,-1.3L330.0,-1.3L331.0,-1.3L332.0,-1.3L332.0,0.0L332.0,1.3L331.0,1.3L330.0,1.3L329.0,1.3L328.0,1.3L327.0,1.3L326.0,1.3L325.0,1.3L324.0,1.3L323.0,1.3L322.0,1.3L321.0,1.3L320.0,1.3L319.0,1.3L318.0,1.3L317.0,1.3L316.0,1.3L315.0,1.3L314.0,1.3L313.0,1.3L312.0,1.3L311.0,1.3L310.0,1.3L309.0,1.3L308.0,1.3L307.0,1.3L306.0,1.3L305.0,1.3L304.0,1.3L303.0,1.3L302.0,1.3L301.0,1.3L300.0,1.3L299.0,1.3L298.0,1.3L297.0,1.3L296.0,1.3L295.0,1.3L294.0,1.3L293.0,1.3L292.0,1.3L291.0,1.3L290.0,1.3L289.0,1.3L288.0,1.3L287.0,1.3L286.0,1.3L285.0,1.3L284.0,1.3L283.0,1.3L282.0,1.3L281.0,1.3L280.0,1.3L279.0,1.3L278.0,1.3L277.0,1.3L276.0,1.3L275.0,1.3L274.0,1.3L273.0,1.3L272.0,1.3L271.0,1.3L270.0,1.3L269.0,1.3L268.0,1.3L267.0,1.3L266.0,1.3L265.0,1.3L264.0,1.4L263.0,1.5L262.0,1.5L261.0,1.6L260.0,1.8L259.0,2.0L258.0,2.2L257.0,2.3L256.0,2.3L255.0,2.5L254.0,2.6L253.0,2.4L252.0,2.1L251.0,2.2L250.0,2.2L249.0,2.1L248.0,2.0L247.0,1.9L246.0,1.8L245.0,1.9L244.0,2.3L243.0,2.5L242.0,2.8L241.0,2.8L240.0,2.9L239.0,3.3L238.0,3.9L237.0,4.2L236.0,4.4L235.0,3.8L234.0,3.3L233.0,3.1L232.0,3.0L231.0,2.7L230.0,2.5L229.0,2.2L228.0,2.0L227.0,1.8L226.0,1.7L225.0,1.6L224.0,1.5L223.0,1.4L222.0,1.4L221.0,1.4L220.0,1.3L219.0,1.3L218.0,1.3L217.0,1.3L216.0,1.3L215.0,1.3L214.0,1.3L213.0,1.3L212.0,1.3L211.0,1.3L210.0,1.3L209.0,1.3L208.0,1.3L207.0,1.3L206.0,1.3L205.0,1.3L204.0,1.3L203.0,1.3L202.0,1.3L201.0,1.3L200.0,1.3L199.0,1.3L198.0,1.3L197.0,1.3L196.0,1.3L195.0,1.3L194.0,1.3L193.0,1.3L192.0,1.3L191.0,1.3L190.0,1.4L189.0,1.4L188.0,1.5L187.0,1.5L186.0,1.4L185.0,1.5L184.0,1.5L183.0,1.6L182.0,1.7L181.0,1.7L180.0,1.6L179.0,1.7L178.0,1.8L177.0,1.9L176.0,1.9L175.0,2.0L174.0,2.2L173.0,2.2L172.0,2.2L171.0,2.2L170.0,2.3L169.0,2.2L168.0,2.1L167.0,2.2L166.0,2.3L165.0,2.2L164.0,2.1L163.0,2.3L162.0,2.4L161.0,2.5L160.0,2.4L159.0,2.3L158.0,2.7L157.0,3.0L156.0,3.2L155.0,4.1L154.0,5.1L153.0,4.5L152.0,3.8L151.0,3.7L150.0,3.8L149.0,3.6L148.0,3.5L147.0,3.3L146.0,3.1L145.0,2.6L144.0,2.1L143.0,1.8L142.0,1.7L141.0,1.5L140.0,1.3L139.0,1.3L138.0,1.3L137.0,1.3L136.0,1.3L135.0,1.3L134.0,1.3L133.0,1.3L132.0,1.3L131.0,1.3L130.0,1.3L129.0,1.3L128.0,1.3L127.0,1.3L126.0,1.3L125.0,1.3L124.0,1.3L123.0,1.3L122.0,1.3L121.0,1.3L120.0,1.3L119.0,1.3L118.0,1.3L117.0,1.3L116.0,1.3L115.0,1.3L114.0,1.3L113.0,1.3L112.0,1.3L111.0,1.3L110.0,1.3L109.0,1.6L108.0,2.0L107.0,2.3L106.0,2.6L105.0,2.9L104.0,2.9L103.0,2.8L102.0,2.6L101.0,2.9L100.0,3.0L99.0,2.9L98.0,2.7L97.0,2.5L96.0,2.3L95.0,2.4L94.0,2.6L93.0,2.5L92.0,2.4L91.0,2.3L90.0,2.1L89.0,2.2L88.0,2.4L87.0,2.4L86.0,2.3L85.0,2.5L84.0,2.7L83.0,2.7L82.0,2.6L81.0,2.7L80.0,2.7L79.0,2.5L78.0,2.4L77.0,2.3L76.0,2.2L75.0,2.1L74.0,2.0L73.0,1.8L72.0,1.6L71.0,1.6L70.0,1.5L69.0,1.3L68.0,1.3L67.0,1.3L66.0,1.3Z" fill="#f0f0f0"/></svg>
<div class="abs" style="left:0;top:228.75px;width:339px;height:64.75px;background:#5b96d6;"></div>
<svg style="position:absolute;left:3px;top:232.75px" width="57" height="57" viewBox="0 0 100 100" preserveAspectRatio="none">
<defs><filter id="bll101" x="-5%" y="-5%" width="110%" height="110%"><feGaussianBlur stdDeviation="2.0"/></filter>
<linearGradient id="wgl101" x1="0" y1="0" x2="1" y2="0"><stop offset="0" stop-color="#e2e2e2"/><stop offset="0.6" stop-color="#ececec"/><stop offset="1" stop-color="#d8d8d8"/></linearGradient>
<clipPath id="cpl101"><rect width="100" height="100"/></clipPath></defs>
<g clip-path="url(#cpl101)"><g filter="url(#bll101)">
<rect x="-5" y="-5" width="110" height="110" fill="#807566"/>
<rect x="-5" y="-5" width="110" height="30" fill="#e0e0e0"/>
<rect x="60" y="-5" width="45" height="85" fill="url(#wgl101)"/>
<rect x="50" y="-5" width="10" height="22" fill="#e2cfc2"/>
<path d="M-5,6 L20,8 L36,22 L40,76 L-5,80Z" fill="#4a6c3c"/>
<ellipse cx="48" cy="36" rx="12" ry="9" fill="#3a6230"/>
<path d="M35,100 L44,52 L62,52 L80,100Z" fill="#857b72"/>
<rect x="-5" y="80" width="40" height="25" fill="#7a7060"/>
<path d="M74,74 L105,70 L105,105 L80,105Z" fill="#5e554c"/>
<use href="#gtex"/>
<rect x="-5" y="77" width="35" height="3" fill="#3e3830"/>
<ellipse cx="68" cy="55" rx="5" ry="12" fill="#5e8050"/>
<ellipse cx="88" cy="54" rx="8" ry="6" fill="#7e9a68"/>
<rect x="86.5" y="58" width="3" height="20" fill="#3a3a32"/>
<ellipse cx="76" cy="72" rx="6" ry="6" fill="#4a4a40"/>
</g></g></svg>
<svg class="abs" style="left:3px;top:232.75px" width="57" height="57" viewBox="0 0 57 57"><circle cx="28.5" cy="28.5" r="14.6" fill="none" stroke="#5b96d6" stroke-width="3.6"/><path d="M25.00,21.50 L34.59,28.50 L25.00,35.50Z" fill="#5b96d6"/></svg>
<div class="t" style="left:66px;top:231.85px;font-size:11.7px;color:#f2f2f2">nombre cientifico</div>
<div class="t" style="right:682.5px;top:231.85px;font-size:11.8px;color:#f2f2f2">15.47s</div>
<svg class="abs" style="left:0;top:259.05px;overflow:visible" width="339" height="1"><path d="M65.0,0.0L66.0,-1.3L67.0,-1.3L68.0,-1.3L69.0,-1.3L70.0,-1.5L71.0,-1.6L72.0,-1.7L73.0,-1.7L74.0,-1.8L75.0,-1.9L76.0,-2.0L77.0,-2.0L78.0,-2.0L79.0,-2.0L80.0,-2.0L81.0,-2.0L82.0,-2.0L83.0,-2.0L84.0,-2.0L85.0,-1.9L86.0,-1.9L87.0,-1.9L88.0,-2.0L89.0,-2.1L90.0,-2.2L91.0,-2.8L92.0,-3.3L93.0,-3.3L94.0,-2.6L95.0,-1.8L96.0,-1.7L97.0,-1.8L98.0,-2.0L99.0,-2.1L100.0,-2.1L101.0,-2.1L102.0,-1.9L103.0,-1.9L104.0,-1.9L105.0,-1.8L106.0,-1.7L107.0,-1.7L108.0,-1.7L109.0,-1.7L110.0,-1.7L111.0,-1.6L112.0,-1.4L113.0,-1.4L114.0,-1.3L115.0,-1.3L116.0,-1.3L117.0,-1.3L118.0,-1.3L119.0,-1.3L120.0,-1.3L121.0,-1.6L122.0,-1.6L123.0,-1.8L124.0,-2.1L125.0,-2.0L126.0,-1.8L127.0,-1.8L128.0,-1.7L129.0,-1.8L130.0,-1.9L131.0,-1.8L132.0,-1.7L133.0,-1.8L134.0,-1.9L135.0,-1.9L136.0,-1.9L137.0,-2.0L138.0,-2.1L139.0,-2.1L140.0,-2.1L141.0,-2.3L142.0,-2.4L143.0,-2.3L144.0,-2.2L145.0,-2.0L146.0,-1.8L147.0,-1.9L148.0,-2.0L149.0,-2.0L150.0,-2.0L151.0,-2.0L152.0,-1.9L153.0,-2.0L154.0,-2.0L155.0,-1.9L156.0,-1.8L157.0,-2.0L158.0,-2.2L159.0,-2.2L160.0,-2.3L161.0,-2.2L162.0,-2.0L163.0,-2.1L164.0,-2.2L165.0,-2.1L166.0,-1.9L167.0,-2.0L168.0,-2.1L169.0,-2.0L170.0,-2.0L171.0,-2.1L172.0,-2.2L173.0,-2.2L174.0,-2.1L175.0,-2.1L176.0,-2.0L177.0,-2.1L178.0,-2.2L179.0,-2.0L180.0,-1.9L181.0,-2.0L182.0,-2.1L183.0,-2.0L184.0,-1.9L185.0,-1.8L186.0,-1.8L187.0,-1.9L188.0,-2.0L189.0,-2.1L190.0,-2.2L191.0,-2.4L192.0,-2.5L193.0,-2.4L194.0,-2.2L195.0,-2.2L196.0,-2.2L197.0,-2.2L198.0,-2.2L199.0,-2.2L200.0,-2.0L201.0,-1.9L202.0,-1.8L203.0,-1.6L204.0,-1.4L205.0,-1.4L206.0,-1.4L207.0,-1.4L208.0,-1.4L209.0,-1.3L210.0,-1.3L211.0,-1.3L212.0,-1.3L213.0,-1.3L214.0,-1.3L215.0,-1.3L216.0,-1.3L217.0,-1.3L218.0,-1.3L219.0,-1.3L220.0,-1.3L221.0,-1.3L222.0,-1.3L223.0,-1.3L224.0,-1.3L225.0,-1.3L226.0,-1.3L227.0,-1.5L228.0,-1.7L229.0,-1.8L230.0,-1.9L231.0,-2.2L232.0,-2.2L233.0,-2.1L234.0,-2.0L235.0,-1.8L236.0,-1.7L237.0,-1.7L238.0,-1.7L239.0,-1.7L240.0,-1.7L241.0,-1.7L242.0,-1.7L243.0,-1.7L244.0,-1.7L245.0,-1.8L246.0,-1.9L247.0,-1.9L248.0,-1.9L249.0,-1.9L250.0,-1.9L251.0,-1.8L252.0,-1.7L253.0,-1.7L254.0,-1.6L255.0,-1.3L256.0,-1.3L257.0,-1.3L258.0,-1.3L259.0,-1.3L260.0,-1.3L261.0,-1.3L262.0,-1.3L263.0,-1.3L264.0,-1.3L265.0,-1.3L266.0,-1.3L267.0,-1.3L268.0,-1.3L269.0,-1.3L270.0,-1.4L271.0,-1.7L272.0,-1.8L273.0,-1.9L274.0,-1.8L275.0,-1.6L276.0,-1.5L277.0,-1.3L278.0,-1.3L279.0,-1.3L280.0,-1.3L281.0,-1.3L282.0,-1.3L283.0,-1.3L284.0,-1.3L285.0,-1.3L286.0,-1.3L287.0,-1.3L288.0,-1.3L289.0,-1.3L290.0,-1.3L291.0,-1.3L292.0,-1.3L293.0,-1.3L294.0,-1.3L295.0,-1.3L296.0,-1.3L297.0,-1.3L298.0,-1.3L299.0,-1.8L300.0,-2.4L301.0,-2.5L302.0,-2.5L303.0,-2.6L304.0,-2.6L305.0,-2.8L306.0,-2.9L307.0,-2.8L308.0,-2.8L309.0,-2.7L310.0,-2.6L311.0,-2.5L312.0,-2.6L313.0,-2.5L314.0,-2.4L315.0,-2.6L316.0,-2.8L317.0,-2.6L318.0,-2.4L319.0,-2.4L320.0,-2.2L321.0,-1.9L322.0,-1.6L323.0,-1.5L324.0,-1.4L325.0,-1.3L326.0,-1.3L327.0,-1.3L328.0,-1.4L329.0,-1.4L330.0,-1.5L331.0,-1.5L332.0,-1.4L332.0,0.0L332.0,1.3L331.0,1.3L330.0,1.4L329.0,1.4L328.0,1.3L327.0,1.3L326.0,1.3L325.0,1.3L324.0,1.4L323.0,1.7L322.0,2.0L321.0,2.1L320.0,2.2L319.0,2.3L318.0,2.2L317.0,2.2L316.0,2.1L315.0,2.2L314.0,2.4L313.0,2.5L312.0,2.5L311.0,2.3L310.0,2.2L309.0,2.5L308.0,2.8L307.0,2.9L306.0,3.0L305.0,2.8L304.0,2.6L303.0,2.5L302.0,2.5L301.0,2.5L300.0,2.5L299.0,2.0L298.0,1.4L297.0,1.3L296.0,1.3L295.0,1.3L294.0,1.3L293.0,1.3L292.0,1.3L291.0,1.3L290.0,1.3L289.0,1.3L288.0,1.4L287.0,1.3L286.0,1.3L285.0,1.3L284.0,1.3L283.0,1.3L282.0,1.3L281.0,1.3L280.0,1.3L279.0,1.3L278.0,1.4L277.0,1.6L276.0,1.7L275.0,2.0L274.0,2.3L273.0,2.1L272.0,1.8L271.0,1.6L270.0,1.4L269.0,1.3L268.0,1.3L267.0,1.3L266.0,1.3L265.0,1.3L264.0,1.3L263.0,1.3L262.0,1.3L261.0,1.3L260.0,1.3L259.0,1.3L258.0,1.3L257.0,1.4L256.0,1.5L255.0,1.7L254.0,1.9L253.0,2.0L252.0,2.1L251.0,2.0L250.0,1.9L249.0,1.8L248.0,1.7L247.0,1.6L246.0,1.5L245.0,1.6L244.0,1.7L243.0,1.6L242.0,1.6L241.0,1.6L240.0,1.6L239.0,1.7L238.0,1.9L237.0,1.9L236.0,1.8L235.0,1.8L234.0,1.8L233.0,1.9L232.0,2.0L231.0,2.3L230.0,2.1L229.0,1.8L228.0,1.5L227.0,1.4L226.0,1.3L225.0,1.3L224.0,1.3L223.0,1.3L222.0,1.3L221.0,1.3L220.0,1.3L219.0,1.3L218.0,1.3L217.0,1.3L216.0,1.3L215.0,1.3L214.0,1.3L213.0,1.3L212.0,1.3L211.0,1.3L210.0,1.3L209.0,1.3L208.0,1.3L207.0,1.3L206.0,1.3L205.0,1.3L204.0,1.3L203.0,1.5L202.0,1.8L201.0,2.1L200.0,2.2L199.0,2.4L198.0,2.4L197.0,2.4L196.0,2.4L195.0,2.3L194.0,2.1L193.0,2.1L192.0,2.0L191.0,2.0L190.0,2.1L189.0,2.1L188.0,2.1L187.0,2.2L186.0,2.2L185.0,2.1L184.0,2.0L183.0,2.1L182.0,2.2L181.0,2.4L180.0,2.6L179.0,2.6L178.0,2.6L177.0,2.5L176.0,2.4L175.0,2.4L174.0,2.4L173.0,2.2L172.0,2.0L171.0,1.8L170.0,1.8L169.0,2.0L168.0,2.3L167.0,2.3L166.0,2.2L165.0,2.1L164.0,2.1L163.0,2.1L162.0,2.1L161.0,2.0L160.0,2.0L159.0,2.1L158.0,2.1L157.0,2.3L156.0,2.5L155.0,2.3L154.0,2.2L153.0,2.2L152.0,2.3L151.0,2.3L150.0,2.3L149.0,2.2L148.0,2.2L147.0,2.2L146.0,2.3L145.0,2.1L144.0,1.9L143.0,1.9L142.0,2.0L141.0,1.9L140.0,1.8L139.0,1.7L138.0,1.6L137.0,1.8L136.0,1.9L135.0,1.9L134.0,1.9L133.0,2.1L132.0,2.3L131.0,2.3L130.0,2.2L129.0,2.2L128.0,2.2L127.0,2.3L126.0,2.3L125.0,2.2L124.0,2.1L123.0,1.9L122.0,1.7L121.0,1.6L120.0,1.5L119.0,1.4L118.0,1.4L117.0,1.5L116.0,1.5L115.0,1.4L114.0,1.3L113.0,1.4L112.0,1.4L111.0,1.4L110.0,1.5L109.0,1.6L108.0,1.7L107.0,1.8L106.0,1.9L105.0,2.2L104.0,2.5L103.0,2.6L102.0,2.7L101.0,2.8L100.0,2.9L99.0,2.5L98.0,2.2L97.0,2.1L96.0,2.0L95.0,2.0L94.0,2.5L93.0,3.0L92.0,2.8L91.0,2.4L90.0,2.1L89.0,1.8L88.0,1.6L87.0,1.7L86.0,1.8L85.0,1.7L84.0,1.6L83.0,1.7L82.0,1.7L81.0,1.6L80.0,1.5L79.0,1.6L78.0,1.6L77.0,1.5L76.0,1.4L75.0,1.6L74.0,1.8L73.0,1.9L72.0,2.0L71.0,1.9L70.0,1.6L69.0,1.4L68.0,1.3L67.0,1.3L66.0,1.3Z" fill="#f0f0f0"/></svg>
<div class="abs" style="left:0;top:293.50px;width:339px;height:64.75px;background:#5b96d6;"></div>
<svg style="position:absolute;left:3px;top:297.5px" width="57" height="57" viewBox="0 0 100 100" preserveAspectRatio="none">
<defs><filter id="bll102" x="-5%" y="-5%" width="110%" height="110%"><feGaussianBlur stdDeviation="2.0"/></filter>
<linearGradient id="wgl102" x1="0" y1="0" x2="1" y2="0"><stop offset="0" stop-color="#e2e2e2"/><stop offset="0.6" stop-color="#ececec"/><stop offset="1" stop-color="#d8d8d8"/></linearGradient>
<clipPath id="cpl102"><rect width="100" height="100"/></clipPath></defs>
<g clip-path="url(#cpl102)"><g filter="url(#bll102)">
<rect x="-5" y="-5" width="110" height="110" fill="#807566"/>
<rect x="-5" y="-5" width="110" height="30" fill="#e0e0e0"/>
<rect x="60" y="-5" width="45" height="85" fill="url(#wgl102)"/>
<rect x="50" y="-5" width="10" height="22" fill="#e2cfc2"/>
<path d="M-5,6 L20,8 L36,22 L40,76 L-5,80Z" fill="#4a6c3c"/>
<ellipse cx="48" cy="36" rx="12" ry="9" fill="#3a6230"/>
<path d="M35,100 L44,52 L62,52 L80,100Z" fill="#857b72"/>
<rect x="-5" y="80" width="40" height="25" fill="#7a7060"/>
<path d="M74,74 L105,70 L105,105 L80,105Z" fill="#5e554c"/>
<use href="#gtex"/>
<rect x="-5" y="77" width="35" height="3" fill="#3e3830"/>
<ellipse cx="68" cy="55" rx="5" ry="12" fill="#5e8050"/>
<ellipse cx="88" cy="54" rx="8" ry="6" fill="#7e9a68"/>
<rect x="86.5" y="58" width="3" height="20" fill="#3a3a32"/>
<ellipse cx="76" cy="72" rx="6" ry="6" fill="#4a4a40"/>
</g></g></svg>
<svg class="abs" style="left:3px;top:297.50px" width="57" height="57" viewBox="0 0 57 57"><circle cx="28.5" cy="28.5" r="14.6" fill="none" stroke="#5b96d6" stroke-width="3.6"/><path d="M25.00,21.50 L34.59,28.50 L25.00,35.50Z" fill="#5b96d6"/></svg>
<div class="t" style="left:66px;top:296.60px;font-size:11.7px;color:#f2f2f2">regando</div>
<div class="t" style="right:682.5px;top:296.60px;font-size:11.8px;color:#f2f2f2">6.55s</div>
<svg class="abs" style="left:0;top:323.80px;overflow:visible" width="339" height="1"><path d="M65.0,0.0L66.0,-1.3L67.0,-1.3L68.0,-1.3L69.0,-1.6L70.0,-2.1L71.0,-2.6L72.0,-2.8L73.0,-2.7L74.0,-2.6L75.0,-2.6L76.0,-2.7L77.0,-2.7L78.0,-2.8L79.0,-2.9L80.0,-3.0L81.0,-3.2L82.0,-3.4L83.0,-3.2L84.0,-3.1L85.0,-3.2L86.0,-3.4L87.0,-3.4L88.0,-3.4L89.0,-3.4L90.0,-3.4L91.0,-3.1L92.0,-2.9L93.0,-3.0L94.0,-3.1L95.0,-3.4L96.0,-3.7L97.0,-3.5L98.0,-3.2L99.0,-3.3L100.0,-3.4L101.0,-3.5L102.0,-3.4L103.0,-3.3L104.0,-3.1L105.0,-3.1L106.0,-3.2L107.0,-3.3L108.0,-3.5L109.0,-3.4L110.0,-3.3L111.0,-3.4L112.0,-3.2L113.0,-3.3L114.0,-3.4L115.0,-3.1L116.0,-2.8L117.0,-2.6L118.0,-2.3L119.0,-2.1L120.0,-2.1L121.0,-2.1L122.0,-2.1L123.0,-2.3L124.0,-2.5L125.0,-2.5L126.0,-2.5L127.0,-2.6L128.0,-2.7L129.0,-2.8L130.0,-2.9L131.0,-2.8L132.0,-2.6L133.0,-2.7L134.0,-2.8L135.0,-2.5L136.0,-2.3L137.0,-2.4L138.0,-2.6L139.0,-2.6L140.0,-2.6L141.0,-2.6L142.0,-2.7L143.0,-2.5L144.0,-2.2L145.0,-2.3L146.0,-2.5L147.0,-2.6L148.0,-2.7L149.0,-2.8L150.0,-3.0L151.0,-3.0L152.0,-3.0L153.0,-2.9L154.0,-2.8L155.0,-2.9L156.0,-3.1L157.0,-3.0L158.0,-3.0L159.0,-2.9L160.0,-2.9L161.0,-2.9L162.0,-2.9L163.0,-2.8L164.0,-2.6L165.0,-2.5L166.0,-2.3L167.0,-2.5L168.0,-2.6L169.0,-2.5L170.0,-2.3L171.0,-2.5L172.0,-2.6L173.0,-2.5L174.0,-2.5L175.0,-2.4L176.0,-2.3L177.0,-2.4L178.0,-2.5L179.0,-2.5L180.0,-2.6L181.0,-2.8L182.0,-2.8L183.0,-3.0L184.0,-3.2L185.0,-2.9L186.0,-2.6L187.0,-2.9L188.0,-3.1L189.0,-3.0L190.0,-2.8L191.0,-2.9L192.0,-2.9L193.0,-2.9L194.0,-2.9L195.0,-2.8L196.0,-2.7L197.0,-2.8L198.0,-2.9L199.0,-2.7L200.0,-2.3L201.0,-2.1L202.0,-1.9L203.0,-1.5L204.0,-1.3L205.0,-1.3L206.0,-1.3L207.0,-1.3L208.0,-1.3L209.0,-1.3L210.0,-1.3L211.0,-1.3L212.0,-1.3L213.0,-1.3L214.0,-1.3L215.0,-1.3L216.0,-1.3L217.0,-1.3L218.0,-1.3L219.0,-1.3L220.0,-1.4L221.0,-1.5L222.0,-1.5L223.0,-1.4L224.0,-1.3L225.0,-1.3L226.0,-1.3L227.0,-1.4L228.0,-1.5L229.0,-1.5L230.0,-1.5L231.0,-1.5L232.0,-1.5L233.0,-1.4L234.0,-1.3L235.0,-1.4L236.0,-1.4L237.0,-1.3L238.0,-1.3L239.0,-1.3L240.0,-1.3L241.0,-1.4L242.0,-1.6L243.0,-1.6L244.0,-1.6L245.0,-1.8L246.0,-1.9L247.0,-1.9L248.0,-1.8L249.0,-1.8L250.0,-1.7L251.0,-1.8L252.0,-1.9L253.0,-2.0L254.0,-2.0L255.0,-1.9L256.0,-1.7L257.0,-1.8L258.0,-1.9L259.0,-2.1L260.0,-2.3L261.0,-2.3L262.0,-2.3L263.0,-2.4L264.0,-2.4L265.0,-2.4L266.0,-2.4L267.0,-2.4L268.0,-2.5L269.0,-2.4L270.0,-2.4L271.0,-2.3L272.0,-2.3L273.0,-2.3L274.0,-2.2L275.0,-2.2L276.0,-2.2L277.0,-2.4L278.0,-2.6L279.0,-2.6L280.0,-2.6L281.0,-2.6L282.0,-2.6L283.0,-2.5L284.0,-2.4L285.0,-2.6L286.0,-2.8L287.0,-2.9L288.0,-3.0L289.0,-2.8L290.0,-2.7L291.0,-2.7L292.0,-2.7L293.0,-2.7L294.0,-2.7L295.0,-2.6L296.0,-2.6L297.0,-2.7L298.0,-2.7L299.0,-2.7L300.0,-2.7L301.0,-2.6L302.0,-2.5L303.0,-2.4L304.0,-2.4L305.0,-2.4L306.0,-2.4L307.0,-2.4L308.0,-2.5L309.0,-2.4L310.0,-2.4L311.0,-2.5L312.0,-2.5L313.0,-2.4L314.0,-2.3L315.0,-2.1L316.0,-1.9L317.0,-2.0L318.0,-2.1L319.0,-2.0L320.0,-1.9L321.0,-2.0L322.0,-2.0L323.0,-2.1L324.0,-2.2L325.0,-2.1L326.0,-1.9L327.0,-2.0L328.0,-2.1L329.0,-2.0L330.0,-1.9L331.0,-1.9L332.0,-1.8L332.0,0.0L332.0,1.7L331.0,1.8L330.0,1.9L329.0,2.0L328.0,2.1L327.0,2.2L326.0,2.3L325.0,2.3L324.0,2.4L323.0,2.4L322.0,2.4L321.0,2.4L320.0,2.4L319.0,2.4L318.0,2.3L317.0,2.4L316.0,2.4L315.0,2.3L314.0,2.3L313.0,2.2L312.0,2.1L311.0,2.0L310.0,2.0L309.0,2.1L308.0,2.2L307.0,2.4L306.0,2.5L305.0,2.4L304.0,2.2L303.0,2.1L302.0,2.0L301.0,2.0L300.0,2.2L299.0,2.1L298.0,2.1L297.0,2.1L296.0,2.0L295.0,2.2L294.0,2.4L293.0,2.3L292.0,2.3L291.0,2.4L290.0,2.5L289.0,2.4L288.0,2.4L287.0,2.5L286.0,2.6L285.0,2.6L284.0,2.6L283.0,2.5L282.0,2.5L281.0,2.6L280.0,2.6L279.0,2.6L278.0,2.7L277.0,2.5L276.0,2.2L275.0,2.4L274.0,2.5L273.0,2.4L272.0,2.3L271.0,2.5L270.0,2.7L269.0,2.7L268.0,2.6L267.0,2.5L266.0,2.5L265.0,2.3L264.0,2.1L263.0,2.1L262.0,2.1L261.0,2.1L260.0,2.2L259.0,2.0L258.0,1.9L257.0,1.9L256.0,1.8L255.0,1.9L254.0,2.1L253.0,2.0L252.0,2.0L251.0,2.0L250.0,1.9L249.0,1.9L248.0,1.9L247.0,1.8L246.0,1.7L245.0,1.5L244.0,1.3L243.0,1.4L242.0,1.4L241.0,1.3L240.0,1.3L239.0,1.3L238.0,1.3L237.0,1.3L236.0,1.3L235.0,1.3L234.0,1.3L233.0,1.3L232.0,1.3L231.0,1.3L230.0,1.3L229.0,1.3L228.0,1.4L227.0,1.4L226.0,1.4L225.0,1.3L224.0,1.3L223.0,1.3L222.0,1.3L221.0,1.3L220.0,1.3L219.0,1.3L218.0,1.4L217.0,1.3L216.0,1.3L215.0,1.3L214.0,1.3L213.0,1.3L212.0,1.3L211.0,1.3L210.0,1.3L209.0,1.3L208.0,1.3L207.0,1.3L206.0,1.3L205.0,1.3L204.0,1.3L203.0,1.5L202.0,1.7L201.0,1.9L200.0,2.2L199.0,2.5L198.0,2.6L197.0,2.5L196.0,2.4L195.0,2.5L194.0,2.6L193.0,2.7L192.0,2.7L191.0,2.6L190.0,2.5L189.0,2.7L188.0,2.9L187.0,2.8L186.0,2.7L185.0,2.8L184.0,2.8L183.0,2.9L182.0,2.9L181.0,3.0L180.0,3.1L179.0,2.8L178.0,2.5L177.0,2.4L176.0,2.2L175.0,2.4L174.0,2.6L173.0,2.5L172.0,2.5L171.0,2.4L170.0,2.3L169.0,2.4L168.0,2.5L167.0,2.4L166.0,2.3L165.0,2.4L164.0,2.6L163.0,2.5L162.0,2.5L161.0,2.6L160.0,2.7L159.0,2.7L158.0,2.6L157.0,2.5L156.0,2.5L155.0,2.5L154.0,2.5L153.0,2.4L152.0,2.4L151.0,2.5L150.0,2.8L149.0,2.9L148.0,3.0L147.0,3.0L146.0,3.1L145.0,3.0L144.0,3.0L143.0,3.0L142.0,2.9L141.0,2.9L140.0,2.8L139.0,2.6L138.0,2.5L137.0,2.5L136.0,2.5L135.0,2.5L134.0,2.6L133.0,2.6L132.0,2.5L131.0,2.6L130.0,2.6L129.0,2.6L128.0,2.5L127.0,2.6L126.0,2.7L125.0,2.5L124.0,2.4L123.0,2.5L122.0,2.7L121.0,2.6L120.0,2.4L119.0,2.2L118.0,2.2L117.0,2.3L116.0,2.3L115.0,2.4L114.0,2.4L113.0,2.6L112.0,2.8L111.0,3.1L110.0,3.5L109.0,3.5L108.0,3.5L107.0,3.9L106.0,4.2L105.0,4.0L104.0,3.8L103.0,3.7L102.0,3.7L101.0,3.8L100.0,3.9L99.0,3.7L98.0,3.5L97.0,3.4L96.0,3.2L95.0,3.3L94.0,3.4L93.0,3.3L92.0,3.1L91.0,3.2L90.0,3.2L89.0,3.5L88.0,3.7L87.0,3.8L86.0,3.9L85.0,3.7L84.0,3.6L83.0,3.3L82.0,3.0L81.0,2.9L80.0,2.9L79.0,2.8L78.0,2.6L77.0,2.8L76.0,3.0L75.0,2.8L74.0,2.6L73.0,2.8L72.0,2.9L71.0,2.7L70.0,2.2L69.0,1.7L68.0,1.3L67.0,1.3L66.0,1.3Z" fill="#f0f0f0"/></svg>
<div class="abs" style="left:0;top:358.25px;width:339px;height:27.5px;background:#6a7b42;"></div>
<div class="t" style="top:365.05px;font-size:13.7px;left:3px;color:#f2f2f2">Pista-3</div>
<svg class="abs" style="left:316px;top:362.85px" width="18" height="18" viewBox="0 0 18 18"><circle cx="9.3" cy="9" r="7.6" fill="none" stroke="#e2e6de" stroke-width="1.3"/><path d="M7.55,5.50 L12.35,9.00 L7.55,12.50Z" fill="#e2e6de"/></svg>
<div class="abs" style="left:0;top:385.75px;width:339px;height:64.75px;background:#8bb646;"></div>
<svg style="position:absolute;left:3px;top:389.75px" width="57" height="57" viewBox="0 0 100 100" preserveAspectRatio="none">
<defs><filter id="bll103" x="-5%" y="-5%" width="110%" height="110%"><feGaussianBlur stdDeviation="1.6"/></filter>
<clipPath id="cpl103"><rect width="100" height="100"/></clipPath></defs>
<g clip-path="url(#cpl103)"><g filter="url(#bll103)">
<rect x="-5" y="-5" width="110" height="110" fill="#9a8a90"/>
<rect x="-5" y="-5" width="47" height="110" fill="#d4d4d4"/>
<rect x="15" y="-5" width="14" height="60" fill="#f0f0f0"/>
<rect x="30" y="-5" width="12" height="75" fill="#c4c4c4"/>
<ellipse cx="6" cy="28" rx="6" ry="5" fill="#a84838"/>
<path d="M-5,32 L10,32 L16,50 L14,82 L-5,88Z" fill="#3a6a3a"/>
<ellipse cx="8" cy="50" rx="6" ry="12" fill="#4a7a40"/>
<path d="M26,52 L40,56 L42,90 L28,90Z" fill="#5a7048"/>
<path d="M-5,84 L42,84 L42,105 L-5,105Z" fill="#6a5a4c"/>
<path d="M12,58 L28,58 L34,105 L8,105Z" fill="#a49c98"/>
<rect x="42.0" y="0.0" width="4.1" height="4.1" fill="#a89080"/><rect x="46.0" y="0.0" width="4.1" height="4.1" fill="#b09aa0"/><rect x="50.0" y="0.0" width="4.1" height="4.1" fill="#c0a8a8"/><rect x="54.0" y="0.0" width="4.1" height="4.1" fill="#786c70"/><rect x="58.0" y="0.0" width="4.1" height="4.1" fill="#a08c94"/><rect x="62.0" y="0.0" width="4.1" height="4.1" fill="#8c7a80"/><rect x="66.0" y="0.0" width="4.1" height="4.1" fill="#9aa0a0"/><rect x="70.0" y="0.0" width="4.1" height="4.1" fill="#8c7a80"/><rect x="74.0" y="0.0" width="4.1" height="4.1" fill="#a89080"/><rect x="78.0" y="0.0" width="4.1" height="4.1" fill="#b4a0a4"/><rect x="82.0" y="0.0" width="4.1" height="4.1" fill="#a08c94"/><rect x="86.0" y="0.0" width="4.1" height="4.1" fill="#9aa0a0"/><rect x="90.0" y="0.0" width="4.1" height="4.1" fill="#9a9090"/><rect x="94.0" y="0.0" width="4.1" height="4.1" fill="#a08c94"/><rect x="98.0" y="0.0" width="4.1" height="4.1" fill="#8c7a80"/><rect x="42.0" y="4.0" width="4.1" height="4.1" fill="#c0a8a8"/><rect x="46.0" y="4.0" width="4.1" height="4.1" fill="#c0a8a8"/><rect x="50.0" y="4.0" width="4.1" height="4.1" fill="#8c7a80"/><rect x="54.0" y="4.0" width="4.1" height="4.1" fill="#9a9090"/><rect x="58.0" y="4.0" width="4.1" height="4.1" fill="#8c7a80"/><rect x="62.0" y="4.0" width="4.1" height="4.1" fill="#9aa0a0"/><rect x="66.0" y="4.0" width="4.1" height="4.1" fill="#c0a8a8"/><rect x="70.0" y="4.0" width="4.1" height="4.1" fill="#a08c94"/><rect x="74.0" y="4.0" width="4.1" height="4.1" fill="#b4a0a4"/><rect x="78.0" y="4.0" width="4.1" height="4.1" fill="#8c7a80"/><rect x="82.0" y="4.0" width="4.1" height="4.1" fill="#9a9090"/><rect x="86.0" y="4.0" width="4.1" height="4.1" fill="#786c70"/><rect x="90.0" y="4.0" width="4.1" height="4.1" fill="#786c70"/><rect x="94.0" y="4.0" width="4.1" height="4.1" fill="#b4a0a4"/><rect x="98.0" y="4.0" width="4.1" height="4.1" fill="#a08c94"/><rect x="42.0" y="8.0" width="4.1" height="4.1" fill="#b4a0a4"/><rect x="46.0" y="8.0" width="4.1" height="4.1" fill="#b4a0a4"/><rect x="50.0" y="8.0" width="4.1" height="4.1" fill="#c0a8a8"/><rect x="54.0" y="8.0" width="4.1" height="4.1" fill="#a08c94"/><rect x="58.0" y="8.0" width="4.1" height="4.1" fill="#9a9090"/><rect x="62.0" y="8.0" width="4.1" height="4.1" fill="#a08c94"/><rect x="66.0" y="8.0" width="4.1" height="4.1" fill="#9aa0a0"/><rect x="70.0" y="8.0" width="4.1" height="4.1" fill="#b09aa0"/><rect x="74.0" y="8.0" width="4.1" height="4.1" fill="#7e8a8a"/><rect x="78.0" y="8.0" width="4.1" height="4.1" fill="#c0a8a8"/><rect x="82.0" y="8.0" width="4.1" height="4.1" fill="#b09aa0"/><rect x="86.0" y="8.0" width="4.1" height="4.1" fill="#9aa0a0"/><rect x="90.0" y="8.0" width="4.1" height="4.1" fill="#8c7a80"/><rect x="94.0" y="8.0" width="4.1" height="4.1" fill="#b4a0a4"/><rect x="98.0" y="8.0" width="4.1" height="4.1" fill="#7e8a8a"/><rect x="42.0" y="12.0" width="4.1" height="4.1" fill="#9aa0a0"/><rect x="46.0" y="12.0" width="4.1" height="4.1" fill="#786c70"/><rect x="50.0" y="12.0" width="4.1" height="4.1" fill="#b09aa0"/><rect x="54.0" y="12.0" width="4.1" height="4.1" fill="#8c7a80"/><rect x="58.0" y="12.0" width="4.1" height="4.1" fill="#b4a0a4"/><rect x="62.0" y="12.0" width="4.1" height="4.1" fill="#b4a0a4"/><rect x="66.0" y="12.0" width="4.1" height="4.1" fill="#786c70"/><rect x="70.0" y="12.0" width="4.1" height="4.1" fill="#9a9090"/><rect x="74.0" y="12.0" width="4.1" height="4.1" fill="#a89080"/><rect x="78.0" y="12.0" width="4.1" height="4.1" fill="#8c7a80"/><rect x="82.0" y="12.0" width="4.1" height="4.1" fill="#9aa0a0"/><rect x="86.0" y="12.0" width="4.1" height="4.1" fill="#8c7a80"/><rect x="90.0" y="12.0" width="4.1" height="4.1" fill="#b4a0a4"/><rect x="94.0" y="12.0" width="4.1" height="4.1" fill="#a08c94"/><rect x="98.0" y="12.0" width="4.1" height="4.1" fill="#b4a0a4"/><rect x="42.0" y="16.0" width="4.1" height="4.1" fill="#9a9090"/><rect x="46.0" y="16.0" width="4.1" height="4.1" fill="#8a8490"/><rect x="50.0" y="16.0" width="4.1" height="4.1" fill="#786c70"/><rect x="54.0" y="16.0" width="4.1" height="4.1" fill="#9aa0a0"/><rect x="58.0" y="16.0" width="4.1" height="4.1" fill="#c0a8a8"/><rect x="62.0" y="16.0" width="4.1" height="4.1" fill="#a89080"/><rect x="66.0" y="16.0" width="4.1" height="4.1" fill="#8a8490"/><rect x="70.0" y="16.0" width="4.1" height="4.1" fill="#b4a0a4"/><rect x="74.0" y="16.0" width="4.1" height="4.1" fill="#8a8490"/><rect x="78.0" y="16.0" width="4.1" height="4.1" fill="#a89080"/><rect x="82.0" y="16.0" width="4.1" height="4.1" fill="#7e8a8a"/><rect x="86.0" y="16.0" width="4.1" height="4.1" fill="#9a9090"/><rect x="90.0" y="16.0" width="4.1" height="4.1" fill="#b09aa0"/><rect x="94.0" y="16.0" width="4.1" height="4.1" fill="#9a9090"/><rect x="98.0" y="16.0" width="4.1" height="4.1" fill="#8c7a80"/><rect x="42.0" y="20.0" width="4.1" height="4.1" fill="#b4a0a4"/><rect x="46.0" y="20.0" width="4.1" height="4.1" fill="#7e8a8a"/><rect x="50.0" y="20.0" width="4.1" height="4.1" fill="#9aa0a0"/><rect x="54.0" y="20.0" width="4.1" height="4.1" fill="#8a8490"/><rect x="58.0" y="20.0" width="4.1" height="4.1" fill="#a89080"/><rect x="62.0" y="20.0" width="4.1" height="4.1" fill="#8a8490"/><rect x="66.0" y="20.0" width="4.1" height="4.1" fill="#7e8a8a"/><rect x="70.0" y="20.0" width="4.1" height="4.1" fill="#b4a0a4"/><rect x="74.0" y="20.0" width="4.1" height="4.1" fill="#8c7a80"/><rect x="78.0" y="20.0" width="4.1" height="4.1" fill="#8c7a80"/><rect x="82.0" y="20.0" width="4.1" height="4.1" fill="#9aa0a0"/><rect x="86.0" y="20.0" width="4.1" height="4.1" fill="#c0a8a8"/><rect x="90.0" y="20.0" width="4.1" height="4.1" fill="#b09aa0"/><rect x="94.0" y="20.0" width="4.1" height="4.1" fill="#a89080"/><rect x="98.0" y="20.0" width="4.1" height="4.1" fill="#b09aa0"/><rect x="42.0" y="24.0" width="4.1" height="4.1" fill="#8a8490"/><rect x="46.0" y="24.0" width="4.1" height="4.1" fill="#c0a8a8"/><rect x="50.0" y="24.0" width="4.1" height="4.1" fill="#a08c94"/><rect x="54.0" y="24.0" width="4.1" height="4.1" fill="#786c70"/><rect x="58.0" y="24.0" width="4.1" height="4.1" fill="#8c7a80"/><rect x="62.0" y="24.0" width="4.1" height="4.1" fill="#9aa0a0"/><rect x="66.0" y="24.0" width="4.1" height="4.1" fill="#b4a0a4"/><rect x="70.0" y="24.0" width="4.1" height="4.1" fill="#a89080"/><rect x="74.0" y="24.0" width="4.1" height="4.1" fill="#a89080"/><rect x="78.0" y="24.0" width="4.1" height="4.1" fill="#a89080"/><rect x="82.0" y="24.0" width="4.1" height="4.1" fill="#b4a0a4"/><rect x="86.0" y="24.0" width="4.1" height="4.1" fill="#8a8490"/><rect x="90.0" y="24.0" width="4.1" height="4.1" fill="#b4a0a4"/><rect x="94.0" y="24.0" width="4.1" height="4.1" fill="#8a8490"/><rect x="98.0" y="24.0" width="4.1" height="4.1" fill="#8c7a80"/><rect x="42.0" y="28.0" width="4.1" height="4.1" fill="#8c7a80"/><rect x="46.0" y="28.0" width="4.1" height="4.1" fill="#7e8a8a"/><rect x="50.0" y="28.0" width="4.1" height="4.1" fill="#8a8490"/><rect x="54.0" y="28.0" width="4.1" height="4.1" fill="#786c70"/><rect x="58.0" y="28.0" width="4.1" height="4.1" fill="#8c7a80"/><rect x="62.0" y="28.0" width="4.1" height="4.1" fill="#a08c94"/><rect x="66.0" y="28.0" width="4.1" height="4.1" fill="#7e8a8a"/><rect x="70.0" y="28.0" width="4.1" height="4.1" fill="#786c70"/><rect x="74.0" y="28.0" width="4.1" height="4.1" fill="#b4a0a4"/><rect x="78.0" y="28.0" width="4.1" height="4.1" fill="#786c70"/><rect x="82.0" y="28.0" width="4.1" height="4.1" fill="#8a8490"/><rect x="86.0" y="28.0" width="4.1" height="4.1" fill="#7e8a8a"/><rect x="90.0" y="28.0" width="4.1" height="4.1" fill="#c0a8a8"/><rect x="94.0" y="28.0" width="4.1" height="4.1" fill="#786c70"/><rect x="98.0" y="28.0" width="4.1" height="4.1" fill="#a89080"/><rect x="42.0" y="32.0" width="4.1" height="4.1" fill="#a08c94"/><rect x="46.0" y="32.0" width="4.1" height="4.1" fill="#8a8490"/><rect x="50.0" y="32.0" width="4.1" height="4.1" fill="#a89080"/><rect x="54.0" y="32.0" width="4.1" height="4.1" fill="#b09aa0"/><rect x="58.0" y="32.0" width="4.1" height="4.1" fill="#b4a0a4"/><rect x="62.0" y="32.0" width="4.1" height="4.1" fill="#8c7a80"/><rect x="66.0" y="32.0" width="4.1" height="4.1" fill="#8a8490"/><rect x="70.0" y="32.0" width="4.1" height="4.1" fill="#a08c94"/><rect x="74.0" y="32.0" width="4.1" height="4.1" fill="#9a9090"/><rect x="78.0" y="32.0" width="4.1" height="4.1" fill="#7e8a8a"/><rect x="82.0" y="32.0" width="4.1" height="4.1" fill="#b09aa0"/><rect x="86.0" y="32.0" width="4.1" height="4.1" fill="#9a9090"/><rect x="90.0" y="32.0" width="4.1" height="4.1" fill="#c0a8a8"/><rect x="94.0" y="32.0" width="4.1" height="4.1" fill="#c0a8a8"/><rect x="98.0" y="32.0" width="4.1" height="4.1" fill="#8a8490"/><rect x="42.0" y="36.0" width="4.1" height="4.1" fill="#8c7a80"/><rect x="46.0" y="36.0" width="4.1" height="4.1" fill="#b09aa0"/><rect x="50.0" y="36.0" width="4.1" height="4.1" fill="#8a8490"/><rect x="54.0" y="36.0" width="4.1" height="4.1" fill="#c0a8a8"/><rect x="58.0" y="36.0" width="4.1" height="4.1" fill="#9aa0a0"/><rect x="62.0" y="36.0" width="4.1" height="4.1" fill="#7e8a8a"/><rect x="66.0" y="36.0" width="4.1" height="4.1" fill="#b09aa0"/><rect x="70.0" y="36.0" width="4.1" height="4.1" fill="#c0a8a8"/><rect x="74.0" y="36.0" width="4.1" height="4.1" fill="#9aa0a0"/><rect x="78.0" y="36.0" width="4.1" height="4.1" fill="#7e8a8a"/><rect x="82.0" y="36.0" width="4.1" height="4.1" fill="#c0a8a8"/><rect x="86.0" y="36.0" width="4.1" height="4.1" fill="#a89080"/><rect x="90.0" y="36.0" width="4.1" height="4.1" fill="#786c70"/><rect x="94.0" y="36.0" width="4.1" height="4.1" fill="#c0a8a8"/><rect x="98.0" y="36.0" width="4.1" height="4.1" fill="#9a9090"/><rect x="42.0" y="40.0" width="4.1" height="4.1" fill="#b09aa0"/><rect x="46.0" y="40.0" width="4.1" height="4.1" fill="#8c7a80"/><rect x="50.0" y="40.0" width="4.1" height="4.1" fill="#b09aa0"/><rect x="54.0" y="40.0" width="4.1" height="4.1" fill="#b09aa0"/><rect x="58.0" y="40.0" width="4.1" height="4.1" fill="#9a9090"/><rect x="62.0" y="40.0" width="4.1" height="4.1" fill="#786c70"/><rect x="66.0" y="40.0" width="4.1" height="4.1" fill="#9a9090"/><rect x="70.0" y="40.0" width="4.1" height="4.1" fill="#a08c94"/><rect x="74.0" y="40.0" width="4.1" height="4.1" fill="#8a8490"/><rect x="78.0" y="40.0" width="4.1" height="4.1" fill="#b4a0a4"/><rect x="82.0" y="40.0" width="4.1" height="4.1" fill="#b09aa0"/><rect x="86.0" y="40.0" width="4.1" height="4.1" fill="#7e8a8a"/><rect x="90.0" y="40.0" width="4.1" height="4.1" fill="#7e8a8a"/><rect x="94.0" y="40.0" width="4.1" height="4.1" fill="#a08c94"/><rect x="98.0" y="40.0" width="4.1" height="4.1" fill="#b09aa0"/><rect x="42.0" y="44.0" width="4.1" height="4.1" fill="#c0a8a8"/><rect x="46.0" y="44.0" width="4.1" height="4.1" fill="#9aa0a0"/><rect x="50.0" y="44.0" width="4.1" height="4.1" fill="#a89080"/><rect x="54.0" y="44.0" width="4.1" height="4.1" fill="#b4a0a4"/><rect x="58.0" y="44.0" width="4.1" height="4.1" fill="#b4a0a4"/><rect x="62.0" y="44.0" width="4.1" height="4.1" fill="#a89080"/><rect x="66.0" y="44.0" width="4.1" height="4.1" fill="#b09aa0"/><rect x="70.0" y="44.0" width="4.1" height="4.1" fill="#9aa0a0"/><rect x="74.0" y="44.0" width="4.1" height="4.1" fill="#b4a0a4"/><rect x="78.0" y="44.0" width="4.1" height="4.1" fill="#786c70"/><rect x="82.0" y="44.0" width="4.1" height="4.1" fill="#786c70"/><rect x="86.0" y="44.0" width="4.1" height="4.1" fill="#a08c94"/><rect x="90.0" y="44.0" width="4.1" height="4.1" fill="#8a8490"/><rect x="94.0" y="44.0" width="4.1" height="4.1" fill="#786c70"/><rect x="98.0" y="44.0" width="4.1" height="4.1" fill="#9aa0a0"/><rect x="42.0" y="48.0" width="4.1" height="4.1" fill="#c0a8a8"/><rect x="46.0" y="48.0" width="4.1" height="4.1" fill="#c0a8a8"/><rect x="50.0" y="48.0" width="4.1" height="4.1" fill="#c0a8a8"/><rect x="54.0" y="48.0" width="4.1" height="4.1" fill="#c0a8a8"/><rect x="58.0" y="48.0" width="4.1" height="4.1" fill="#8c7a80"/><rect x="62.0" y="48.0" width="4.1" height="4.1" fill="#8a8490"/><rect x="66.0" y="48.0" width="4.1" height="4.1" fill="#786c70"/><rect x="70.0" y="48.0" width="4.1" height="4.1" fill="#c0a8a8"/><rect x="74.0" y="48.0" width="4.1" height="4.1" fill="#a08c94"/><rect x="78.0" y="48.0" width="4.1" height="4.1" fill="#9a9090"/><rect x="82.0" y="48.0" width="4.1" height="4.1" fill="#8c7a80"/><rect x="86.0" y="48.0" width="4.1" height="4.1" fill="#9a9090"/><rect x="90.0" y="48.0" width="4.1" height="4.1" fill="#8a8490"/><rect x="94.0" y="48.0" width="4.1" height="4.1" fill="#b09aa0"/><rect x="98.0" y="48.0" width="4.1" height="4.1" fill="#8c7a80"/><rect x="42.0" y="52.0" width="4.1" height="4.1" fill="#a89080"/><rect x="46.0" y="52.0" width="4.1" height="4.1" fill="#b4a0a4"/><rect x="50.0" y="52.0" width="4.1" height="4.1" fill="#a08c94"/><rect x="54.0" y="52.0" width="4.1" height="4.1" fill="#8c7a80"/><rect x="58.0" y="52.0" width="4.1" height="4.1" fill="#a08c94"/><rect x="62.0" y="52.0" width="4.1" height="4.1" fill="#b4a0a4"/><rect x="66.0" y="52.0" width="4.1" height="4.1" fill="#b09aa0"/><rect x="70.0" y="52.0" width="4.1" height="4.1" fill="#9aa0a0"/><rect x="74.0" y="52.0" width="4.1" height="4.1" fill="#8c7a80"/><rect x="78.0" y="52.0" width="4.1" height="4.1" fill="#a89080"/><rect x="82.0" y="52.0" width="4.1" height="4.1" fill="#b4a0a4"/><rect x="86.0" y="52.0" width="4.1" height="4.1" fill="#a08c94"/><rect x="90.0" y="52.0" width="4.1" height="4.1" fill="#8c7a80"/><rect x="94.0" y="52.0" width="4.1" height="4.1" fill="#9a9090"/><rect x="98.0" y="52.0" width="4.1" height="4.1" fill="#b4a0a4"/><rect x="42.0" y="56.0" width="4.1" height="4.1" fill="#c0a8a8"/><rect x="46.0" y="56.0" width="4.1" height="4.1" fill="#b09aa0"/><rect x="50.0" y="56.0" width="4.1" height="4.1" fill="#786c70"/><rect x="54.0" y="56.0" width="4.1" height="4.1" fill="#7e8a8a"/><rect x="58.0" y="56.0" width="4.1" height="4.1" fill="#a89080"/><rect x="62.0" y="56.0" width="4.1" height="4.1" fill="#b4a0a4"/><rect x="66.0" y="56.0" width="4.1" height="4.1" fill="#a89080"/><rect x="70.0" y="56.0" width="4.1" height="4.1" fill="#8a8490"/><rect x="74.0" y="56.0" width="4.1" height="4.1" fill="#8c7a80"/><rect x="78.0" y="56.0" width="4.1" height="4.1" fill="#8c7a80"/><rect x="82.0" y="56.0" width="4.1" height="4.1" fill="#8a8490"/><rect x="86.0" y="56.0" width="4.1" height="4.1" fill="#8a8490"/><rect x="90.0" y="56.0" width="4.1" height="4.1" fill="#8a8490"/><rect x="94.0" y="56.0" width="4.1" height="4.1" fill="#8a8490"/><rect x="98.0" y="56.0" width="4.1" height="4.1" fill="#7e8a8a"/><rect x="42.0" y="60.0" width="4.1" height="4.1" fill="#8c7a80"/><rect x="46.0" y="60.0" width="4.1" height="4.1" fill="#b09aa0"/><rect x="50.0" y="60.0" width="4.1" height="4.1" fill="#8c7a80"/><rect x="54.0" y="60.0" width="4.1" height="4.1" fill="#a89080"/><rect x="58.0" y="60.0" width="4.1" height="4.1" fill="#7e8a8a"/><rect x="62.0" y="60.0" width="4.1" height="4.1" fill="#8a8490"/><rect x="66.0" y="60.0" width="4.1" height="4.1" fill="#b09aa0"/><rect x="70.0" y="60.0" width="4.1" height="4.1" fill="#9aa0a0"/><rect x="74.0" y="60.0" width="4.1" height="4.1" fill="#a08c94"/><rect x="78.0" y="60.0" width="4.1" height="4.1" fill="#9a9090"/><rect x="82.0" y="60.0" width="4.1" height="4.1" fill="#9aa0a0"/><rect x="86.0" y="60.0" width="4.1" height="4.1" fill="#a89080"/><rect x="90.0" y="60.0" width="4.1" height="4.1" fill="#b09aa0"/><rect x="94.0" y="60.0" width="4.1" height="4.1" fill="#9aa0a0"/><rect x="98.0" y="60.0" width="4.1" height="4.1" fill="#a08c94"/><rect x="42.0" y="64.0" width="4.1" height="4.1" fill="#9aa0a0"/><rect x="46.0" y="64.0" width="4.1" height="4.1" fill="#7e8a8a"/><rect x="50.0" y="64.0" width="4.1" height="4.1" fill="#786c70"/><rect x="54.0" y="64.0" width="4.1" height="4.1" fill="#8c7a80"/><rect x="58.0" y="64.0" width="4.1" height="4.1" fill="#7e8a8a"/><rect x="62.0" y="64.0" width="4.1" height="4.1" fill="#9aa0a0"/><rect x="66.0" y="64.0" width="4.1" height="4.1" fill="#a89080"/><rect x="70.0" y="64.0" width="4.1" height="4.1" fill="#b09aa0"/><rect x="74.0" y="64.0" width="4.1" height="4.1" fill="#a89080"/><rect x="78.0" y="64.0" width="4.1" height="4.1" fill="#9a9090"/><rect x="82.0" y="64.0" width="4.1" height="4.1" fill="#9aa0a0"/><rect x="86.0" y="64.0" width="4.1" height="4.1" fill="#9aa0a0"/><rect x="90.0" y="64.0" width="4.1" height="4.1" fill="#9aa0a0"/><rect x="94.0" y="64.0" width="4.1" height="4.1" fill="#a89080"/><rect x="98.0" y="64.0" width="4.1" height="4.1" fill="#786c70"/><rect x="42.0" y="68.0" width="4.1" height="4.1" fill="#9a9090"/><rect x="46.0" y="68.0" width="4.1" height="4.1" fill="#b4a0a4"/><rect x="50.0" y="68.0" width="4.1" height="4.1" fill="#9a9090"/><rect x="54.0" y="68.0" width="4.1" height="4.1" fill="#9a9090"/><rect x="58.0" y="68.0" width="4.1" height="4.1" fill="#c0a8a8"/><rect x="62.0" y="68.0" width="4.1" height="4.1" fill="#9a9090"/><rect x="66.0" y="68.0" width="4.1" height="4.1" fill="#9a9090"/><rect x="70.0" y="68.0" width="4.1" height="4.1" fill="#9aa0a0"/><rect x="74.0" y="68.0" width="4.1" height="4.1" fill="#8a8490"/><rect x="78.0" y="68.0" width="4.1" height="4.1" fill="#a89080"/><rect x="82.0" y="68.0" width="4.1" height="4.1" fill="#a08c94"/><rect x="86.0" y="68.0" width="4.1" height="4.1" fill="#a08c94"/><rect x="90.0" y="68.0" width="4.1" height="4.1" fill="#7e8a8a"/><rect x="94.0" y="68.0" width="4.1" height="4.1" fill="#8a8490"/><rect x="98.0" y="68.0" width="4.1" height="4.1" fill="#7e8a8a"/><rect x="42.0" y="72.0" width="4.1" height="4.1" fill="#9a9090"/><rect x="46.0" y="72.0" width="4.1" height="4.1" fill="#b4a0a4"/><rect x="50.0" y="72.0" width="4.1" height="4.1" fill="#a89080"/><rect x="54.0" y="72.0" width="4.1" height="4.1" fill="#8a8490"/><rect x="58.0" y="72.0" width="4.1" height="4.1" fill="#a89080"/><rect x="62.0" y="72.0" width="4.1" height="4.1" fill="#a89080"/><rect x="66.0" y="72.0" width="4.1" height="4.1" fill="#8c7a80"/><rect x="70.0" y="72.0" width="4.1" height="4.1" fill="#9a9090"/><rect x="74.0" y="72.0" width="4.1" height="4.1" fill="#8c7a80"/><rect x="78.0" y="72.0" width="4.1" height="4.1" fill="#9a9090"/><rect x="82.0" y="72.0" width="4.1" height="4.1" fill="#8a8490"/><rect x="86.0" y="72.0" width="4.1" height="4.1" fill="#9a9090"/><rect x="90.0" y="72.0" width="4.1" height="4.1" fill="#a89080"/><rect x="94.0" y="72.0" width="4.1" height="4.1" fill="#9a9090"/><rect x="98.0" y="72.0" width="4.1" height="4.1" fill="#8a8490"/><rect x="42.0" y="76.0" width="4.1" height="4.1" fill="#b4a0a4"/><rect x="46.0" y="76.0" width="4.1" height="4.1" fill="#b4a0a4"/><rect x="50.0" y="76.0" width="4.1" height="4.1" fill="#a08c94"/><rect x="54.0" y="76.0" width="4.1" height="4.1" fill="#8a8490"/><rect x="58.0" y="76.0" width="4.1" height="4.1" fill="#786c70"/><rect x="62.0" y="76.0" width="4.1" height="4.1" fill="#a89080"/><rect x="66.0" y="76.0" width="4.1" height="4.1" fill="#786c70"/><rect x="70.0" y="76.0" width="4.1" height="4.1" fill="#8c7a80"/><rect x="74.0" y="76.0" width="4.1" height="4.1" fill="#786c70"/><rect x="78.0" y="76.0" width="4.1" height="4.1" fill="#8c7a80"/><rect x="82.0" y="76.0" width="4.1" height="4.1" fill="#c0a8a8"/><rect x="86.0" y="76.0" width="4.1" height="4.1" fill="#9a9090"/><rect x="90.0" y="76.0" width="4.1" height="4.1" fill="#8a8490"/><rect x="94.0" y="76.0" width="4.1" height="4.1" fill="#b09aa0"/><rect x="98.0" y="76.0" width="4.1" height="4.1" fill="#c0a8a8"/><rect x="42.0" y="80.0" width="4.1" height="4.1" fill="#786c70"/><rect x="46.0" y="80.0" width="4.1" height="4.1" fill="#a89080"/><rect x="50.0" y="80.0" width="4.1" height="4.1" fill="#8c7a80"/><rect x="54.0" y="80.0" width="4.1" height="4.1" fill="#c0a8a8"/><rect x="58.0" y="80.0" width="4.1" height="4.1" fill="#8a8490"/><rect x="62.0" y="80.0" width="4.1" height="4.1" fill="#c0a8a8"/><rect x="66.0" y="80.0" width="4.1" height="4.1" fill="#8c7a80"/><rect x="70.0" y="80.0" width="4.1" height="4.1" fill="#b09aa0"/><rect x="74.0" y="80.0" width="4.1" height="4.1" fill="#b09aa0"/><rect x="78.0" y="80.0" width="4.1" height="4.1" fill="#b09aa0"/><rect x="82.0" y="80.0" width="4.1" height="4.1" fill="#a08c94"/><rect x="86.0" y="80.0" width="4.1" height="4.1" fill="#b09aa0"/><rect x="90.0" y="80.0" width="4.1" height="4.1" fill="#b4a0a4"/><rect x="94.0" y="80.0" width="4.1" height="4.1" fill="#8a8490"/><rect x="98.0" y="80.0" width="4.1" height="4.1" fill="#786c70"/><rect x="42.0" y="84.0" width="4.1" height="4.1" fill="#b09aa0"/><rect x="46.0" y="84.0" width="4.1" height="4.1" fill="#b4a0a4"/><rect x="50.0" y="84.0" width="4.1" height="4.1" fill="#b4a0a4"/><rect x="54.0" y="84.0" width="4.1" height="4.1" fill="#8a8490"/><rect x="58.0" y="84.0" width="4.1" height="4.1" fill="#786c70"/><rect x="62.0" y="84.0" width="4.1" height="4.1" fill="#a89080"/><rect x="66.0" y="84.0" width="4.1" height="4.1" fill="#b09aa0"/><rect x="70.0" y="84.0" width="4.1" height="4.1" fill="#9aa0a0"/><rect x="74.0" y="84.0" width="4.1" height="4.1" fill="#9aa0a0"/><rect x="78.0" y="84.0" width="4.1" height="4.1" fill="#b09aa0"/><rect x="82.0" y="84.0" width="4.1" height="4.1" fill="#a08c94"/><rect x="86.0" y="84.0" width="4.1" height="4.1" fill="#a08c94"/><rect x="90.0" y="84.0" width="4.1" height="4.1" fill="#786c70"/><rect x="94.0" y="84.0" width="4.1" height="4.1" fill="#8c7a80"/><rect x="98.0" y="84.0" width="4.1" height="4.1" fill="#9aa0a0"/><rect x="42.0" y="88.0" width="4.1" height="4.1" fill="#b09aa0"/><rect x="46.0" y="88.0" width="4.1" height="4.1" fill="#c0a8a8"/><rect x="50.0" y="88.0" width="4.1" height="4.1" fill="#9a9090"/><rect x="54.0" y="88.0" width="4.1" height="4.1" fill="#9a9090"/><rect x="58.0" y="88.0" width="4.1" height="4.1" fill="#a08c94"/><rect x="62.0" y="88.0" width="4.1" height="4.1" fill="#7e8a8a"/><rect x="66.0" y="88.0" width="4.1" height="4.1" fill="#9a9090"/><rect x="70.0" y="88.0" width="4.1" height="4.1" fill="#7e8a8a"/><rect x="74.0" y="88.0" width="4.1" height="4.1" fill="#9aa0a0"/><rect x="78.0" y="88.0" width="4.1" height="4.1" fill="#9a9090"/><rect x="82.0" y="88.0" width="4.1" height="4.1" fill="#b4a0a4"/><rect x="86.0" y="88.0" width="4.1" height="4.1" fill="#a89080"/><rect x="90.0" y="88.0" width="4.1" height="4.1" fill="#7e8a8a"/><rect x="94.0" y="88.0" width="4.1" height="4.1" fill="#9aa0a0"/><rect x="98.0" y="88.0" width="4.1" height="4.1" fill="#c0a8a8"/><rect x="42.0" y="92.0" width="4.1" height="4.1" fill="#b09aa0"/><rect x="46.0" y="92.0" width="4.1" height="4.1" fill="#a08c94"/><rect x="50.0" y="92.0" width="4.1" height="4.1" fill="#a89080"/><rect x="54.0" y="92.0" width="4.1" height="4.1" fill="#8a8490"/><rect x="58.0" y="92.0" width="4.1" height="4.1" fill="#786c70"/><rect x="62.0" y="92.0" width="4.1" height="4.1" fill="#b4a0a4"/><rect x="66.0" y="92.0" width="4.1" height="4.1" fill="#9aa0a0"/><rect x="70.0" y="92.0" width="4.1" height="4.1" fill="#c0a8a8"/><rect x="74.0" y="92.0" width="4.1" height="4.1" fill="#9aa0a0"/><rect x="78.0" y="92.0" width="4.1" height="4.1" fill="#b09aa0"/><rect x="82.0" y="92.0" width="4.1" height="4.1" fill="#9aa0a0"/><rect x="86.0" y="92.0" width="4.1" height="4.1" fill="#b09aa0"/><rect x="90.0" y="92.0" width="4.1" height="4.1" fill="#9aa0a0"/><rect x="94.0" y="92.0" width="4.1" height="4.1" fill="#9aa0a0"/><rect x="98.0" y="92.0" width="4.1" height="4.1" fill="#a08c94"/><rect x="42.0" y="96.0" width="4.1" height="4.1" fill="#8a8490"/><rect x="46.0" y="96.0" width="4.1" height="4.1" fill="#b09aa0"/><rect x="50.0" y="96.0" width="4.1" height="4.1" fill="#b4a0a4"/><rect x="54.0" y="96.0" width="4.1" height="4.1" fill="#a08c94"/><rect x="58.0" y="96.0" width="4.1" height="4.1" fill="#b09aa0"/><rect x="62.0" y="96.0" width="4.1" height="4.1" fill="#b09aa0"/><rect x="66.0" y="96.0" width="4.1" height="4.1" fill="#b09aa0"/><rect x="70.0" y="96.0" width="4.1" height="4.1" fill="#8a8490"/><rect x="74.0" y="96.0" width="4.1" height="4.1" fill="#b4a0a4"/><rect x="78.0" y="96.0" width="4.1" height="4.1" fill="#8c7a80"/><rect x="82.0" y="96.0" width="4.1" height="4.1" fill="#9aa0a0"/><rect x="86.0" y="96.0" width="4.1" height="4.1" fill="#a08c94"/><rect x="90.0" y="96.0" width="4.1" height="4.1" fill="#a89080"/><rect x="94.0" y="96.0" width="4.1" height="4.1" fill="#786c70"/><rect x="98.0" y="96.0" width="4.1" height="4.1" fill="#9aa0a0"/><rect x="42.0" y="100.0" width="4.1" height="4.1" fill="#9aa0a0"/><rect x="46.0" y="100.0" width="4.1" height="4.1" fill="#9aa0a0"/><rect x="50.0" y="100.0" width="4.1" height="4.1" fill="#8a8490"/><rect x="54.0" y="100.0" width="4.1" height="4.1" fill="#8c7a80"/><rect x="58.0" y="100.0" width="4.1" height="4.1" fill="#9aa0a0"/><rect x="62.0" y="100.0" width="4.1" height="4.1" fill="#a08c94"/><rect x="66.0" y="100.0" width="4.1" height="4.1" fill="#9a9090"/><rect x="70.0" y="100.0" width="4.1" height="4.1" fill="#9a9090"/><rect x="74.0" y="100.0" width="4.1" height="4.1" fill="#7e8a8a"/><rect x="78.0" y="100.0" width="4.1" height="4.1" fill="#a08c94"/><rect x="82.0" y="100.0" width="4.1" height="4.1" fill="#8c7a80"/><rect x="86.0" y="100.0" width="4.1" height="4.1" fill="#9aa0a0"/><rect x="90.0" y="100.0" width="4.1" height="4.1" fill="#8a8490"/><rect x="94.0" y="100.0" width="4.1" height="4.1" fill="#9aa0a0"/><rect x="98.0" y="100.0" width="4.1" height="4.1" fill="#a08c94"/>
</g></g></svg>
<svg class="abs" style="left:3px;top:389.75px" width="57" height="57" viewBox="0 0 57 57"><circle cx="28.5" cy="28.5" r="14.6" fill="none" stroke="#8bb646" stroke-width="3.6"/><path d="M25.00,21.50 L34.59,28.50 L25.00,35.50Z" fill="#8bb646"/></svg>
<div class="t" style="left:66px;top:388.85px;font-size:11.4px;color:#f2f2f2">1-06 Lavanya Rama Poorna Shadjam Rupak...</div>
<div class="t" style="right:682.5px;top:388.85px;font-size:11.8px;color:#f2f2f2">6.41s</div>
<svg class="abs" style="left:0;top:416.05px;overflow:visible" width="339" height="1"><path d="M65.0,0.0L66.0,-1.3L67.0,-3.6L68.0,-5.6L69.0,-6.9L70.0,-6.7L71.0,-5.9L72.0,-5.8L73.0,-6.2L74.0,-6.5L75.0,-6.2L76.0,-5.9L77.0,-6.4L78.0,-6.7L79.0,-6.2L80.0,-5.8L81.0,-5.6L82.0,-5.0L83.0,-5.4L84.0,-5.9L85.0,-5.7L86.0,-5.5L87.0,-5.3L88.0,-4.9L89.0,-4.7L90.0,-4.5L91.0,-4.9L92.0,-6.0L93.0,-6.6L94.0,-7.2L95.0,-6.3L96.0,-5.5L97.0,-5.6L98.0,-5.8L99.0,-4.7L100.0,-3.6L101.0,-3.5L102.0,-4.2L103.0,-4.3L104.0,-4.4L105.0,-4.9L106.0,-5.4L107.0,-6.1L108.0,-6.8L109.0,-7.4L110.0,-8.1L111.0,-7.7L112.0,-6.8L113.0,-6.4L114.0,-6.1L115.0,-7.3L116.0,-8.5L117.0,-7.5L118.0,-6.5L119.0,-5.6L120.0,-4.7L121.0,-3.6L122.0,-3.0L123.0,-2.9L124.0,-2.8L125.0,-3.9L126.0,-5.1L127.0,-4.7L128.0,-4.3L129.0,-4.9L130.0,-5.5L131.0,-5.6L132.0,-6.0L133.0,-6.6L134.0,-7.1L135.0,-7.8L136.0,-8.5L137.0,-7.0L138.0,-5.5L139.0,-4.8L140.0,-4.1L141.0,-3.6L142.0,-4.1L143.0,-4.8L144.0,-5.5L145.0,-5.8L146.0,-6.0L147.0,-5.8L148.0,-5.6L149.0,-5.2L150.0,-4.8L151.0,-4.5L152.0,-4.4L153.0,-4.0L154.0,-3.6L155.0,-4.2L156.0,-4.9L157.0,-5.2L158.0,-5.5L159.0,-5.6L160.0,-5.8L161.0,-6.4L162.0,-6.3L163.0,-6.3L164.0,-6.3L165.0,-5.9L166.0,-5.5L167.0,-4.6L168.0,-3.7L169.0,-4.1L170.0,-4.5L171.0,-5.1L172.0,-5.7L173.0,-6.1L174.0,-6.5L175.0,-6.3L176.0,-6.1L177.0,-6.9L178.0,-7.8L179.0,-7.2L180.0,-6.7L181.0,-7.1L182.0,-7.3L183.0,-6.1L184.0,-4.9L185.0,-5.0L186.0,-5.0L187.0,-5.0L188.0,-5.1L189.0,-6.5L190.0,-7.9L191.0,-8.0L192.0,-7.4L193.0,-7.9L194.0,-8.3L195.0,-7.7L196.0,-7.0L197.0,-6.9L198.0,-6.8L199.0,-7.1L200.0,-7.4L201.0,-7.6L202.0,-7.0L203.0,-6.2L204.0,-5.4L205.0,-4.7L206.0,-4.0L207.0,-4.8L208.0,-5.6L209.0,-5.3L210.0,-4.9L211.0,-5.1L212.0,-5.5L213.0,-6.0L214.0,-6.5L215.0,-6.0L216.0,-5.6L217.0,-6.1L218.0,-6.6L219.0,-6.7L220.0,-6.9L221.0,-7.1L222.0,-6.8L223.0,-6.9L224.0,-7.0L225.0,-6.0L226.0,-5.0L227.0,-5.3L228.0,-5.5L229.0,-5.1L230.0,-4.6L231.0,-5.2L232.0,-5.8L233.0,-5.1L234.0,-4.5L235.0,-5.1L236.0,-5.8L237.0,-5.2L238.0,-4.7L239.0,-4.9L240.0,-5.2L241.0,-5.1L242.0,-4.9L243.0,-5.2L244.0,-5.6L245.0,-5.4L246.0,-5.2L247.0,-5.8L248.0,-6.4L249.0,-6.3L250.0,-6.2L251.0,-7.0L252.0,-7.1L253.0,-7.8L254.0,-8.5L255.0,-8.0L256.0,-7.4L257.0,-8.1L258.0,-8.9L259.0,-8.4L260.0,-7.9L261.0,-8.2L262.0,-8.1L263.0,-7.6L264.0,-7.2L265.0,-7.1L266.0,-7.1L267.0,-6.8L268.0,-6.5L269.0,-7.0L270.0,-7.5L271.0,-7.0L272.0,-6.0L273.0,-5.4L274.0,-4.8L275.0,-4.3L276.0,-3.7L277.0,-4.0L278.0,-4.4L279.0,-5.3L280.0,-6.3L281.0,-6.2L282.0,-5.7L283.0,-4.6L284.0,-3.6L285.0,-3.3L286.0,-3.0L287.0,-3.8L288.0,-4.7L289.0,-5.1L290.0,-5.4L291.0,-5.5L292.0,-5.1L293.0,-4.5L294.0,-3.9L295.0,-4.1L296.0,-4.3L297.0,-5.1L298.0,-5.8L299.0,-5.5L300.0,-5.2L301.0,-5.2L302.0,-6.2L303.0,-6.2L304.0,-6.2L305.0,-7.6L306.0,-9.0L307.0,-7.5L308.0,-6.1L309.0,-5.4L310.0,-4.8L311.0,-4.9L312.0,-6.6L313.0,-6.2L314.0,-5.8L315.0,-6.6L316.0,-7.4L317.0,-7.2L318.0,-7.0L319.0,-7.8L320.0,-8.7L321.0,-8.3L322.0,-7.4L323.0,-6.7L324.0,-6.0L325.0,-5.7L326.0,-5.5L327.0,-5.3L328.0,-5.2L329.0,-6.2L330.0,-7.3L331.0,-7.4L332.0,-7.7L332.0,0.0L332.0,5.9L331.0,6.2L330.0,7.4L329.0,7.1L328.0,6.7L327.0,7.7L326.0,8.7L325.0,7.4L324.0,6.2L323.0,5.5L322.0,4.9L321.0,4.9L320.0,5.7L319.0,5.6L318.0,5.4L317.0,5.9L316.0,6.4L315.0,5.4L314.0,4.4L313.0,5.1L312.0,5.9L311.0,5.5L310.0,5.8L309.0,5.9L308.0,5.9L307.0,6.0L306.0,6.0L305.0,6.3L304.0,6.6L303.0,7.8L302.0,9.0L301.0,8.7L300.0,7.4L299.0,6.9L298.0,6.4L297.0,5.4L296.0,4.4L295.0,4.1L294.0,3.9L293.0,3.3L292.0,2.7L291.0,3.0L290.0,3.8L289.0,4.9L288.0,6.1L287.0,6.1L286.0,6.1L285.0,6.2L284.0,6.3L283.0,5.1L282.0,4.0L281.0,4.4L280.0,5.1L279.0,4.9L278.0,4.8L277.0,5.0L276.0,5.1L275.0,4.9L274.0,4.7L273.0,5.7L272.0,6.7L271.0,7.1L270.0,7.5L269.0,7.2L268.0,6.9L267.0,7.6L266.0,8.3L265.0,8.2L264.0,8.2L263.0,7.7L262.0,7.3L261.0,7.9L260.0,8.4L259.0,7.6L258.0,6.8L257.0,7.1L256.0,7.4L255.0,6.7L254.0,6.1L253.0,5.8L252.0,5.5L251.0,4.9L250.0,5.6L249.0,5.9L248.0,6.3L247.0,7.0L246.0,7.8L245.0,6.5L244.0,5.2L243.0,5.9L242.0,6.6L241.0,5.4L240.0,4.3L239.0,4.9L238.0,5.5L237.0,5.5L236.0,5.6L235.0,5.2L234.0,4.8L233.0,5.4L232.0,6.0L231.0,7.0L230.0,6.8L229.0,6.8L228.0,6.8L227.0,5.4L226.0,3.9L225.0,5.2L224.0,6.4L223.0,7.2L222.0,8.0L221.0,7.7L220.0,6.5L219.0,7.2L218.0,7.9L217.0,7.3L216.0,6.7L215.0,7.1L214.0,7.5L213.0,7.2L212.0,6.8L211.0,7.7L210.0,8.2L209.0,7.6L208.0,7.0L207.0,6.9L206.0,6.9L205.0,6.8L204.0,6.7L203.0,6.1L202.0,5.5L201.0,5.4L200.0,6.0L199.0,6.1L198.0,6.1L197.0,6.7L196.0,7.4L195.0,7.9L194.0,8.3L193.0,6.9L192.0,5.5L191.0,6.0L190.0,6.5L189.0,6.7L188.0,7.0L187.0,5.7L186.0,4.4L185.0,4.7L184.0,4.9L183.0,5.7L182.0,6.6L181.0,6.6L180.0,6.4L179.0,5.4L178.0,4.5L177.0,4.2L176.0,3.9L175.0,5.0L174.0,6.1L173.0,5.7L172.0,5.3L171.0,6.3L170.0,6.9L169.0,6.4L168.0,5.9L167.0,6.1L166.0,6.4L165.0,6.0L164.0,5.5L163.0,5.4L162.0,5.4L161.0,4.8L160.0,4.1L159.0,4.7L158.0,5.3L157.0,5.3L156.0,5.3L155.0,6.1L154.0,6.9L153.0,6.5L152.0,6.2L151.0,6.0L150.0,5.5L149.0,5.7L148.0,5.8L147.0,6.3L146.0,6.7L145.0,6.5L144.0,6.3L143.0,6.5L142.0,6.7L141.0,6.0L140.0,5.7L139.0,6.1L138.0,6.6L137.0,6.8L136.0,7.0L135.0,7.7L134.0,8.3L133.0,7.8L132.0,7.4L131.0,7.5L130.0,7.3L129.0,5.8L128.0,4.2L127.0,3.4L126.0,2.5L125.0,3.8L124.0,5.0L123.0,5.7L122.0,6.3L121.0,6.5L120.0,6.1L119.0,5.6L118.0,5.2L117.0,4.3L116.0,3.4L115.0,4.0L114.0,4.6L113.0,5.0L112.0,5.3L111.0,6.1L110.0,6.0L109.0,5.9L108.0,5.7L107.0,5.2L106.0,4.7L105.0,5.0L104.0,5.3L103.0,5.7L102.0,6.1L101.0,7.2L100.0,7.4L99.0,7.0L98.0,6.5L97.0,6.5L96.0,6.5L95.0,6.6L94.0,6.6L93.0,6.6L92.0,6.6L91.0,6.2L90.0,5.5L89.0,5.6L88.0,5.6L87.0,6.1L86.0,6.5L85.0,6.1L84.0,5.7L83.0,5.7L82.0,5.8L81.0,5.2L80.0,5.2L79.0,4.9L78.0,4.8L77.0,5.7L76.0,6.6L75.0,7.0L74.0,7.4L73.0,7.5L72.0,7.6L71.0,8.0L70.0,8.2L69.0,7.7L68.0,5.6L67.0,3.3L66.0,1.3Z" fill="#f0f0f0"/></svg>
<div class="abs" style="left:0;top:450.5px;width:339px;height:27.5px;background:#46807a;"></div>
<div class="t" style="top:457.30px;font-size:13.7px;left:3px;color:#f2f2f2">Pista-2</div>
<svg class="abs" style="left:316px;top:455.10px" width="18" height="18" viewBox="0 0 18 18"><circle cx="9.3" cy="9" r="7.6" fill="none" stroke="#e2e6de" stroke-width="1.3"/><path d="M7.55,5.50 L12.35,9.00 L7.55,12.50Z" fill="#e2e6de"/></svg>
<div class="abs" style="left:0;top:478.00px;width:339px;height:64.75px;background:#4bc0b2;"></div>
<div class="abs" style="left:3px;top:482.00px;width:57px;height:57px;background:#333333"></div>
<svg class="abs" style="left:3px;top:482.00px" width="57" height="57" viewBox="0 0 57 57"><circle cx="28.5" cy="28.5" r="14.6" fill="none" stroke="#4bc0b2" stroke-width="3.6"/><path d="M25.00,21.50 L34.59,28.50 L25.00,35.50Z" fill="#4bc0b2"/></svg>
<div class="t" style="left:66px;top:481.10px;font-size:11.7px;color:#f2f2f2">lacrimosa Sergio García Merlo.mp3</div>
<div class="t" style="right:682.5px;top:481.10px;font-size:11.8px;color:#f2f2f2">13.16s</div>
<svg class="abs" style="left:0;top:508.30px;overflow:visible" width="339" height="1"><path d="M65.0,0.0L66.0,-4.4L67.0,-4.4L68.0,-4.2L69.0,-3.7L70.0,-3.8L71.0,-3.9L72.0,-3.7L73.0,-3.8L74.0,-4.1L75.0,-3.8L76.0,-3.4L77.0,-3.2L78.0,-3.2L79.0,-3.4L80.0,-3.5L81.0,-3.2L82.0,-2.8L83.0,-3.0L84.0,-3.2L85.0,-3.5L86.0,-3.7L87.0,-3.7L88.0,-3.8L89.0,-3.9L90.0,-3.9L91.0,-3.9L92.0,-3.7L93.0,-3.2L94.0,-2.9L95.0,-2.9L96.0,-2.6L97.0,-2.4L98.0,-2.1L99.0,-2.4L100.0,-2.5L101.0,-2.4L102.0,-2.5L103.0,-2.2L104.0,-2.1L105.0,-2.3L106.0,-2.7L107.0,-2.9L108.0,-3.3L109.0,-4.2L110.0,-4.5L111.0,-4.2L112.0,-4.1L113.0,-4.0L114.0,-3.8L115.0,-4.4L116.0,-4.9L117.0,-5.0L118.0,-5.1L119.0,-5.2L120.0,-5.2L121.0,-5.0L122.0,-4.8L123.0,-4.7L124.0,-4.6L125.0,-4.3L126.0,-4.6L127.0,-5.0L128.0,-4.3L129.0,-4.2L130.0,-4.5L131.0,-4.0L132.0,-3.7L133.0,-3.8L134.0,-3.7L135.0,-3.7L136.0,-3.4L137.0,-3.1L138.0,-2.9L139.0,-3.1L140.0,-2.9L141.0,-2.6L142.0,-2.5L143.0,-2.5L144.0,-2.9L145.0,-3.1L146.0,-3.3L147.0,-3.2L148.0,-3.0L149.0,-2.9L150.0,-3.1L151.0,-3.4L152.0,-3.5L153.0,-3.3L154.0,-3.1L155.0,-3.0L156.0,-2.9L157.0,-2.9L158.0,-2.7L159.0,-2.6L160.0,-2.5L161.0,-2.5L162.0,-2.4L163.0,-2.3L164.0,-2.2L165.0,-2.4L166.0,-2.2L167.0,-1.8L168.0,-2.0L169.0,-2.1L170.0,-2.2L171.0,-2.6L172.0,-3.0L173.0,-3.1L174.0,-3.4L175.0,-3.7L176.0,-4.3L177.0,-4.5L178.0,-4.5L179.0,-4.3L180.0,-4.2L181.0,-4.5L182.0,-4.5L183.0,-4.2L184.0,-4.2L185.0,-4.2L186.0,-4.0L187.0,-3.6L188.0,-3.4L189.0,-3.7L190.0,-4.1L191.0,-4.7L192.0,-4.9L193.0,-5.1L194.0,-5.4L195.0,-4.8L196.0,-4.6L197.0,-4.7L198.0,-4.5L199.0,-4.7L200.0,-5.0L201.0,-5.2L202.0,-5.4L203.0,-5.1L204.0,-4.6L205.0,-3.8L206.0,-3.3L207.0,-3.6L208.0,-3.9L209.0,-4.2L210.0,-4.6L211.0,-4.6L212.0,-4.5L213.0,-4.4L214.0,-3.8L215.0,-3.8L216.0,-4.2L217.0,-4.5L218.0,-4.7L219.0,-4.8L220.0,-4.6L221.0,-4.2L222.0,-4.2L223.0,-4.1L224.0,-4.2L225.0,-3.9L226.0,-3.4L227.0,-3.7L228.0,-3.9L229.0,-3.8L230.0,-3.7L231.0,-3.7L232.0,-3.9L233.0,-4.1L234.0,-4.4L235.0,-4.2L236.0,-4.4L237.0,-5.1L238.0,-5.0L239.0,-4.4L240.0,-3.9L241.0,-3.8L242.0,-3.9L243.0,-3.5L244.0,-3.6L245.0,-4.3L246.0,-4.4L247.0,-4.0L248.0,-3.5L249.0,-3.4L250.0,-3.4L251.0,-4.0L252.0,-4.2L253.0,-3.7L254.0,-3.8L255.0,-3.9L256.0,-3.7L257.0,-3.7L258.0,-3.9L259.0,-3.6L260.0,-3.6L261.0,-4.1L262.0,-3.9L263.0,-4.0L264.0,-4.7L265.0,-4.7L266.0,-4.3L267.0,-4.1L268.0,-3.8L269.0,-3.4L270.0,-3.1L271.0,-3.2L272.0,-3.3L273.0,-3.6L274.0,-3.9L275.0,-3.8L276.0,-3.8L277.0,-3.8L278.0,-3.5L279.0,-3.6L280.0,-4.3L281.0,-5.0L282.0,-5.7L283.0,-4.9L284.0,-4.3L285.0,-4.0L286.0,-3.6L287.0,-3.6L288.0,-4.1L289.0,-4.1L290.0,-3.8L291.0,-4.0L292.0,-4.2L293.0,-4.4L294.0,-4.3L295.0,-4.1L296.0,-4.2L297.0,-4.4L298.0,-4.7L299.0,-4.2L300.0,-4.0L301.0,-4.1L302.0,-4.2L303.0,-4.2L304.0,-3.6L305.0,-3.4L306.0,-3.6L307.0,-3.9L308.0,-4.1L309.0,-4.2L310.0,-4.4L311.0,-4.7L312.0,-4.9L313.0,-5.0L314.0,-5.0L315.0,-4.6L316.0,-4.5L317.0,-4.6L318.0,-4.8L319.0,-5.3L320.0,-5.0L321.0,-5.0L322.0,-5.4L323.0,-5.2L324.0,-5.2L325.0,-5.6L326.0,-5.1L327.0,-4.7L328.0,-4.8L329.0,-5.1L330.0,-5.4L331.0,-5.5L332.0,-5.4L332.0,0.0L332.0,4.3L331.0,3.8L330.0,3.6L329.0,3.5L328.0,3.6L327.0,4.0L326.0,4.0L325.0,3.8L324.0,3.7L323.0,4.0L322.0,4.4L321.0,4.6L320.0,4.9L319.0,5.4L318.0,6.0L317.0,5.7L316.0,4.7L315.0,4.3L314.0,4.3L313.0,3.9L312.0,3.5L311.0,3.1L310.0,3.2L309.0,3.6L308.0,3.7L307.0,3.7L306.0,3.7L305.0,3.8L304.0,3.9L303.0,3.5L302.0,3.7L301.0,3.8L300.0,3.6L299.0,3.5L298.0,3.3L297.0,3.5L296.0,3.7L295.0,3.9L294.0,4.3L293.0,4.7L292.0,5.2L291.0,5.4L290.0,5.4L289.0,5.1L288.0,5.1L287.0,5.4L286.0,5.0L285.0,4.4L284.0,4.2L283.0,3.9L282.0,3.6L281.0,4.1L280.0,4.2L279.0,3.8L278.0,3.9L277.0,4.6L276.0,4.8L275.0,4.9L274.0,4.9L273.0,4.8L272.0,4.5L271.0,4.0L270.0,3.8L269.0,4.1L268.0,4.1L267.0,4.1L266.0,4.1L265.0,4.8L264.0,5.1L263.0,4.9L262.0,4.9L261.0,4.7L260.0,4.7L259.0,4.7L258.0,4.7L257.0,4.4L256.0,4.2L255.0,4.1L254.0,3.8L253.0,3.7L252.0,3.6L251.0,3.7L250.0,3.9L249.0,3.8L248.0,3.8L247.0,4.0L246.0,4.0L245.0,4.2L244.0,4.6L243.0,4.9L242.0,5.1L241.0,5.0L240.0,4.7L239.0,4.2L238.0,3.9L237.0,3.9L236.0,4.0L235.0,4.0L234.0,3.8L233.0,3.7L232.0,3.6L231.0,3.6L230.0,3.9L229.0,4.2L228.0,4.1L227.0,4.3L226.0,4.5L225.0,4.1L224.0,3.7L223.0,3.2L222.0,2.9L221.0,3.2L220.0,3.8L219.0,4.2L218.0,4.4L217.0,3.9L216.0,3.6L215.0,3.8L214.0,3.5L213.0,3.3L212.0,3.4L211.0,3.8L210.0,4.4L209.0,4.2L208.0,4.1L207.0,4.2L206.0,4.5L205.0,4.5L204.0,4.4L203.0,4.1L202.0,3.5L201.0,4.0L200.0,4.4L199.0,4.4L198.0,4.4L197.0,4.0L196.0,4.0L195.0,3.9L194.0,3.7L193.0,3.8L192.0,3.9L191.0,3.8L190.0,4.0L189.0,4.1L188.0,4.0L187.0,3.8L186.0,3.5L185.0,4.0L184.0,4.2L183.0,4.0L182.0,4.3L181.0,4.2L180.0,4.1L179.0,4.0L178.0,4.1L177.0,3.7L176.0,3.2L175.0,2.7L174.0,2.8L173.0,2.9L172.0,2.6L171.0,2.4L170.0,2.3L169.0,2.1L168.0,2.0L167.0,1.7L166.0,1.6L165.0,1.6L164.0,2.0L163.0,2.3L162.0,2.4L161.0,2.5L160.0,2.5L159.0,2.3L158.0,2.3L157.0,2.4L156.0,2.8L155.0,3.0L154.0,3.0L153.0,2.8L152.0,2.8L151.0,3.1L150.0,2.9L149.0,2.9L148.0,3.4L147.0,3.6L146.0,3.6L145.0,3.2L144.0,2.7L143.0,2.1L142.0,1.8L141.0,2.0L140.0,2.4L139.0,2.9L138.0,3.5L137.0,3.5L136.0,3.7L135.0,4.2L134.0,4.7L133.0,5.3L132.0,5.3L131.0,5.5L130.0,5.9L129.0,5.1L128.0,4.5L127.0,4.4L126.0,4.2L125.0,4.1L124.0,4.1L123.0,4.3L122.0,4.7L121.0,4.3L120.0,4.2L119.0,4.6L118.0,5.0L117.0,5.3L116.0,5.0L115.0,4.8L114.0,4.6L113.0,4.5L112.0,4.5L111.0,4.5L110.0,4.1L109.0,3.7L108.0,3.3L107.0,2.9L106.0,2.6L105.0,2.5L104.0,2.2L103.0,1.9L102.0,1.7L101.0,1.8L100.0,2.1L99.0,2.5L98.0,3.0L97.0,3.0L96.0,2.9L95.0,2.8L94.0,3.3L93.0,3.6L92.0,3.5L91.0,3.3L90.0,3.0L89.0,3.2L88.0,3.4L87.0,3.6L86.0,3.9L85.0,3.6L84.0,3.3L83.0,3.1L82.0,3.0L81.0,2.9L80.0,3.0L79.0,3.1L78.0,3.3L77.0,3.3L76.0,3.8L75.0,4.1L74.0,4.3L73.0,4.0L72.0,3.8L71.0,3.8L70.0,3.4L69.0,3.2L68.0,3.4L67.0,3.5L66.0,3.7Z" fill="#f0f0f0"/></svg>
<div class="abs" style="left:0;top:542.75px;width:339px;height:27.5px;background:#8a6a3e;"></div>
<div class="t" style="top:549.55px;font-size:13.7px;left:3px;color:#f2f2f2">Pista-4</div>
<svg class="abs" style="left:316px;top:547.35px" width="18" height="18" viewBox="0 0 18 18"><circle cx="9.3" cy="9" r="7.6" fill="none" stroke="#e2e6de" stroke-width="1.3"/><path d="M7.55,5.50 L12.35,9.00 L7.55,12.50Z" fill="#e2e6de"/></svg>
<div class="abs" style="left:0;top:570.25px;width:339px;height:64.75px;background:#d5913f;"></div>
<div class="abs" style="left:3px;top:574.25px;width:57px;height:57px;background:#333333"></div>
<svg class="abs" style="left:3px;top:574.25px" width="57" height="57" viewBox="0 0 57 57"><circle cx="28.5" cy="28.5" r="14.6" fill="none" stroke="#d5913f" stroke-width="3.6"/><path d="M25.00,21.50 L34.59,28.50 L25.00,35.50Z" fill="#d5913f"/></svg>
<div class="t" style="left:66px;top:573.35px;font-size:11.7px;color:#f2f2f2">33ESX6038_B5_Muthedukkum.mp3</div>
<div class="t" style="right:682.5px;top:573.35px;font-size:11.8px;color:#f2f2f2">2.71s</div>
<svg class="abs" style="left:0;top:600.55px;overflow:visible" width="339" height="1"><path d="M65.0,0.0L66.0,-1.3L67.0,-1.3L68.0,-1.3L69.0,-1.3L70.0,-1.4L71.0,-1.6L72.0,-1.8L73.0,-1.9L74.0,-1.8L75.0,-1.8L76.0,-1.9L77.0,-1.9L78.0,-2.1L79.0,-2.1L80.0,-2.0L81.0,-1.8L82.0,-1.8L83.0,-1.7L84.0,-1.7L85.0,-1.9L86.0,-2.0L87.0,-2.0L88.0,-1.9L89.0,-1.8L90.0,-1.7L91.0,-1.6L92.0,-1.5L93.0,-1.6L94.0,-1.7L95.0,-1.8L96.0,-1.8L97.0,-1.8L98.0,-1.8L99.0,-1.7L100.0,-1.8L101.0,-1.9L102.0,-2.0L103.0,-1.9L104.0,-1.8L105.0,-1.7L106.0,-1.7L107.0,-1.7L108.0,-1.7L109.0,-1.7L110.0,-1.9L111.0,-2.0L112.0,-1.9L113.0,-1.7L114.0,-1.6L115.0,-1.7L116.0,-1.7L117.0,-1.8L118.0,-1.7L119.0,-1.7L120.0,-2.0L121.0,-2.3L122.0,-2.6L123.0,-2.9L124.0,-3.2L125.0,-3.6L126.0,-3.2L127.0,-2.8L128.0,-2.7L129.0,-2.5L130.0,-2.2L131.0,-2.2L132.0,-2.2L133.0,-2.3L134.0,-2.3L135.0,-2.3L136.0,-2.4L137.0,-2.4L138.0,-2.2L139.0,-2.1L140.0,-1.9L141.0,-1.8L142.0,-1.8L143.0,-1.8L144.0,-2.2L145.0,-2.3L146.0,-2.2L147.0,-2.2L148.0,-2.2L149.0,-2.3L150.0,-2.2L151.0,-2.1L152.0,-2.2L153.0,-2.2L154.0,-2.3L155.0,-2.2L156.0,-2.2L157.0,-2.2L158.0,-2.2L159.0,-2.3L160.0,-2.0L161.0,-1.9L162.0,-1.8L163.0,-2.0L164.0,-2.0L165.0,-2.0L166.0,-1.9L167.0,-1.9L168.0,-2.0L169.0,-2.2L170.0,-2.3L171.0,-2.2L172.0,-2.2L173.0,-2.4L174.0,-2.6L175.0,-2.7L176.0,-2.8L177.0,-2.9L178.0,-2.8L179.0,-2.7L180.0,-2.4L181.0,-1.9L182.0,-2.0L183.0,-2.1L184.0,-1.9L185.0,-1.9L186.0,-2.0L187.0,-2.0L188.0,-1.9L189.0,-1.8L190.0,-2.0L191.0,-2.1L192.0,-2.0L193.0,-2.0L194.0,-1.9L195.0,-2.0L196.0,-2.0L197.0,-2.0L198.0,-2.0L199.0,-2.1L200.0,-2.2L201.0,-2.3L202.0,-2.2L203.0,-2.0L204.0,-1.9L205.0,-2.0L206.0,-2.0L207.0,-1.9L208.0,-1.9L209.0,-1.8L210.0,-1.6L211.0,-1.6L212.0,-1.6L213.0,-1.7L214.0,-1.8L215.0,-2.0L216.0,-1.7L217.0,-1.6L218.0,-1.6L219.0,-1.8L220.0,-1.8L221.0,-1.8L222.0,-1.8L223.0,-1.8L224.0,-2.0L225.0,-2.0L226.0,-1.8L227.0,-1.9L228.0,-2.0L229.0,-2.1L230.0,-2.0L231.0,-2.0L232.0,-1.9L233.0,-1.8L234.0,-1.7L235.0,-1.7L236.0,-1.8L237.0,-1.9L238.0,-1.9L239.0,-1.9L240.0,-2.0L241.0,-2.0L242.0,-2.0L243.0,-2.1L244.0,-2.1L245.0,-2.0L246.0,-1.9L247.0,-1.9L248.0,-2.0L249.0,-2.1L250.0,-2.2L251.0,-2.1L252.0,-2.0L253.0,-2.1L254.0,-2.3L255.0,-2.4L256.0,-2.2L257.0,-2.2L258.0,-2.3L259.0,-2.3L260.0,-2.4L261.0,-2.6L262.0,-2.6L263.0,-2.6L264.0,-2.5L265.0,-2.3L266.0,-2.2L267.0,-2.4L268.0,-2.4L269.0,-2.2L270.0,-2.1L271.0,-2.1L272.0,-1.9L273.0,-1.9L274.0,-2.2L275.0,-2.4L276.0,-2.6L277.0,-2.5L278.0,-2.7L279.0,-3.0L280.0,-3.1L281.0,-3.2L282.0,-3.3L283.0,-3.6L284.0,-3.9L285.0,-3.9L286.0,-4.0L287.0,-4.1L288.0,-4.0L289.0,-4.0L290.0,-3.8L291.0,-4.0L292.0,-4.1L293.0,-3.8L294.0,-3.9L295.0,-4.0L296.0,-3.8L297.0,-3.6L298.0,-3.3L299.0,-3.3L300.0,-3.1L301.0,-2.8L302.0,-2.4L303.0,-2.1L304.0,-1.9L305.0,-1.8L306.0,-1.8L307.0,-1.9L308.0,-1.9L309.0,-1.7L310.0,-1.8L311.0,-1.9L312.0,-1.9L313.0,-2.1L314.0,-2.0L315.0,-2.0L316.0,-1.9L317.0,-1.8L318.0,-1.9L319.0,-2.0L320.0,-2.0L321.0,-2.1L322.0,-2.2L323.0,-2.1L324.0,-2.0L325.0,-1.9L326.0,-1.9L327.0,-1.8L328.0,-1.7L329.0,-1.8L330.0,-1.9L331.0,-1.8L332.0,-1.9L332.0,0.0L332.0,1.9L331.0,1.9L330.0,1.7L329.0,1.8L328.0,1.9L327.0,1.8L326.0,1.8L325.0,1.9L324.0,1.8L323.0,1.8L322.0,1.7L321.0,2.0L320.0,2.1L319.0,2.0L318.0,2.1L317.0,2.2L316.0,1.9L315.0,1.8L314.0,1.9L313.0,1.8L312.0,1.9L311.0,2.2L310.0,2.1L309.0,2.0L308.0,2.2L307.0,2.2L306.0,2.2L305.0,2.4L304.0,2.6L303.0,2.8L302.0,2.8L301.0,2.8L300.0,3.7L299.0,3.8L298.0,3.8L297.0,3.6L296.0,3.6L295.0,3.8L294.0,3.6L293.0,3.4L292.0,3.2L291.0,3.0L290.0,2.9L289.0,3.1L288.0,3.4L287.0,3.8L286.0,3.8L285.0,3.7L284.0,3.9L283.0,4.0L282.0,4.0L281.0,3.7L280.0,3.6L279.0,3.6L278.0,3.7L277.0,3.5L276.0,2.7L275.0,2.2L274.0,2.0L273.0,2.1L272.0,2.2L271.0,2.2L270.0,2.2L269.0,2.3L268.0,2.4L267.0,2.5L266.0,2.4L265.0,2.5L264.0,2.6L263.0,2.4L262.0,2.5L261.0,2.6L260.0,2.6L259.0,2.8L258.0,3.0L257.0,2.6L256.0,2.3L255.0,1.9L254.0,1.8L253.0,1.7L252.0,1.7L251.0,1.8L250.0,2.1L249.0,1.9L248.0,1.8L247.0,1.6L246.0,1.5L245.0,1.5L244.0,1.6L243.0,1.6L242.0,1.6L241.0,1.6L240.0,1.6L239.0,1.6L238.0,1.7L237.0,1.8L236.0,1.8L235.0,1.8L234.0,1.8L233.0,1.8L232.0,1.9L231.0,2.0L230.0,2.0L229.0,1.9L228.0,2.0L227.0,2.0L226.0,2.0L225.0,2.0L224.0,2.0L223.0,2.1L222.0,2.0L221.0,1.9L220.0,1.9L219.0,2.0L218.0,2.0L217.0,1.8L216.0,1.6L215.0,1.6L214.0,1.6L213.0,1.7L212.0,1.8L211.0,1.8L210.0,1.7L209.0,1.8L208.0,1.9L207.0,1.9L206.0,2.0L205.0,2.1L204.0,2.1L203.0,2.0L202.0,2.0L201.0,2.0L200.0,1.8L199.0,1.6L198.0,1.5L197.0,1.6L196.0,1.6L195.0,1.5L194.0,1.4L193.0,1.5L192.0,1.7L191.0,1.8L190.0,1.9L189.0,1.9L188.0,1.7L187.0,1.7L186.0,1.9L185.0,2.0L184.0,2.2L183.0,2.5L182.0,2.6L181.0,2.7L180.0,2.8L179.0,2.9L178.0,2.8L177.0,2.9L176.0,2.7L175.0,2.6L174.0,2.4L173.0,2.2L172.0,2.3L171.0,2.3L170.0,2.1L169.0,2.0L168.0,1.9L167.0,1.8L166.0,1.8L165.0,1.8L164.0,1.9L163.0,2.0L162.0,2.1L161.0,2.1L160.0,2.0L159.0,1.9L158.0,1.8L157.0,1.9L156.0,2.0L155.0,2.1L154.0,2.1L153.0,2.2L152.0,2.2L151.0,2.0L150.0,2.1L149.0,2.2L148.0,2.0L147.0,1.9L146.0,1.9L145.0,2.0L144.0,2.0L143.0,1.9L142.0,1.8L141.0,1.7L140.0,1.7L139.0,1.8L138.0,2.0L137.0,2.0L136.0,2.1L135.0,2.1L134.0,2.2L133.0,2.1L132.0,2.2L131.0,2.1L130.0,1.9L129.0,2.4L128.0,2.8L127.0,2.9L126.0,3.1L125.0,3.2L124.0,3.0L123.0,2.7L122.0,2.4L121.0,2.3L120.0,2.2L119.0,2.0L118.0,2.0L117.0,2.0L116.0,1.9L115.0,1.7L114.0,1.6L113.0,1.7L112.0,1.8L111.0,1.9L110.0,1.9L109.0,1.9L108.0,1.9L107.0,1.9L106.0,1.9L105.0,2.0L104.0,2.0L103.0,2.1L102.0,2.0L101.0,1.8L100.0,1.8L99.0,1.6L98.0,1.4L97.0,1.6L96.0,1.8L95.0,1.8L94.0,1.8L93.0,1.9L92.0,1.9L91.0,2.0L90.0,2.1L89.0,1.9L88.0,1.7L87.0,1.6L86.0,1.6L85.0,1.7L84.0,1.7L83.0,1.7L82.0,1.8L81.0,1.7L80.0,1.8L79.0,2.1L78.0,2.1L77.0,2.0L76.0,2.0L75.0,1.9L74.0,1.9L73.0,1.7L72.0,1.7L71.0,1.6L70.0,1.5L69.0,1.3L68.0,1.3L67.0,1.3L66.0,1.3Z" fill="#f0f0f0"/></svg>
<div class="abs" style="left:0;top:635.0px;width:339px;height:27.5px;background:#955a5e;"></div>
<div class="t" style="top:641.80px;font-size:13.7px;left:3px;color:#f2f2f2">Pista-5</div>
<svg class="abs" style="left:316px;top:639.60px" width="18" height="18" viewBox="0 0 18 18"><circle cx="9.3" cy="9" r="7.6" fill="none" stroke="#e2e6de" stroke-width="1.3"/><path d="M7.55,5.50 L12.35,9.00 L7.55,12.50Z" fill="#e2e6de"/></svg>
<div class="abs" style="left:0;top:662.50px;width:339px;height:64.75px;background:#e5747b;"></div>
<div class="abs" style="left:3px;top:666.50px;width:57px;height:57px;background:#333333"></div>
<svg class="abs" style="left:3px;top:666.50px" width="57" height="57" viewBox="0 0 57 57"><circle cx="28.5" cy="28.5" r="11" fill="none" stroke="#6a6a6a" stroke-width="3.5"/><path d="M31,39.2 A11,11 0 0 1 19.5,22" fill="none" stroke="#cfcfcf" stroke-width="3.5"/></svg>
<div class="t" style="left:66px;top:665.60px;font-size:11.7px;color:#f2f2f2">01 Raga Kedar.mp3</div>
<div class="t" style="right:682.5px;top:665.60px;font-size:11.8px;color:#f2f2f2">27.24s</div>
<svg class="abs" style="left:0;top:692.80px;overflow:visible" width="339" height="1"><path d="M65.0,0.0L66.0,-1.3L67.0,-1.4L68.0,-1.5L69.0,-1.6L70.0,-1.5L71.0,-1.3L72.0,-1.3L73.0,-1.5L74.0,-1.8L75.0,-2.2L76.0,-2.3L77.0,-2.2L78.0,-1.8L79.0,-1.7L80.0,-1.6L81.0,-1.4L82.0,-1.4L83.0,-1.9L84.0,-2.2L85.0,-1.9L86.0,-1.9L87.0,-2.0L88.0,-1.9L89.0,-1.4L90.0,-1.4L91.0,-1.6L92.0,-1.9L93.0,-2.0L94.0,-2.0L95.0,-2.0L96.0,-1.8L97.0,-1.7L98.0,-1.7L99.0,-1.9L100.0,-2.0L101.0,-1.9L102.0,-1.8L103.0,-1.9L104.0,-2.0L105.0,-2.0L106.0,-2.0L107.0,-1.9L108.0,-2.0L109.0,-1.7L110.0,-1.7L111.0,-1.7L112.0,-1.8L113.0,-1.9L114.0,-2.0L115.0,-2.0L116.0,-1.6L117.0,-1.4L118.0,-1.5L119.0,-1.7L120.0,-1.4L121.0,-1.5L122.0,-1.8L123.0,-1.7L124.0,-1.6L125.0,-1.8L126.0,-1.6L127.0,-1.5L128.0,-1.6L129.0,-1.6L130.0,-1.7L131.0,-2.0L132.0,-1.9L133.0,-1.8L134.0,-1.4L135.0,-1.3L136.0,-1.4L137.0,-1.6L138.0,-1.7L139.0,-1.3L140.0,-1.3L141.0,-1.3L142.0,-1.3L143.0,-1.5L144.0,-1.5L145.0,-1.3L146.0,-1.3L147.0,-1.3L148.0,-1.3L149.0,-1.3L150.0,-1.3L151.0,-1.3L152.0,-1.3L153.0,-1.4L154.0,-1.5L155.0,-1.4L156.0,-1.4L157.0,-1.3L158.0,-1.3L159.0,-1.3L160.0,-1.3L161.0,-1.3L162.0,-1.4L163.0,-1.5L164.0,-1.4L165.0,-1.5L166.0,-1.5L167.0,-1.3L168.0,-1.6L169.0,-1.3L170.0,-1.4L171.0,-1.3L172.0,-1.3L173.0,-1.3L174.0,-1.3L175.0,-1.3L176.0,-1.4L177.0,-1.4L178.0,-1.4L179.0,-1.3L180.0,-1.3L181.0,-1.3L182.0,-1.6L183.0,-1.6L184.0,-1.6L185.0,-1.7L186.0,-1.8L187.0,-1.9L188.0,-1.7L189.0,-1.6L190.0,-1.5L191.0,-1.5L192.0,-1.3L193.0,-1.4L194.0,-1.4L195.0,-1.4L196.0,-1.5L197.0,-1.7L198.0,-1.6L199.0,-1.6L200.0,-2.3L201.0,-2.5L202.0,-2.5L203.0,-3.1L204.0,-3.0L205.0,-3.0L206.0,-3.2L207.0,-3.2L208.0,-3.1L209.0,-3.2L210.0,-3.2L211.0,-3.1L212.0,-2.9L213.0,-2.8L214.0,-2.6L215.0,-2.4L216.0,-2.5L217.0,-2.4L218.0,-2.1L219.0,-1.9L220.0,-2.0L221.0,-2.4L222.0,-2.1L223.0,-1.9L224.0,-1.4L225.0,-1.3L226.0,-1.4L227.0,-1.6L228.0,-1.6L229.0,-1.6L230.0,-1.5L231.0,-1.3L232.0,-1.3L233.0,-1.3L234.0,-1.4L235.0,-1.7L236.0,-1.8L237.0,-1.9L238.0,-1.9L239.0,-1.7L240.0,-1.7L241.0,-1.3L242.0,-1.3L243.0,-1.3L244.0,-1.3L245.0,-1.3L246.0,-1.6L247.0,-1.7L248.0,-1.5L249.0,-1.5L250.0,-1.6L251.0,-1.4L252.0,-1.4L253.0,-1.3L254.0,-1.3L255.0,-1.3L256.0,-1.3L257.0,-1.3L258.0,-1.3L259.0,-1.3L260.0,-1.4L261.0,-1.4L262.0,-1.4L263.0,-1.5L264.0,-1.5L265.0,-1.3L266.0,-1.3L267.0,-1.3L268.0,-1.3L269.0,-1.4L270.0,-1.3L271.0,-1.5L272.0,-1.3L273.0,-1.3L274.0,-1.6L275.0,-2.3L276.0,-2.7L277.0,-2.6L278.0,-2.5L279.0,-2.3L280.0,-2.3L281.0,-2.8L282.0,-3.4L283.0,-2.9L284.0,-3.2L285.0,-3.0L286.0,-2.6L287.0,-2.2L288.0,-2.3L289.0,-1.9L290.0,-2.2L291.0,-2.1L292.0,-1.9L293.0,-2.3L294.0,-2.4L295.0,-2.5L296.0,-3.0L297.0,-3.6L298.0,-3.8L299.0,-3.3L300.0,-3.3L301.0,-3.4L302.0,-3.0L303.0,-2.8L304.0,-3.3L305.0,-4.1L306.0,-4.6L307.0,-4.0L308.0,-3.8L309.0,-3.6L310.0,-4.0L311.0,-4.8L312.0,-4.5L313.0,-4.0L314.0,-3.6L315.0,-3.6L316.0,-3.7L317.0,-3.2L318.0,-3.0L319.0,-3.3L320.0,-3.1L321.0,-3.2L322.0,-3.6L323.0,-4.4L324.0,-3.9L325.0,-4.1L326.0,-3.6L327.0,-3.3L328.0,-3.4L329.0,-4.0L330.0,-3.0L331.0,-3.3L332.0,-2.3L332.0,0.0L332.0,3.2L331.0,3.3L330.0,3.3L329.0,3.9L328.0,3.6L327.0,3.6L326.0,3.5L325.0,3.3L324.0,3.3L323.0,3.9L322.0,3.6L321.0,3.6L320.0,4.0L319.0,4.6L318.0,5.4L317.0,4.3L316.0,3.6L315.0,3.7L314.0,3.8L313.0,2.9L312.0,3.3L311.0,4.1L310.0,4.7L309.0,4.8L308.0,4.5L307.0,4.6L306.0,5.3L305.0,4.7L304.0,3.9L303.0,3.1L302.0,3.0L301.0,3.5L300.0,3.7L299.0,4.2L298.0,3.7L297.0,3.5L296.0,3.2L295.0,2.8L294.0,2.7L293.0,2.0L292.0,2.0L291.0,1.8L290.0,1.9L289.0,2.5L288.0,2.7L287.0,3.2L286.0,3.0L285.0,3.1L284.0,3.4L283.0,3.4L282.0,3.8L281.0,3.4L280.0,3.3L279.0,3.6L278.0,3.4L277.0,2.5L276.0,1.6L275.0,1.5L274.0,1.3L273.0,1.3L272.0,1.3L271.0,1.3L270.0,1.3L269.0,1.3L268.0,1.3L267.0,1.3L266.0,1.3L265.0,1.3L264.0,1.3L263.0,1.3L262.0,1.3L261.0,1.3L260.0,1.3L259.0,1.4L258.0,1.5L257.0,1.5L256.0,1.3L255.0,1.3L254.0,1.3L253.0,1.3L252.0,1.5L251.0,1.5L250.0,1.6L249.0,1.5L248.0,1.3L247.0,1.3L246.0,1.3L245.0,1.3L244.0,1.3L243.0,1.5L242.0,1.5L241.0,1.3L240.0,1.3L239.0,1.3L238.0,1.4L237.0,1.4L236.0,1.6L235.0,1.8L234.0,1.7L233.0,1.6L232.0,1.7L231.0,1.5L230.0,1.5L229.0,1.5L228.0,1.6L227.0,1.7L226.0,1.5L225.0,1.7L224.0,1.8L223.0,1.5L222.0,1.7L221.0,1.9L220.0,2.2L219.0,2.3L218.0,2.4L217.0,2.5L216.0,2.0L215.0,2.6L214.0,2.4L213.0,2.3L212.0,2.5L211.0,3.1L210.0,3.3L209.0,2.7L208.0,2.4L207.0,2.3L206.0,2.5L205.0,2.4L204.0,2.8L203.0,2.5L202.0,2.8L201.0,2.6L200.0,2.3L199.0,2.2L198.0,1.8L197.0,1.8L196.0,1.5L195.0,1.5L194.0,1.7L193.0,1.9L192.0,2.0L191.0,1.8L190.0,1.6L189.0,1.4L188.0,1.4L187.0,1.6L186.0,2.0L185.0,2.1L184.0,1.9L183.0,1.7L182.0,1.7L181.0,1.7L180.0,1.5L179.0,1.5L178.0,1.6L177.0,1.8L176.0,1.8L175.0,1.5L174.0,1.3L173.0,1.6L172.0,1.8L171.0,1.9L170.0,1.6L169.0,1.3L168.0,1.3L167.0,1.3L166.0,1.3L165.0,1.4L164.0,1.5L163.0,1.5L162.0,1.8L161.0,1.4L160.0,1.5L159.0,1.4L158.0,1.3L157.0,1.3L156.0,1.3L155.0,1.4L154.0,1.3L153.0,1.3L152.0,1.4L151.0,1.5L150.0,1.6L149.0,1.4L148.0,1.3L147.0,1.3L146.0,1.3L145.0,1.4L144.0,1.5L143.0,1.4L142.0,1.3L141.0,1.3L140.0,1.3L139.0,1.4L138.0,1.6L137.0,1.6L136.0,1.3L135.0,1.3L134.0,1.5L133.0,1.8L132.0,2.0L131.0,1.8L130.0,2.0L129.0,2.0L128.0,2.0L127.0,2.0L126.0,1.7L125.0,2.1L124.0,1.9L123.0,1.7L122.0,1.7L121.0,1.9L120.0,1.7L119.0,1.3L118.0,1.4L117.0,1.4L116.0,1.6L115.0,2.2L114.0,2.3L113.0,1.9L112.0,1.7L111.0,1.9L110.0,2.1L109.0,2.1L108.0,2.2L107.0,1.9L106.0,2.0L105.0,2.1L104.0,2.2L103.0,2.3L102.0,1.8L101.0,2.1L100.0,1.9L99.0,1.6L98.0,1.6L97.0,2.0L96.0,2.1L95.0,2.1L94.0,2.2L93.0,2.1L92.0,1.9L91.0,1.6L90.0,1.6L89.0,1.6L88.0,1.9L87.0,1.9L86.0,1.8L85.0,1.7L84.0,1.8L83.0,1.6L82.0,1.6L81.0,1.5L80.0,1.5L79.0,1.6L78.0,1.7L77.0,1.7L76.0,1.6L75.0,1.4L74.0,1.4L73.0,1.5L72.0,1.3L71.0,1.3L70.0,1.3L69.0,1.3L68.0,1.3L67.0,1.3L66.0,1.3Z" fill="#f0f0f0"/></svg>
<div class="abs" style="left:0;top:727.25px;width:339px;height:27.5px;background:#826377;"></div>
<div class="t" style="top:734.05px;font-size:13.7px;left:3px;color:#f2f2f2">base</div>
<svg class="abs" style="left:316px;top:731.85px" width="18" height="18" viewBox="0 0 18 18"><circle cx="9.3" cy="9" r="7.6" fill="none" stroke="#e2e6de" stroke-width="1.3"/><path d="M7.55,5.50 L12.35,9.00 L7.55,12.50Z" fill="#e2e6de"/></svg>
<div class="abs" style="left:0;top:754.75px;width:339px;height:64.75px;background:#c185a8;"></div>
<div class="abs" style="left:3px;top:758.75px;width:57px;height:57px;background:#333333"></div>
<svg class="abs" style="left:3px;top:758.75px" width="57" height="57" viewBox="0 0 57 57"><circle cx="28.5" cy="28.5" r="14.6" fill="none" stroke="#c185a8" stroke-width="3.6"/><path d="M25.00,21.50 L34.59,28.50 L25.00,35.50Z" fill="#c185a8"/></svg>
<div class="t" style="left:66px;top:757.85px;font-size:11.7px;color:#f2f2f2">Taconeo de Sara Baras (128 kbps).mp3</div>
<div class="t" style="right:682.5px;top:757.85px;font-size:11.8px;color:#f2f2f2">10s</div>
<svg class="abs" style="left:0;top:785.05px;overflow:visible" width="339" height="1"><path d="M65.0,0.0L66.0,-1.3L67.0,-1.3L68.0,-1.8L69.0,-2.7L70.0,-3.9L71.0,-4.1L72.0,-4.6L73.0,-4.7L74.0,-4.7L75.0,-5.5L76.0,-6.4L77.0,-6.3L78.0,-7.0L79.0,-8.7L80.0,-9.3L81.0,-7.5L82.0,-6.2L83.0,-5.0L84.0,-4.1L85.0,-4.8L86.0,-5.0L87.0,-5.3L88.0,-5.9L89.0,-6.6L90.0,-5.9L91.0,-4.8L92.0,-3.8L93.0,-3.4L94.0,-3.0L95.0,-2.8L96.0,-3.0L97.0,-3.4L98.0,-3.5L99.0,-3.9L100.0,-4.2L101.0,-3.4L102.0,-3.3L103.0,-2.8L104.0,-2.7L105.0,-2.8L106.0,-2.9L107.0,-2.9L108.0,-2.3L109.0,-2.7L110.0,-2.7L111.0,-2.7L112.0,-3.0L113.0,-3.2L114.0,-3.0L115.0,-3.0L116.0,-2.7L117.0,-2.8L118.0,-2.8L119.0,-3.0L120.0,-3.9L121.0,-4.0L122.0,-4.7L123.0,-4.3L124.0,-3.9L125.0,-4.7L126.0,-4.7L127.0,-4.6L128.0,-5.0L129.0,-4.6L130.0,-3.9L131.0,-4.1L132.0,-4.6L133.0,-4.5L134.0,-5.4L135.0,-5.0L136.0,-4.3L137.0,-3.7L138.0,-4.6L139.0,-7.3L140.0,-10.3L141.0,-9.6L142.0,-7.9L143.0,-7.3L144.0,-5.9L145.0,-4.7L146.0,-3.4L147.0,-4.4L148.0,-5.8L149.0,-6.7L150.0,-7.5L151.0,-9.4L152.0,-8.4L153.0,-7.3L154.0,-7.0L155.0,-6.6L156.0,-5.1L157.0,-5.7L158.0,-7.0L159.0,-7.7L160.0,-7.9L161.0,-8.1L162.0,-8.6L163.0,-8.2L164.0,-8.1L165.0,-6.6L166.0,-5.5L167.0,-5.8L168.0,-6.3L169.0,-8.9L170.0,-10.5L171.0,-10.2L172.0,-9.7L173.0,-9.3L174.0,-8.5L175.0,-8.1L176.0,-6.0L177.0,-4.6L178.0,-3.9L179.0,-3.9L180.0,-4.5L181.0,-3.8L182.0,-3.5L183.0,-3.7L184.0,-4.0L185.0,-4.3L186.0,-4.1L187.0,-4.4L188.0,-4.0L189.0,-4.6L190.0,-5.7L191.0,-6.1L192.0,-7.6L193.0,-6.4L194.0,-5.3L195.0,-7.0L196.0,-8.4L197.0,-8.7L198.0,-9.7L199.0,-9.3L200.0,-10.2L201.0,-11.7L202.0,-11.3L203.0,-9.4L204.0,-6.8L205.0,-6.0L206.0,-5.5L207.0,-5.4L208.0,-4.8L209.0,-4.2L210.0,-4.0L211.0,-4.7L212.0,-4.4L213.0,-4.1L214.0,-4.1L215.0,-4.3L216.0,-4.3L217.0,-4.0L218.0,-4.2L219.0,-4.0L220.0,-3.7L221.0,-3.9L222.0,-4.3L223.0,-3.6L224.0,-3.3L225.0,-2.9L226.0,-2.5L227.0,-2.2L228.0,-1.6L229.0,-1.3L230.0,-1.3L231.0,-1.5L232.0,-1.7L233.0,-1.7L234.0,-2.0L235.0,-1.7L236.0,-1.6L237.0,-1.6L238.0,-1.5L239.0,-1.3L240.0,-1.3L241.0,-1.3L242.0,-1.3L243.0,-1.3L244.0,-1.3L245.0,-1.3L246.0,-1.3L247.0,-1.3L248.0,-1.3L249.0,-1.3L250.0,-1.4L251.0,-1.5L252.0,-1.5L253.0,-1.6L254.0,-1.7L255.0,-1.5L256.0,-1.3L257.0,-1.3L258.0,-1.3L259.0,-1.5L260.0,-1.7L261.0,-1.6L262.0,-1.6L263.0,-1.5L264.0,-1.3L265.0,-1.6L266.0,-1.6L267.0,-1.5L268.0,-1.3L269.0,-1.3L270.0,-1.3L271.0,-1.4L272.0,-1.4L273.0,-1.3L274.0,-1.3L275.0,-1.3L276.0,-1.7L277.0,-1.8L278.0,-1.8L279.0,-1.7L280.0,-1.6L281.0,-1.5L282.0,-1.3L283.0,-1.3L284.0,-1.6L285.0,-1.3L286.0,-1.3L287.0,-1.4L288.0,-1.7L289.0,-1.4L290.0,-1.3L291.0,-1.4L292.0,-1.5L293.0,-1.3L294.0,-1.3L295.0,-1.4L296.0,-1.6L297.0,-1.6L298.0,-1.6L299.0,-1.5L300.0,-1.4L301.0,-1.6L302.0,-1.8L303.0,-1.7L304.0,-1.6L305.0,-1.3L306.0,-1.3L307.0,-1.3L308.0,-1.5L309.0,-1.5L310.0,-1.5L311.0,-1.3L312.0,-1.3L313.0,-1.5L314.0,-1.6L315.0,-1.3L316.0,-1.3L317.0,-1.3L318.0,-1.3L319.0,-1.3L320.0,-1.3L321.0,-1.3L322.0,-1.3L323.0,-1.3L324.0,-1.6L325.0,-1.7L326.0,-1.5L327.0,-1.3L328.0,-1.3L329.0,-1.3L330.0,-1.3L331.0,-1.3L332.0,-1.3L332.0,0.0L332.0,1.4L331.0,1.3L330.0,1.3L329.0,1.4L328.0,1.5L327.0,1.3L326.0,1.3L325.0,1.4L324.0,1.3L323.0,1.3L322.0,1.3L321.0,1.5L320.0,1.7L319.0,1.3L318.0,1.3L317.0,1.4L316.0,1.6L315.0,1.4L314.0,1.3L313.0,1.3L312.0,1.3L311.0,1.4L310.0,1.7L309.0,1.4L308.0,1.3L307.0,1.3L306.0,1.5L305.0,1.5L304.0,1.7L303.0,1.5L302.0,1.3L301.0,1.5L300.0,1.7L299.0,1.6L298.0,1.7L297.0,1.5L296.0,1.3L295.0,1.3L294.0,1.3L293.0,1.3L292.0,1.6L291.0,1.6L290.0,1.4L289.0,1.3L288.0,1.3L287.0,1.5L286.0,1.5L285.0,1.4L284.0,1.3L283.0,1.3L282.0,1.3L281.0,1.3L280.0,1.4L279.0,1.3L278.0,1.3L277.0,1.4L276.0,1.5L275.0,1.6L274.0,1.8L273.0,1.5L272.0,1.3L271.0,1.4L270.0,1.8L269.0,1.9L268.0,1.7L267.0,1.6L266.0,1.6L265.0,1.3L264.0,1.3L263.0,1.3L262.0,1.4L261.0,1.3L260.0,1.4L259.0,1.6L258.0,1.7L257.0,1.5L256.0,1.4L255.0,1.3L254.0,1.3L253.0,1.3L252.0,1.5L251.0,1.5L250.0,1.8L249.0,1.7L248.0,1.5L247.0,1.3L246.0,1.4L245.0,1.7L244.0,1.9L243.0,1.8L242.0,1.7L241.0,1.5L240.0,1.4L239.0,1.3L238.0,1.3L237.0,1.5L236.0,1.8L235.0,1.4L234.0,1.3L233.0,1.3L232.0,1.3L231.0,1.3L230.0,1.3L229.0,1.5L228.0,1.7L227.0,2.2L226.0,2.2L225.0,2.8L224.0,3.4L223.0,3.0L222.0,3.3L221.0,2.8L220.0,2.5L219.0,3.3L218.0,4.0L217.0,4.0L216.0,3.9L215.0,3.8L214.0,3.7L213.0,4.2L212.0,4.6L211.0,3.9L210.0,3.1L209.0,4.2L208.0,4.7L207.0,5.2L206.0,5.7L205.0,6.6L204.0,8.7L203.0,10.1L202.0,11.0L201.0,10.5L200.0,8.8L199.0,9.3L198.0,9.9L197.0,9.2L196.0,7.5L195.0,6.9L194.0,6.8L193.0,6.6L192.0,5.6L191.0,4.4L190.0,4.1L189.0,3.9L188.0,3.6L187.0,3.8L186.0,4.0L185.0,3.7L184.0,3.7L183.0,4.0L182.0,4.2L181.0,3.7L180.0,3.4L179.0,3.1L178.0,3.7L177.0,4.3L176.0,5.0L175.0,8.5L174.0,10.9L173.0,13.6L172.0,12.8L171.0,8.8L170.0,6.6L169.0,6.5L168.0,5.1L167.0,4.5L166.0,5.1L165.0,5.9L164.0,7.2L163.0,8.0L162.0,7.7L161.0,7.3L160.0,6.8L159.0,5.9L158.0,5.1L157.0,4.7L156.0,4.7L155.0,6.1L154.0,7.4L153.0,8.0L152.0,8.7L151.0,8.9L150.0,7.3L149.0,6.0L148.0,4.3L147.0,4.2L146.0,4.1L145.0,4.6L144.0,5.6L143.0,7.0L142.0,7.6L141.0,8.0L140.0,7.0L139.0,5.3L138.0,3.8L137.0,3.0L136.0,3.8L135.0,4.4L134.0,5.2L133.0,5.0L132.0,4.0L131.0,4.3L130.0,4.2L129.0,4.0L128.0,3.9L127.0,3.9L126.0,3.7L125.0,3.5L124.0,3.5L123.0,4.0L122.0,4.6L121.0,3.9L120.0,3.4L119.0,2.9L118.0,3.0L117.0,3.1L116.0,2.9L115.0,2.8L114.0,3.3L113.0,3.2L112.0,2.5L111.0,3.0L110.0,3.6L109.0,3.7L108.0,4.2L107.0,4.5L106.0,4.3L105.0,3.9L104.0,3.5L103.0,3.4L102.0,3.7L101.0,2.9L100.0,2.4L99.0,3.2L98.0,3.9L97.0,3.0L96.0,2.3L95.0,3.3L94.0,4.9L93.0,5.2L92.0,4.8L91.0,4.5L90.0,5.8L89.0,5.8L88.0,4.5L87.0,4.3L86.0,4.3L85.0,3.4L84.0,2.9L83.0,4.4L82.0,6.9L81.0,7.0L80.0,6.7L79.0,8.6L78.0,8.6L77.0,7.4L76.0,5.9L75.0,6.4L74.0,6.8L73.0,5.3L72.0,4.0L71.0,4.0L70.0,3.4L69.0,2.9L68.0,2.2L67.0,1.3L66.0,1.3Z" fill="#f0f0f0"/></svg>
<div class="abs" style="left:0;top:819.5px;width:339px;height:27.5px;background:#735f88;"></div>
<div class="t" style="top:826.30px;font-size:13.7px;left:3px;color:#f2f2f2">Pista-7</div>
<svg class="abs" style="left:316px;top:824.10px" width="18" height="18" viewBox="0 0 18 18"><circle cx="9.3" cy="9" r="7.6" fill="none" stroke="#e2e6de" stroke-width="1.3"/><path d="M7.55,5.50 L12.35,9.00 L7.55,12.50Z" fill="#e2e6de"/></svg>
<div class="abs" style="left:0;top:847.00px;width:339px;height:64.75px;background:#a684cd;"></div>
<div class="abs" style="left:3px;top:851.00px;width:57px;height:57px;background:#333333"></div>
<svg class="abs" style="left:3px;top:851.00px" width="57" height="57" viewBox="0 0 57 57"><circle cx="28.5" cy="28.5" r="14.6" fill="none" stroke="#a684cd" stroke-width="3.6"/><path d="M25.00,21.50 L34.59,28.50 L25.00,35.50Z" fill="#a684cd"/></svg>
<div class="t" style="left:66px;top:850.10px;font-size:12.6px;color:#f2f2f2">2022-03-28</div>
<div class="t" style="right:682.5px;top:850.10px;font-size:11.8px;color:#f2f2f2">0.96s</div>
<svg class="abs" style="left:0;top:877.30px;overflow:visible" width="339" height="1"><path d="M65.0,0.0L66.0,-1.3L67.0,-1.6L68.0,-2.3L69.0,-2.9L70.0,-3.0L71.0,-3.0L72.0,-3.0L73.0,-2.8L74.0,-2.7L75.0,-2.7L76.0,-2.7L77.0,-2.6L78.0,-2.7L79.0,-2.6L80.0,-2.6L81.0,-2.6L82.0,-2.7L83.0,-6.8L84.0,-10.7L85.0,-7.2L86.0,-3.4L87.0,-2.6L88.0,-2.6L89.0,-2.6L90.0,-2.7L91.0,-2.8L92.0,-2.7L93.0,-2.8L94.0,-2.8L95.0,-2.6L96.0,-5.0L97.0,-9.3L98.0,-6.4L99.0,-2.5L100.0,-2.6L101.0,-2.8L102.0,-3.0L103.0,-3.0L104.0,-3.0L105.0,-3.0L106.0,-2.8L107.0,-2.6L108.0,-2.5L109.0,-2.5L110.0,-2.5L111.0,-2.6L112.0,-2.8L113.0,-2.9L114.0,-2.8L115.0,-2.8L116.0,-2.7L117.0,-2.6L118.0,-2.6L119.0,-2.8L120.0,-2.7L121.0,-2.7L122.0,-2.8L123.0,-2.9L124.0,-2.8L125.0,-2.7L126.0,-2.8L127.0,-2.6L128.0,-2.5L129.0,-2.4L130.0,-2.5L131.0,-2.6L132.0,-2.7L133.0,-2.7L134.0,-2.9L135.0,-2.9L136.0,-9.4L137.0,-10.9L138.0,-7.1L139.0,-3.4L140.0,-2.6L141.0,-2.6L142.0,-2.7L143.0,-2.7L144.0,-2.7L145.0,-2.9L146.0,-2.9L147.0,-3.0L148.0,-3.0L149.0,-2.8L150.0,-2.8L151.0,-2.8L152.0,-2.6L153.0,-2.5L154.0,-2.7L155.0,-2.7L156.0,-3.0L157.0,-2.8L158.0,-2.8L159.0,-2.7L160.0,-2.7L161.0,-2.8L162.0,-2.9L163.0,-2.9L164.0,-2.9L165.0,-2.9L166.0,-2.8L167.0,-2.8L168.0,-2.6L169.0,-2.7L170.0,-2.8L171.0,-2.9L172.0,-2.9L173.0,-3.0L174.0,-3.0L175.0,-2.8L176.0,-2.7L177.0,-2.6L178.0,-2.7L179.0,-2.7L180.0,-2.7L181.0,-5.6L182.0,-8.9L183.0,-7.1L184.0,-4.8L185.0,-5.6L186.0,-8.1L187.0,-11.7L188.0,-9.5L189.0,-7.3L190.0,-5.2L191.0,-3.0L192.0,-3.0L193.0,-3.0L194.0,-2.9L195.0,-2.8L196.0,-2.9L197.0,-3.1L198.0,-3.0L199.0,-3.1L200.0,-3.1L201.0,-2.8L202.0,-2.8L203.0,-3.0L204.0,-3.2L205.0,-3.0L206.0,-3.1L207.0,-3.1L208.0,-2.9L209.0,-2.7L210.0,-2.6L211.0,-2.8L212.0,-3.0L213.0,-3.1L214.0,-3.2L215.0,-3.2L216.0,-3.3L217.0,-3.2L218.0,-3.2L219.0,-3.1L220.0,-3.0L221.0,-3.0L222.0,-2.8L223.0,-3.0L224.0,-2.9L225.0,-2.9L226.0,-3.8L227.0,-6.2L228.0,-8.1L229.0,-10.0L230.0,-12.2L231.0,-13.1L232.0,-13.3L233.0,-13.3L234.0,-13.4L235.0,-13.1L236.0,-11.3L237.0,-9.6L238.0,-7.2L239.0,-4.9L240.0,-4.4L241.0,-4.5L242.0,-4.6L243.0,-4.6L244.0,-4.6L245.0,-4.6L246.0,-4.4L247.0,-5.0L248.0,-5.1L249.0,-5.5L250.0,-5.5L251.0,-5.3L252.0,-5.0L253.0,-4.8L254.0,-4.9L255.0,-4.7L256.0,-4.8L257.0,-5.1L258.0,-5.3L259.0,-5.2L260.0,-5.1L261.0,-5.0L262.0,-5.0L263.0,-4.9L264.0,-4.7L265.0,-5.1L266.0,-5.3L267.0,-5.2L268.0,-5.1L269.0,-6.5L270.0,-7.9L271.0,-8.9L272.0,-7.2L273.0,-5.6L274.0,-4.8L275.0,-4.9L276.0,-5.2L277.0,-5.1L278.0,-5.1L279.0,-5.3L280.0,-5.6L281.0,-5.8L282.0,-5.6L283.0,-5.9L284.0,-5.9L285.0,-7.7L286.0,-9.7L287.0,-10.6L288.0,-9.1L289.0,-8.4L290.0,-7.0L291.0,-6.0L292.0,-6.3L293.0,-6.5L294.0,-7.3L295.0,-7.0L296.0,-7.2L297.0,-7.3L298.0,-7.2L299.0,-6.9L300.0,-6.7L301.0,-5.9L302.0,-5.8L303.0,-5.4L304.0,-5.6L305.0,-6.0L306.0,-6.0L307.0,-5.4L308.0,-5.1L309.0,-6.8L310.0,-8.8L311.0,-9.8L312.0,-7.7L313.0,-5.7L314.0,-5.1L315.0,-5.4L316.0,-5.4L317.0,-5.3L318.0,-5.1L319.0,-5.2L320.0,-4.9L321.0,-4.6L322.0,-4.5L323.0,-4.5L324.0,-4.4L325.0,-4.8L326.0,-4.8L327.0,-4.8L328.0,-5.0L329.0,-5.0L330.0,-5.6L331.0,-5.4L332.0,-5.3L332.0,0.0L332.0,5.5L331.0,5.4L330.0,5.1L329.0,5.1L328.0,5.0L327.0,4.6L326.0,4.7L325.0,5.1L324.0,5.2L323.0,5.1L322.0,5.3L321.0,5.6L320.0,5.5L319.0,5.2L318.0,4.6L317.0,5.2L316.0,5.3L315.0,5.4L314.0,5.1L313.0,5.8L312.0,7.9L311.0,10.6L310.0,9.7L309.0,7.1L308.0,5.0L307.0,5.4L306.0,5.5L305.0,5.9L304.0,6.1L303.0,5.9L302.0,6.0L301.0,6.3L300.0,7.1L299.0,6.6L298.0,6.6L297.0,6.5L296.0,6.2L295.0,5.9L294.0,5.9L293.0,6.3L292.0,6.4L291.0,6.5L290.0,7.8L289.0,9.6L288.0,11.1L287.0,11.6L286.0,9.9L285.0,7.3L284.0,5.6L283.0,5.7L282.0,5.4L281.0,5.6L280.0,5.5L279.0,5.5L278.0,5.6L277.0,5.7L276.0,5.3L275.0,5.2L274.0,4.7L273.0,5.1L272.0,6.7L271.0,8.2L270.0,7.2L269.0,6.2L268.0,5.0L267.0,4.8L266.0,4.9L265.0,5.2L264.0,5.2L263.0,5.0L262.0,5.1L261.0,5.4L260.0,5.3L259.0,5.2L258.0,4.6L257.0,4.7L256.0,4.7L255.0,4.7L254.0,4.9L253.0,5.2L252.0,5.0L251.0,5.3L250.0,5.4L249.0,5.4L248.0,5.4L247.0,5.4L246.0,5.5L245.0,5.1L244.0,4.7L243.0,4.7L242.0,5.1L241.0,5.1L240.0,5.5L239.0,5.4L238.0,7.2L237.0,9.2L236.0,11.4L235.0,13.4L234.0,14.4L233.0,13.9L232.0,13.6L231.0,12.8L230.0,11.7L229.0,10.2L228.0,8.1L227.0,5.5L226.0,3.6L225.0,2.8L224.0,2.8L223.0,2.7L222.0,2.7L221.0,3.0L220.0,3.0L219.0,3.2L218.0,3.2L217.0,3.0L216.0,2.9L215.0,2.7L214.0,2.7L213.0,2.6L212.0,2.9L211.0,3.0L210.0,3.0L209.0,3.1L208.0,3.2L207.0,3.2L206.0,3.1L205.0,2.9L204.0,3.0L203.0,2.8L202.0,3.1L201.0,3.1L200.0,3.0L199.0,3.0L198.0,2.9L197.0,2.9L196.0,2.9L195.0,2.9L194.0,3.1L193.0,3.2L192.0,3.4L191.0,3.4L190.0,5.6L189.0,7.8L188.0,10.3L187.0,12.6L186.0,10.1L185.0,6.5L184.0,4.8L183.0,6.8L182.0,8.7L181.0,5.5L180.0,2.5L179.0,2.5L178.0,2.6L177.0,2.6L176.0,2.7L175.0,2.6L174.0,2.7L173.0,2.9L172.0,2.8L171.0,2.7L170.0,2.7L169.0,2.7L168.0,2.7L167.0,2.5L166.0,2.5L165.0,2.6L164.0,2.7L163.0,2.7L162.0,2.7L161.0,2.6L160.0,2.7L159.0,2.8L158.0,2.8L157.0,2.7L156.0,2.6L155.0,2.5L154.0,2.7L153.0,2.9L152.0,2.8L151.0,2.8L150.0,2.9L149.0,2.6L148.0,2.7L147.0,2.6L146.0,2.5L145.0,2.6L144.0,2.3L143.0,2.5L142.0,2.6L141.0,2.7L140.0,2.7L139.0,3.4L138.0,7.8L137.0,11.9L136.0,9.5L135.0,2.9L134.0,2.9L133.0,2.7L132.0,2.4L131.0,2.6L130.0,2.7L129.0,2.8L128.0,2.8L127.0,2.8L126.0,2.8L125.0,2.7L124.0,2.7L123.0,2.6L122.0,2.6L121.0,2.8L120.0,2.9L119.0,2.9L118.0,2.8L117.0,2.7L116.0,2.6L115.0,2.6L114.0,2.8L113.0,2.8L112.0,2.8L111.0,2.8L110.0,2.6L109.0,2.5L108.0,2.6L107.0,2.5L106.0,2.7L105.0,2.7L104.0,2.8L103.0,2.9L102.0,2.9L101.0,2.8L100.0,2.6L99.0,2.5L98.0,6.5L97.0,9.6L96.0,5.6L95.0,2.7L94.0,2.6L93.0,2.5L92.0,2.6L91.0,2.6L90.0,2.7L89.0,2.7L88.0,2.6L87.0,2.6L86.0,3.6L85.0,8.1L84.0,12.4L83.0,7.7L82.0,2.9L81.0,2.7L80.0,2.8L79.0,2.8L78.0,2.9L77.0,2.7L76.0,2.6L75.0,2.6L74.0,2.7L73.0,2.7L72.0,2.6L71.0,2.5L70.0,2.5L69.0,2.6L68.0,2.3L67.0,1.6L66.0,1.3Z" fill="#f0f0f0"/></svg>
<div class="abs" style="left:0;top:911.75px;width:339px;height:64.75px;background:repeating-linear-gradient(135deg,#7e67a5 0px,#7e67a5 3.8px,#4e4262 3.8px,#4e4262 5px);"></div>
<div class="abs" style="left:3px;top:915.75px;width:57px;height:57px;background:#333333"></div>
<svg class="abs" style="left:3px;top:915.75px" width="57" height="57" viewBox="0 0 57 57"><circle cx="28.5" cy="28.5" r="14.6" fill="none" stroke="#a684cd" stroke-width="3.6"/><path d="M25.00,21.50 L34.59,28.50 L25.00,35.50Z" fill="#a684cd"/></svg>
<div class="t" style="left:66px;top:914.85px;font-size:12.6px;color:#f2f2f2">2022-04-04</div>
<svg class="abs" style="left:0;top:942.05px;overflow:visible" width="339" height="1"><path d="M65.0,0.0L66.0,-6.6L67.0,-7.8L68.0,-8.9L69.0,-10.1L70.0,-11.0L71.0,-10.4L72.0,-10.9L73.0,-10.1L74.0,-9.8L75.0,-9.6L76.0,-9.3L77.0,-8.9L78.0,-9.0L79.0,-9.3L80.0,-9.9L81.0,-10.7L82.0,-11.2L83.0,-11.2L84.0,-11.1L85.0,-11.1L86.0,-10.9L87.0,-10.5L88.0,-10.4L89.0,-10.8L90.0,-10.9L91.0,-10.7L92.0,-10.4L93.0,-10.0L94.0,-9.7L95.0,-9.6L96.0,-9.6L97.0,-9.4L98.0,-10.0L99.0,-9.9L100.0,-9.4L101.0,-9.0L102.0,-8.6L103.0,-8.0L104.0,-6.4L105.0,-4.5L106.0,-4.3L107.0,-4.3L108.0,-4.2L109.0,-4.2L110.0,-6.4L111.0,-8.7L112.0,-11.2L113.0,-11.5L114.0,-12.0L115.0,-11.0L116.0,-11.0L117.0,-10.7L118.0,-10.5L119.0,-10.6L120.0,-11.2L121.0,-11.4L122.0,-11.6L123.0,-11.8L124.0,-12.0L125.0,-11.9L126.0,-11.8L127.0,-12.0L128.0,-12.0L129.0,-12.0L130.0,-11.7L131.0,-11.2L132.0,-11.3L133.0,-11.6L134.0,-11.9L135.0,-11.9L136.0,-11.7L137.0,-11.9L138.0,-12.4L139.0,-12.5L140.0,-12.5L141.0,-12.5L142.0,-12.3L143.0,-11.7L144.0,-11.4L145.0,-11.8L146.0,-11.6L147.0,-11.5L148.0,-11.4L149.0,-11.1L150.0,-11.5L151.0,-11.4L152.0,-10.8L153.0,-10.5L154.0,-10.6L155.0,-10.8L156.0,-10.9L157.0,-11.4L158.0,-11.7L159.0,-12.3L160.0,-10.2L161.0,-7.4L162.0,-5.5L163.0,-3.1L164.0,-3.0L165.0,-3.0L166.0,-3.0L167.0,-2.9L168.0,-3.0L169.0,-3.1L170.0,-3.4L171.0,-4.1L172.0,-4.7L173.0,-5.2L174.0,-5.8L175.0,-5.1L176.0,-4.4L177.0,-4.0L178.0,-3.8L179.0,-4.2L180.0,-4.8L181.0,-5.2L182.0,-5.3L183.0,-5.7L184.0,-6.2L185.0,-6.9L186.0,-6.7L187.0,-6.0L188.0,-5.5L189.0,-4.8L190.0,-4.3L191.0,-4.3L192.0,-4.6L193.0,-4.9L194.0,-4.7L195.0,-4.2L196.0,-3.9L197.0,-3.7L198.0,-3.5L199.0,-3.0L200.0,-5.5L201.0,-8.0L202.0,-10.6L203.0,-12.1L204.0,-11.9L205.0,-11.9L206.0,-11.9L207.0,-12.2L208.0,-12.2L209.0,-11.7L210.0,-11.9L211.0,-11.5L212.0,-11.2L213.0,-11.1L214.0,-11.1L215.0,-11.2L216.0,-11.7L217.0,-11.2L218.0,-11.6L219.0,-11.7L220.0,-11.5L221.0,-11.5L222.0,-11.8L223.0,-11.6L224.0,-11.7L225.0,-8.1L226.0,-4.7L227.0,-2.5L228.0,-2.6L229.0,-2.5L230.0,-2.5L231.0,-2.6L232.0,-2.6L233.0,-2.6L234.0,-2.6L235.0,-2.8L236.0,-6.0L237.0,-9.3L238.0,-11.3L239.0,-11.4L240.0,-11.3L241.0,-10.9L242.0,-10.7L243.0,-10.8L244.0,-10.9L245.0,-10.6L246.0,-10.6L247.0,-10.9L248.0,-10.1L249.0,-9.8L250.0,-10.1L251.0,-10.4L252.0,-10.7L253.0,-11.1L254.0,-10.6L255.0,-10.4L256.0,-10.3L257.0,-10.2L258.0,-10.3L259.0,-9.8L260.0,-9.8L261.0,-9.9L262.0,-10.2L263.0,-10.7L264.0,-10.9L265.0,-10.3L266.0,-9.0L267.0,-7.9L268.0,-6.6L269.0,-5.2L270.0,-4.0L271.0,-3.4L272.0,-3.1L273.0,-2.7L274.0,-2.2L275.0,-1.7L276.0,-1.5L277.0,-1.6L278.0,-1.6L279.0,-1.6L280.0,-1.6L281.0,-1.6L282.0,-1.6L283.0,-1.6L284.0,-1.5L285.0,-1.5L286.0,-1.5L287.0,-1.4L288.0,-1.5L289.0,-1.5L290.0,-1.5L291.0,-1.5L292.0,-1.6L293.0,-1.5L294.0,-1.5L295.0,-1.5L296.0,-1.5L297.0,-1.6L298.0,-1.6L299.0,-1.5L300.0,-1.5L301.0,-1.4L302.0,-1.5L303.0,-1.6L304.0,-2.1L305.0,-2.7L306.0,-3.2L307.0,-3.6L308.0,-4.0L309.0,-5.5L310.0,-7.1L311.0,-8.6L312.0,-10.6L313.0,-11.5L314.0,-10.2L315.0,-8.4L316.0,-6.6L317.0,-4.8L318.0,-3.9L319.0,-3.6L320.0,-3.1L321.0,-2.7L322.0,-2.5L323.0,-2.4L324.0,-2.2L325.0,-2.1L326.0,-2.2L327.0,-2.1L328.0,-2.0L329.0,-2.0L330.0,-2.0L331.0,-2.0L332.0,-2.0L332.0,0.0L332.0,1.9L331.0,1.9L330.0,2.0L329.0,2.1L328.0,2.2L327.0,2.3L326.0,2.4L325.0,2.3L324.0,2.4L323.0,2.5L322.0,2.5L321.0,2.7L320.0,3.1L319.0,3.4L318.0,4.0L317.0,4.6L316.0,6.3L315.0,8.0L314.0,9.8L313.0,11.6L312.0,10.0L311.0,8.4L310.0,7.0L309.0,5.5L308.0,4.0L307.0,3.4L306.0,3.0L305.0,2.5L304.0,2.1L303.0,1.6L302.0,1.5L301.0,1.6L300.0,1.5L299.0,1.5L298.0,1.5L297.0,1.4L296.0,1.4L295.0,1.5L294.0,1.4L293.0,1.5L292.0,1.6L291.0,1.6L290.0,1.6L289.0,1.4L288.0,1.5L287.0,1.4L286.0,1.4L285.0,1.4L284.0,1.4L283.0,1.4L282.0,1.4L281.0,1.5L280.0,1.5L279.0,1.6L278.0,1.5L277.0,1.4L276.0,1.5L275.0,1.6L274.0,2.2L273.0,2.7L272.0,3.2L271.0,3.6L270.0,4.1L269.0,5.6L268.0,6.8L267.0,8.3L266.0,9.8L265.0,11.1L264.0,11.3L263.0,10.8L262.0,10.4L261.0,10.6L260.0,10.3L259.0,9.4L258.0,9.3L257.0,9.5L256.0,10.3L255.0,10.9L254.0,10.9L253.0,10.4L252.0,10.3L251.0,9.9L250.0,9.7L249.0,9.9L248.0,10.5L247.0,11.1L246.0,11.3L245.0,11.4L244.0,10.7L243.0,10.6L242.0,11.1L241.0,11.5L240.0,11.6L239.0,11.5L238.0,10.8L237.0,8.6L236.0,5.6L235.0,2.7L234.0,2.5L233.0,2.3L232.0,2.5L231.0,2.5L230.0,2.4L229.0,2.4L228.0,2.5L227.0,2.5L226.0,4.8L225.0,8.4L224.0,12.0L223.0,12.0L222.0,12.0L221.0,11.8L220.0,11.9L219.0,12.3L218.0,12.3L217.0,11.8L216.0,12.1L215.0,11.3L214.0,11.8L213.0,12.0L212.0,11.9L211.0,11.8L210.0,12.6L209.0,12.3L208.0,12.0L207.0,11.7L206.0,11.4L205.0,11.3L204.0,10.6L203.0,11.1L202.0,10.0L201.0,7.4L200.0,5.1L199.0,3.0L198.0,3.3L197.0,3.6L196.0,3.9L195.0,4.3L194.0,4.8L193.0,4.9L192.0,4.3L191.0,4.2L190.0,3.9L189.0,4.3L188.0,5.2L187.0,6.2L186.0,7.1L185.0,6.9L184.0,6.5L183.0,5.9L182.0,5.4L181.0,5.0L180.0,4.9L179.0,4.2L178.0,3.6L177.0,3.8L176.0,4.4L175.0,5.2L174.0,5.8L173.0,5.3L172.0,4.4L171.0,3.6L170.0,3.0L169.0,2.9L168.0,3.1L167.0,2.9L166.0,2.9L165.0,2.8L164.0,2.8L163.0,3.0L162.0,4.9L161.0,7.4L160.0,10.1L159.0,12.1L158.0,11.6L157.0,11.4L156.0,11.2L155.0,11.7L154.0,11.8L153.0,12.0L152.0,11.8L151.0,11.2L150.0,11.3L149.0,11.2L148.0,11.5L147.0,11.4L146.0,11.3L145.0,11.3L144.0,11.4L143.0,11.9L142.0,11.6L141.0,11.5L140.0,11.6L139.0,12.0L138.0,11.3L137.0,11.6L136.0,12.0L135.0,12.1L134.0,11.8L133.0,11.4L132.0,11.4L131.0,11.6L130.0,11.5L129.0,11.5L128.0,11.5L127.0,11.4L126.0,10.5L125.0,11.5L124.0,11.4L123.0,11.8L122.0,11.9L121.0,11.3L120.0,11.2L119.0,11.1L118.0,10.9L117.0,10.9L116.0,10.9L115.0,10.7L114.0,10.9L113.0,11.4L112.0,10.7L111.0,8.3L110.0,6.2L109.0,4.0L108.0,4.4L107.0,4.1L106.0,4.0L105.0,4.3L104.0,6.3L103.0,8.4L102.0,8.9L101.0,9.2L100.0,9.4L99.0,9.2L98.0,9.0L97.0,8.9L96.0,9.2L95.0,9.5L94.0,10.4L93.0,10.8L92.0,10.5L91.0,9.9L90.0,9.6L89.0,10.5L88.0,10.6L87.0,11.1L86.0,11.6L85.0,11.7L84.0,11.2L83.0,10.9L82.0,10.2L81.0,9.7L80.0,9.3L79.0,9.0L78.0,8.4L77.0,8.7L76.0,9.8L75.0,10.0L74.0,9.9L73.0,10.4L72.0,11.0L71.0,11.3L70.0,11.1L69.0,9.8L68.0,8.5L67.0,7.0L66.0,6.3Z" fill="#f0f0f0"/></svg>
<div class="abs" style="left:0;top:976.50px;width:339px;height:64.75px;background:repeating-linear-gradient(135deg,#7e67a5 0px,#7e67a5 3.8px,#4e4262 3.8px,#4e4262 5px);"></div>
<div class="abs" style="left:3px;top:980.50px;width:57px;height:57px;background:#333333"></div>
<svg class="abs" style="left:3px;top:980.50px" width="57" height="57" viewBox="0 0 57 57"><circle cx="28.5" cy="28.5" r="14.6" fill="none" stroke="#a684cd" stroke-width="3.6"/><path d="M25.00,21.50 L34.59,28.50 L25.00,35.50Z" fill="#a684cd"/></svg>
<div class="t" style="left:66px;top:979.60px;font-size:12.6px;color:#f2f2f2">2022-04-04</div>
<svg class="abs" style="left:0;top:1006.80px;overflow:visible" width="339" height="1"><path d="M65.0,0.0L66.0,-8.3L67.0,-8.7L68.0,-8.5L69.0,-8.5L70.0,-8.9L71.0,-9.2L72.0,-9.9L73.0,-10.3L74.0,-10.2L75.0,-10.1L76.0,-10.3L77.0,-10.2L78.0,-11.3L79.0,-10.7L80.0,-10.3L81.0,-10.2L82.0,-10.2L83.0,-10.1L84.0,-10.0L85.0,-10.3L86.0,-9.6L87.0,-9.2L88.0,-9.1L89.0,-9.3L90.0,-9.2L91.0,-9.3L92.0,-9.4L93.0,-9.6L94.0,-9.9L95.0,-10.2L96.0,-9.5L97.0,-10.2L98.0,-11.4L99.0,-11.5L100.0,-11.2L101.0,-11.4L102.0,-11.7L103.0,-11.2L104.0,-10.2L105.0,-9.7L106.0,-9.8L107.0,-10.1L108.0,-10.2L109.0,-10.7L110.0,-10.3L111.0,-10.0L112.0,-9.9L113.0,-10.1L114.0,-9.5L115.0,-9.4L116.0,-9.6L117.0,-9.6L118.0,-9.8L119.0,-10.5L120.0,-9.9L121.0,-10.3L122.0,-10.0L123.0,-10.0L124.0,-10.5L125.0,-11.1L126.0,-10.4L127.0,-11.1L128.0,-11.1L129.0,-10.9L130.0,-11.0L131.0,-12.0L132.0,-11.4L133.0,-12.1L134.0,-12.2L135.0,-11.9L136.0,-11.5L137.0,-11.4L138.0,-11.3L139.0,-11.5L140.0,-11.2L141.0,-10.8L142.0,-10.8L143.0,-11.1L144.0,-11.3L145.0,-11.3L146.0,-11.4L147.0,-11.6L148.0,-11.7L149.0,-11.3L150.0,-11.8L151.0,-11.2L152.0,-9.4L153.0,-7.1L154.0,-5.8L155.0,-7.3L156.0,-8.4L157.0,-9.6L158.0,-9.9L159.0,-9.7L160.0,-10.0L161.0,-10.7L162.0,-10.4L163.0,-10.5L164.0,-10.6L165.0,-10.9L166.0,-11.1L167.0,-11.1L168.0,-10.6L169.0,-10.8L170.0,-10.5L171.0,-10.1L172.0,-9.9L173.0,-10.1L174.0,-10.0L175.0,-10.4L176.0,-10.3L177.0,-10.2L178.0,-10.3L179.0,-10.4L180.0,-11.0L181.0,-11.3L182.0,-11.2L183.0,-11.3L184.0,-11.1L185.0,-10.8L186.0,-10.6L187.0,-8.2L188.0,-6.0L189.0,-4.7L190.0,-5.6L191.0,-6.4L192.0,-7.1L193.0,-8.1L194.0,-8.3L195.0,-8.4L196.0,-8.8L197.0,-9.2L198.0,-9.2L199.0,-9.2L200.0,-8.9L201.0,-8.9L202.0,-9.0L203.0,-8.8L204.0,-8.7L205.0,-8.7L206.0,-8.6L207.0,-8.6L208.0,-8.4L209.0,-7.0L210.0,-5.6L211.0,-5.3L212.0,-5.4L213.0,-5.6L214.0,-5.8L215.0,-5.9L216.0,-6.5L217.0,-6.4L218.0,-6.6L219.0,-6.5L220.0,-6.5L221.0,-7.0L222.0,-7.7L223.0,-7.3L224.0,-7.2L225.0,-7.1L226.0,-7.2L227.0,-7.4L228.0,-7.2L229.0,-7.3L230.0,-6.4L231.0,-5.9L232.0,-5.5L233.0,-4.8L234.0,-4.1L235.0,-3.8L236.0,-4.4L237.0,-4.8L238.0,-5.0L239.0,-4.9L240.0,-5.4L241.0,-5.6L242.0,-5.5L243.0,-5.5L244.0,-5.9L245.0,-6.6L246.0,-7.2L247.0,-6.9L248.0,-7.0L249.0,-7.0L250.0,-6.6L251.0,-6.1L252.0,-6.0L253.0,-6.3L254.0,-6.8L255.0,-7.0L256.0,-6.6L257.0,-5.8L258.0,-5.0L259.0,-4.7L260.0,-4.1L261.0,-3.4L262.0,-2.9L263.0,-3.2L264.0,-3.3L265.0,-3.5L266.0,-3.9L267.0,-4.3L268.0,-4.6L269.0,-4.5L270.0,-5.1L271.0,-5.0L272.0,-5.4L273.0,-5.6L274.0,-5.8L275.0,-6.1L276.0,-6.0L277.0,-5.9L278.0,-6.0L279.0,-5.9L280.0,-5.8L281.0,-5.7L282.0,-5.5L283.0,-5.7L284.0,-5.4L285.0,-4.7L286.0,-4.0L287.0,-3.3L288.0,-2.6L289.0,-1.9L290.0,-2.2L291.0,-2.4L292.0,-2.5L293.0,-2.4L294.0,-2.5L295.0,-2.6L296.0,-2.8L297.0,-2.9L298.0,-3.1L299.0,-3.2L300.0,-3.3L301.0,-2.9L302.0,-2.5L303.0,-2.2L304.0,-1.9L305.0,-1.5L306.0,-1.4L307.0,-1.3L308.0,-1.4L309.0,-1.4L310.0,-1.4L311.0,-1.4L312.0,-1.4L313.0,-1.5L314.0,-1.5L315.0,-1.5L316.0,-1.5L317.0,-1.6L318.0,-1.6L319.0,-1.6L320.0,-1.5L321.0,-1.5L322.0,-1.5L323.0,-1.4L324.0,-1.4L325.0,-1.4L326.0,-1.4L327.0,-1.4L328.0,-1.4L329.0,-1.4L330.0,-1.4L331.0,-1.5L332.0,-1.5L332.0,0.0L332.0,1.6L331.0,1.6L330.0,1.5L329.0,1.5L328.0,1.5L327.0,1.5L326.0,1.5L325.0,1.5L324.0,1.4L323.0,1.5L322.0,1.5L321.0,1.5L320.0,1.5L319.0,1.5L318.0,1.4L317.0,1.4L316.0,1.4L315.0,1.4L314.0,1.5L313.0,1.5L312.0,1.6L311.0,1.5L310.0,1.4L309.0,1.4L308.0,1.4L307.0,1.5L306.0,1.5L305.0,1.6L304.0,2.0L303.0,2.4L302.0,2.7L301.0,3.0L300.0,3.4L299.0,3.6L298.0,3.5L297.0,3.3L296.0,3.1L295.0,2.9L294.0,2.7L293.0,2.7L292.0,2.5L291.0,2.4L290.0,2.3L289.0,2.1L288.0,2.6L287.0,3.2L286.0,3.8L285.0,4.5L284.0,5.3L283.0,5.8L282.0,5.8L281.0,5.8L280.0,6.1L279.0,6.3L278.0,6.3L277.0,6.1L276.0,5.9L275.0,6.3L274.0,5.9L273.0,5.6L272.0,5.3L271.0,5.0L270.0,4.9L269.0,4.7L268.0,4.2L267.0,3.9L266.0,3.7L265.0,3.5L264.0,3.2L263.0,3.0L262.0,3.0L261.0,3.5L260.0,4.2L259.0,5.0L258.0,5.7L257.0,6.3L256.0,6.3L255.0,6.3L254.0,6.5L253.0,6.4L252.0,6.4L251.0,6.6L250.0,6.8L249.0,6.7L248.0,6.7L247.0,6.8L246.0,6.8L245.0,6.6L244.0,6.2L243.0,5.9L242.0,5.7L241.0,5.7L240.0,5.5L239.0,5.2L238.0,4.8L237.0,4.5L236.0,4.2L235.0,3.9L234.0,4.2L233.0,4.9L232.0,5.8L231.0,6.4L230.0,6.8L229.0,6.9L228.0,7.3L227.0,7.0L226.0,7.2L225.0,7.2L224.0,7.1L223.0,7.1L222.0,7.6L221.0,7.7L220.0,7.4L219.0,7.4L218.0,7.2L217.0,6.5L216.0,6.0L215.0,5.9L214.0,5.7L213.0,5.6L212.0,5.5L211.0,5.3L210.0,6.0L209.0,7.4L208.0,9.2L207.0,9.7L206.0,9.7L205.0,9.8L204.0,9.3L203.0,9.1L202.0,9.1L201.0,8.9L200.0,8.9L199.0,9.2L198.0,9.1L197.0,9.2L196.0,8.8L195.0,8.7L194.0,9.0L193.0,8.9L192.0,8.0L191.0,7.0L190.0,5.8L189.0,5.1L188.0,6.6L187.0,7.8L186.0,9.3L185.0,9.9L184.0,10.1L183.0,10.6L182.0,10.7L181.0,10.1L180.0,10.0L179.0,10.5L178.0,10.7L177.0,11.2L176.0,11.5L175.0,11.3L174.0,10.7L173.0,10.8L172.0,10.4L171.0,9.9L170.0,10.0L169.0,10.7L168.0,11.1L167.0,11.0L166.0,10.9L165.0,10.8L164.0,10.6L163.0,10.4L162.0,9.7L161.0,10.2L160.0,10.1L159.0,9.8L158.0,9.5L157.0,8.8L156.0,8.0L155.0,6.9L154.0,5.9L153.0,7.2L152.0,9.2L151.0,10.9L150.0,11.5L149.0,11.6L148.0,12.0L147.0,12.2L146.0,11.9L145.0,11.3L144.0,10.9L143.0,11.0L142.0,10.7L141.0,10.8L140.0,10.9L139.0,11.0L138.0,10.4L137.0,10.3L136.0,10.9L135.0,11.4L134.0,11.6L133.0,11.4L132.0,11.4L131.0,10.8L130.0,10.6L129.0,10.1L128.0,10.2L127.0,11.1L126.0,11.1L125.0,11.5L124.0,10.7L123.0,10.0L122.0,9.6L121.0,9.9L120.0,9.8L119.0,9.3L118.0,9.3L117.0,9.2L116.0,9.1L115.0,8.7L114.0,9.4L113.0,9.6L112.0,9.5L111.0,9.4L110.0,9.4L109.0,9.7L108.0,9.3L107.0,10.0L106.0,10.1L105.0,10.1L104.0,10.0L103.0,9.8L102.0,10.1L101.0,10.6L100.0,10.5L99.0,10.3L98.0,10.5L97.0,11.0L96.0,11.4L95.0,10.6L94.0,10.8L93.0,10.6L92.0,10.3L91.0,9.9L90.0,10.5L89.0,10.0L88.0,10.5L87.0,10.8L86.0,10.9L85.0,10.8L84.0,11.1L83.0,10.7L82.0,10.4L81.0,10.6L80.0,11.2L79.0,11.8L78.0,11.5L77.0,10.9L76.0,10.5L75.0,10.0L74.0,9.6L73.0,9.1L72.0,9.1L71.0,9.3L70.0,9.4L69.0,8.9L68.0,8.4L67.0,8.4L66.0,8.0Z" fill="#f0f0f0"/></svg>
<div class="abs" style="left:338px;top:137px;width:1px;height:877px;background:rgba(120,170,230,0.0)"></div>
</body></html>
